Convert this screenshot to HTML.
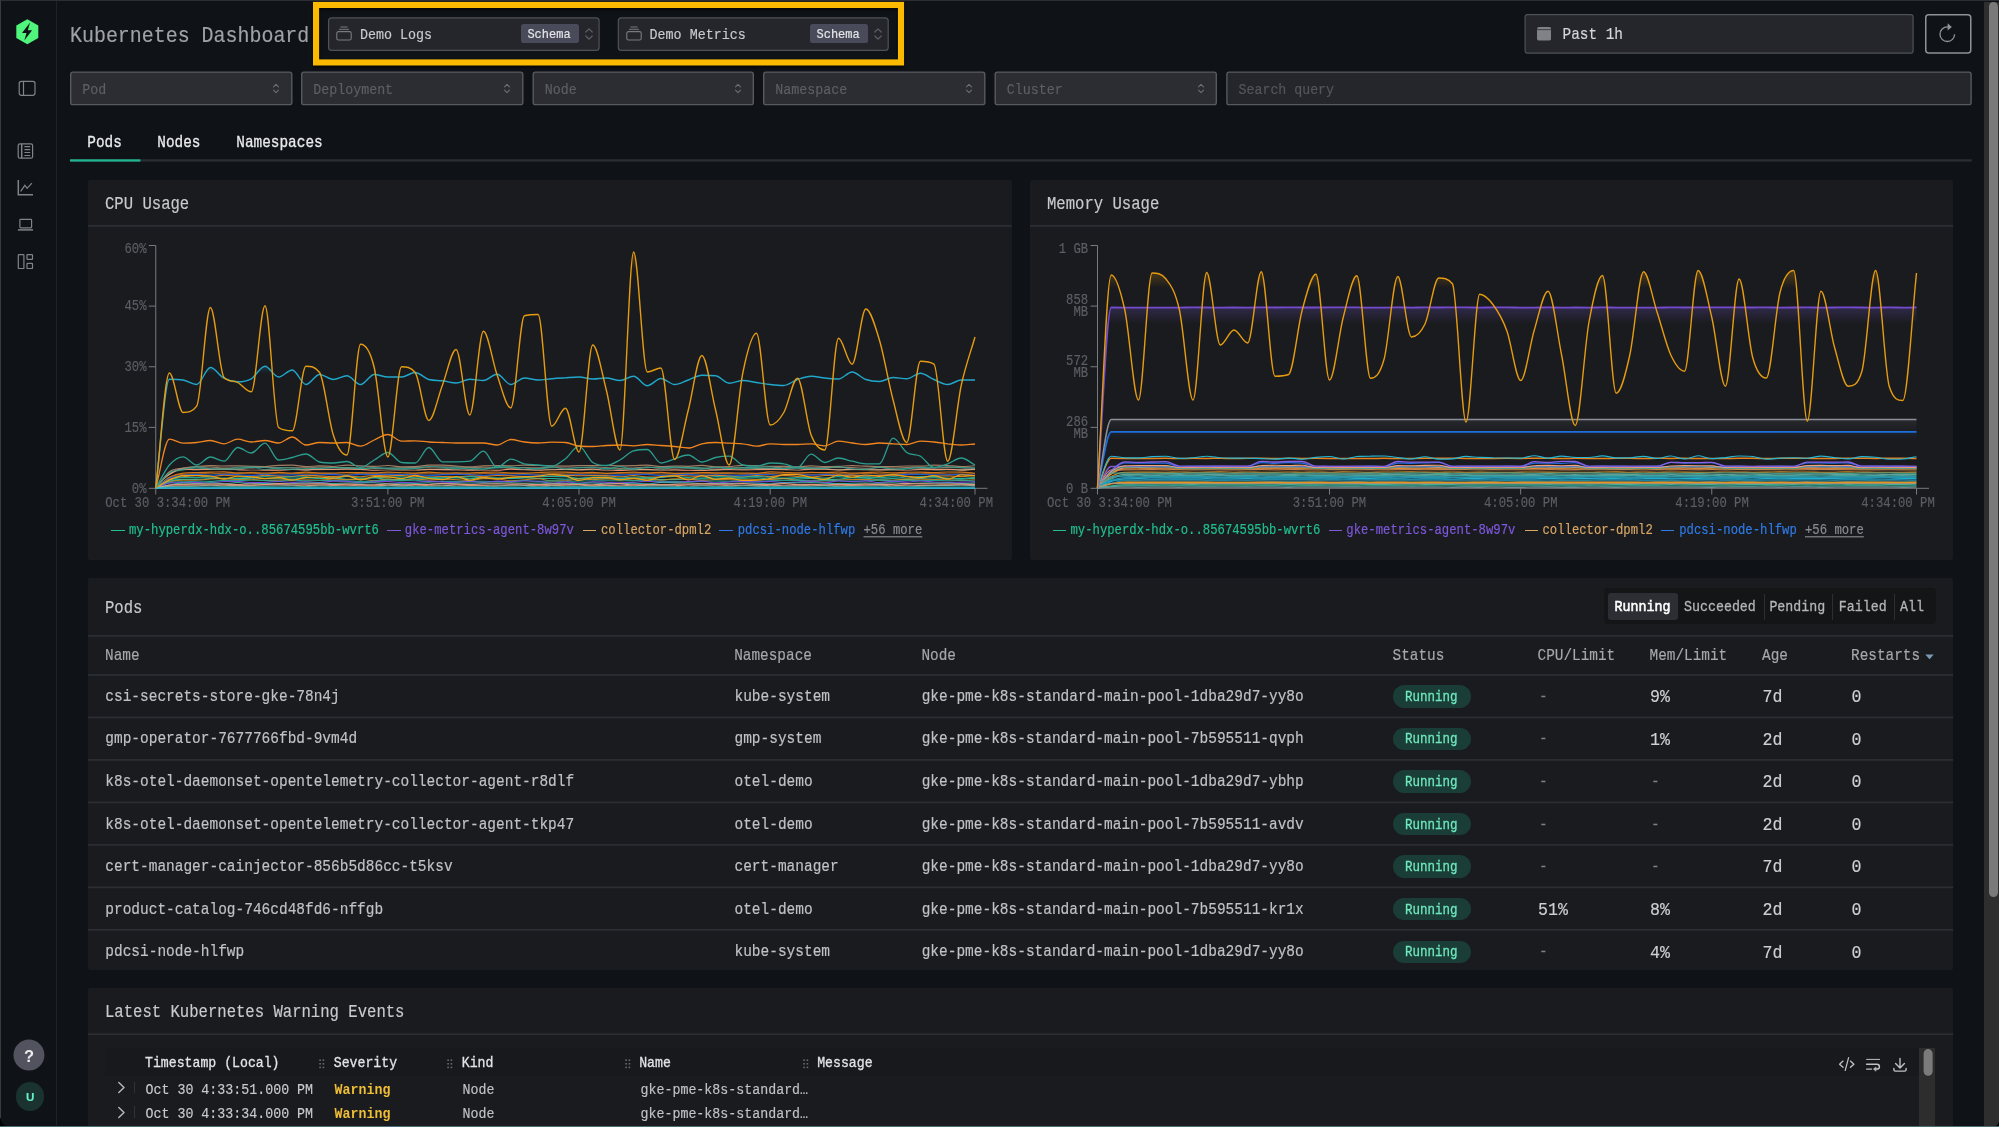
<!DOCTYPE html>
<html><head><meta charset="utf-8"><title>Kubernetes Dashboard</title>
<style>
html,body{margin:0;padding:0;background:#0f1216;}
body{width:1999px;height:1127px;position:relative;overflow:hidden;font-family:"Liberation Mono", monospace;}
.t{position:absolute;white-space:pre;font-family:"Liberation Mono", monospace;-webkit-text-stroke:0.15px currentColor;}
.md{-webkit-text-stroke:0.26px currentColor;}
.r{position:absolute;display:block;}
#wrap{position:absolute;left:0;top:0;width:1999px;height:1127px;will-change:transform;}
</style></head><body><div id="wrap">
<div class="r" style="left:0px;top:0px;width:1999.00px;height:1.00px;background:#2c2e33"></div>
<div class="r" style="left:0px;top:0px;width:1.00px;height:1127.00px;background:#3a3b40"></div>
<div class="r" style="left:55.6px;top:1px;width:1.20px;height:1126.00px;background:#1f2126"></div>
<div class="r" style="left:1984px;top:1.5px;width:15.00px;height:1125.50px;background:#2e2e2e"></div>
<div class="r" style="left:1989px;top:2px;width:8.50px;height:895.00px;background:#7a7a7a;border-radius:5px"></div>
<div class="r" style="left:88px;top:180px;width:923.50px;height:379.60px;background:#1a1b1f;border-radius:2px"></div>
<div class="r" style="left:1030px;top:180px;width:923.20px;height:379.60px;background:#1a1b1f;border-radius:2px"></div>
<div class="r" style="left:88px;top:578px;width:1865.20px;height:392.00px;background:#1a1b1f;border-radius:2px"></div>
<div class="r" style="left:88px;top:988px;width:1865.20px;height:139.00px;background:#1a1b1f;border-radius:2px 2px 0 0"></div>
<svg class="r" style="left:0;top:0" width="1999" height="1127" viewBox="0 0 1999 1127">
<defs>
<linearGradient id="gP" x1="0" y1="0" x2="0" y2="1" gradientUnits="objectBoundingBox"><stop offset="0" stop-color="#7c5cdc" stop-opacity="0.22"/><stop offset="0.09" stop-color="#7c5cdc" stop-opacity="0"/></linearGradient>
<linearGradient id="gO" x1="0" y1="0" x2="0" y2="1"><stop offset="0" stop-color="#f59f00" stop-opacity="0.25"/><stop offset="0.08" stop-color="#f59f00" stop-opacity="0"/></linearGradient>
<linearGradient id="gG" x1="0" y1="0" x2="0" y2="1"><stop offset="0" stop-color="#868e96" stop-opacity="0.12"/><stop offset="0.2" stop-color="#868e96" stop-opacity="0"/></linearGradient>
<linearGradient id="gB" x1="0" y1="0" x2="0" y2="1"><stop offset="0" stop-color="#1c6fd8" stop-opacity="0.1"/><stop offset="0.12" stop-color="#1c6fd8" stop-opacity="0"/></linearGradient>
<linearGradient id="gT" x1="0" y1="0" x2="0" y2="1"><stop offset="0" stop-color="#22a8c8" stop-opacity="0.2"/><stop offset="0.06" stop-color="#22a8c8" stop-opacity="0"/></linearGradient>
</defs>
<path d="M148.75,245.5H155.75V488.3" fill="none" stroke="#777a80" stroke-width="1"/><path d="M155.75,488.3H987.5" fill="none" stroke="#777a80" stroke-width="1"/><path d="M148.75,306.1H155.75" stroke="#777a80" stroke-width="1"/><path d="M148.75,366.75H155.75" stroke="#777a80" stroke-width="1"/><path d="M148.75,427.4H155.75" stroke="#777a80" stroke-width="1"/><path d="M148.75,488.3H155.75" stroke="#777a80" stroke-width="1"/><path d="M155.75,488.3V494.5" stroke="#777a80" stroke-width="1"/><path d="M387.9,488.3V494.5" stroke="#777a80" stroke-width="1"/><path d="M579.0,488.3V494.5" stroke="#777a80" stroke-width="1"/><path d="M770.2,488.3V494.5" stroke="#777a80" stroke-width="1"/><path d="M975,488.3V494.5" stroke="#777a80" stroke-width="1"/>
<path d="M155.8,488.0C160.3,482.6 164.9,475.0 169.4,471.7C174.0,468.4 178.5,469.0 183.1,468.1C187.6,467.3 192.2,466.9 196.7,466.5C201.3,466.1 205.8,465.6 210.4,465.6C214.9,465.6 219.5,466.0 224.0,466.0C228.6,466.0 233.1,465.9 237.7,465.9C242.2,465.9 246.8,466.2 251.3,466.3C255.9,466.4 260.4,466.5 265.0,466.5C269.5,466.5 274.1,465.4 278.6,465.3C283.2,465.1 287.7,465.1 292.3,465.1C296.8,465.1 301.4,466.6 305.9,466.6C310.5,466.6 315.0,465.9 319.6,465.9C324.1,465.9 328.7,466.5 333.3,466.5C337.8,466.5 342.4,465.1 346.9,465.1C351.5,465.1 356.0,465.7 360.6,465.9C365.1,466.1 369.7,466.4 374.2,466.4C378.8,466.4 383.3,465.5 387.9,465.5C392.4,465.5 397.0,466.8 401.5,466.8C406.1,466.8 410.6,466.8 415.2,466.7C419.7,466.7 424.3,465.2 428.8,465.1C433.4,465.1 437.9,465.1 442.5,465.1C447.0,465.1 451.6,465.8 456.1,466.1C460.7,466.4 465.2,466.8 469.8,466.8C474.3,466.8 478.9,466.0 483.4,465.8C488.0,465.6 492.5,465.5 497.1,465.5C501.7,465.5 506.2,465.9 510.8,465.9C515.3,465.9 519.9,465.1 524.4,465.1C529.0,465.1 533.5,465.4 538.1,465.5C542.6,465.6 547.2,465.8 551.7,465.9C556.3,466.0 560.8,466.0 565.4,466.0C569.9,466.0 574.5,465.5 579.0,465.5C583.6,465.5 588.1,465.5 592.7,465.5C597.2,465.5 601.8,465.5 606.3,465.5C610.9,465.5 615.4,465.9 620.0,465.9C624.5,465.9 629.1,465.8 633.6,465.6C638.2,465.5 642.7,465.1 647.3,465.1C651.8,465.1 656.4,466.6 660.9,466.6C665.5,466.6 670.1,466.1 674.6,466.1C679.2,466.1 683.7,466.3 688.3,466.3C692.8,466.3 697.4,465.4 701.9,465.4C706.5,465.4 711.0,466.9 715.6,466.9C720.1,466.9 724.7,466.9 729.2,466.7C733.8,466.4 738.3,465.3 742.9,465.3C747.4,465.3 752.0,465.5 756.5,465.7C761.1,465.9 765.6,466.4 770.2,466.4C774.7,466.4 779.3,466.4 783.8,466.4C788.4,466.4 792.9,466.8 797.5,466.8C802.0,466.8 806.6,465.9 811.1,465.9C815.7,465.9 820.2,466.6 824.8,466.6C829.3,466.6 833.9,466.5 838.5,466.3C843.0,466.2 847.6,465.6 852.1,465.6C856.7,465.6 861.2,466.0 865.8,466.2C870.3,466.3 874.9,466.7 879.4,466.7C884.0,466.7 888.5,466.7 893.1,466.6C897.6,466.6 902.2,466.0 906.7,466.0C911.3,466.0 915.8,466.2 920.4,466.2C924.9,466.2 929.5,465.2 934.0,465.2C938.6,465.2 943.1,465.3 947.7,465.5C952.2,465.8 956.8,466.5 961.3,466.5C965.9,466.5 970.4,466.1 975.0,465.8" fill="none" stroke="#b08a6a" stroke-width="1.152" stroke-opacity="0.9" stroke-linejoin="round"/><path d="M155.8,488.0C160.3,483.3 164.9,477.1 169.4,473.8C174.0,470.5 178.5,469.5 183.1,468.3C187.6,467.1 192.2,466.9 196.7,466.9C201.3,466.9 205.8,466.9 210.4,467.0C214.9,467.0 219.5,468.1 224.0,468.1C228.6,468.1 233.1,468.0 237.7,468.0C242.2,467.9 246.8,468.0 251.3,467.9C255.9,467.8 260.4,467.3 265.0,467.3C269.5,467.3 274.1,467.8 278.6,467.8C283.2,467.8 287.7,467.8 292.3,467.8C296.8,467.8 301.4,467.8 305.9,467.7C310.5,467.7 315.0,467.1 319.6,467.1C324.1,467.1 328.7,467.5 333.3,467.5C337.8,467.5 342.4,467.4 346.9,467.4C351.5,467.4 356.0,467.8 360.6,467.9C365.1,468.1 369.7,468.4 374.2,468.4C378.8,468.4 383.3,468.4 387.9,468.3C392.4,468.2 397.0,467.8 401.5,467.7C406.1,467.5 410.6,467.6 415.2,467.5C419.7,467.4 424.3,467.3 428.8,467.2C433.4,467.1 437.9,466.9 442.5,466.9C447.0,466.9 451.6,466.9 456.1,466.9C460.7,466.9 465.2,467.5 469.8,467.5C474.3,467.5 478.9,467.3 483.4,467.3C488.0,467.3 492.5,467.3 497.1,467.4C501.7,467.5 506.2,468.2 510.8,468.2C515.3,468.2 519.9,467.6 524.4,467.6C529.0,467.6 533.5,467.7 538.1,467.7C542.6,467.7 547.2,467.3 551.7,467.2C556.3,467.0 560.8,466.9 565.4,466.9C569.9,466.9 574.5,467.3 579.0,467.3C583.6,467.3 588.1,467.0 592.7,467.0C597.2,467.0 601.8,467.4 606.3,467.6C610.9,467.8 615.4,468.4 620.0,468.4C624.5,468.4 629.1,468.1 633.6,467.9C638.2,467.7 642.7,467.1 647.3,467.1C651.8,467.1 656.4,468.2 660.9,468.2C665.5,468.2 670.1,468.1 674.6,468.1C679.2,468.0 683.7,468.0 688.3,468.0C692.8,468.0 697.4,468.2 701.9,468.2C706.5,468.2 711.0,468.0 715.6,468.0C720.1,468.0 724.7,468.1 729.2,468.1C733.8,468.1 738.3,467.4 742.9,467.4C747.4,467.4 752.0,468.4 756.5,468.4C761.1,468.4 765.6,468.4 770.2,468.3C774.7,468.3 779.3,467.1 783.8,467.1C788.4,467.1 792.9,468.0 797.5,468.0C802.0,468.0 806.6,468.0 811.1,467.9C815.7,467.9 820.2,467.5 824.8,467.5C829.3,467.5 833.9,467.6 838.5,467.6C843.0,467.6 847.6,467.6 852.1,467.6C856.7,467.6 861.2,468.3 865.8,468.3C870.3,468.3 874.9,467.6 879.4,467.6C884.0,467.6 888.5,468.1 893.1,468.1C897.6,468.1 902.2,467.4 906.7,467.4C911.3,467.4 915.8,468.2 920.4,468.2C924.9,468.2 929.5,468.2 934.0,468.2C938.6,468.2 943.1,467.5 947.7,467.5C952.2,467.5 956.8,467.6 961.3,467.7C965.9,467.8 970.4,468.1 975.0,468.3" fill="none" stroke="#a5846a" stroke-width="1.008" stroke-opacity="0.9" stroke-linejoin="round"/><path d="M155.8,488.0C160.3,483.1 164.9,476.4 169.4,473.4C174.0,470.5 178.5,471.0 183.1,470.1C187.6,469.2 192.2,468.2 196.7,468.2C201.3,468.2 205.8,468.9 210.4,468.9C214.9,469.0 219.5,469.0 224.0,469.0C228.6,469.0 233.1,467.4 237.7,467.2C242.2,467.1 246.8,467.1 251.3,467.1C255.9,467.1 260.4,469.7 265.0,469.7C269.5,469.7 274.1,467.9 278.6,467.8C283.2,467.8 287.7,467.8 292.3,467.8C296.8,467.8 301.4,470.1 305.9,470.1C310.5,470.1 315.0,468.5 319.6,468.5C324.1,468.5 328.7,469.6 333.3,469.6C337.8,469.6 342.4,468.5 346.9,468.5C351.5,468.5 356.0,469.0 360.6,469.0C365.1,469.0 369.7,467.5 374.2,467.5C378.8,467.5 383.3,468.6 387.9,469.0C392.4,469.4 397.0,469.7 401.5,469.7C406.1,469.7 410.6,468.7 415.2,468.7C419.7,468.7 424.3,469.4 428.8,469.4C433.4,469.4 437.9,469.4 442.5,469.1C447.0,468.9 451.6,467.2 456.1,467.2C460.7,467.2 465.2,469.4 469.8,469.4C474.3,469.4 478.9,469.1 483.4,468.9C488.0,468.6 492.5,468.3 497.1,468.0C501.7,467.7 506.2,467.1 510.8,467.1C515.3,467.1 519.9,469.7 524.4,469.7C529.0,469.7 533.5,468.5 538.1,468.5C542.6,468.5 547.2,469.1 551.7,469.3C556.3,469.5 560.8,469.8 565.4,469.8C569.9,469.8 574.5,469.3 579.0,469.3C583.6,469.3 588.1,469.9 592.7,469.9C597.2,469.9 601.8,468.3 606.3,468.3C610.9,468.3 615.4,469.5 620.0,469.5C624.5,469.5 629.1,468.4 633.6,468.4C638.2,468.4 642.7,470.0 647.3,470.0C651.8,470.0 656.4,470.0 660.9,469.8C665.5,469.6 670.1,467.3 674.6,467.3C679.2,467.3 683.7,467.4 688.3,467.5C692.8,467.5 697.4,467.5 701.9,467.7C706.5,468.0 711.0,470.1 715.6,470.1C720.1,470.1 724.7,468.4 729.2,468.4C733.8,468.4 738.3,469.0 742.9,469.0C747.4,469.0 752.0,468.0 756.5,468.0C761.1,468.0 765.6,468.6 770.2,468.6C774.7,468.6 779.3,468.3 783.8,468.2C788.4,468.2 792.9,468.1 797.5,468.1C802.0,468.1 806.6,468.9 811.1,468.9C815.7,468.9 820.2,468.9 824.8,468.9C829.3,468.9 833.9,469.9 838.5,469.9C843.0,469.9 847.6,469.2 852.1,469.2C856.7,469.2 861.2,469.9 865.8,469.9C870.3,469.9 874.9,469.7 879.4,469.7C884.0,469.7 888.5,470.1 893.1,470.1C897.6,470.1 902.2,469.6 906.7,469.1C911.3,468.7 915.8,467.5 920.4,467.5C924.9,467.5 929.5,469.4 934.0,469.7C938.6,470.0 943.1,470.0 947.7,470.0C952.2,470.0 956.8,470.0 961.3,469.9C965.9,469.7 970.4,469.2 975.0,468.8" fill="none" stroke="#2fa592" stroke-width="0.864" stroke-opacity="0.9" stroke-linejoin="round"/><path d="M155.8,488.0C160.3,483.5 164.9,477.7 169.4,474.6C174.0,471.5 178.5,469.2 183.1,469.2C187.6,469.2 192.2,469.6 196.7,469.6C201.3,469.6 205.8,469.3 210.4,469.3C214.9,469.2 219.5,469.1 224.0,469.1C228.6,469.1 233.1,469.4 237.7,469.6C242.2,469.9 246.8,470.5 251.3,470.5C255.9,470.5 260.4,470.3 265.0,470.3C269.5,470.2 274.1,470.3 278.6,470.2C283.2,470.2 287.7,469.4 292.3,469.4C296.8,469.4 301.4,469.9 305.9,469.9C310.5,469.9 315.0,469.5 319.6,469.5C324.1,469.4 328.7,469.3 333.3,469.3C337.8,469.2 342.4,469.2 346.9,469.2C351.5,469.2 356.0,469.2 360.6,469.4C365.1,469.5 369.7,470.5 374.2,470.5C378.8,470.5 383.3,470.3 387.9,470.3C392.4,470.3 397.0,470.3 401.5,470.3C406.1,470.3 410.6,470.3 415.2,470.3C419.7,470.3 424.3,469.3 428.8,469.3C433.4,469.3 437.9,469.4 442.5,469.5C447.0,469.6 451.6,469.9 456.1,470.0C460.7,470.1 465.2,470.1 469.8,470.2C474.3,470.2 478.9,470.3 483.4,470.4C488.0,470.4 492.5,470.4 497.1,470.4C501.7,470.4 506.2,469.2 510.8,469.2C515.3,469.2 519.9,469.9 524.4,470.0C529.0,470.1 533.5,470.1 538.1,470.1C542.6,470.1 547.2,469.9 551.7,469.8C556.3,469.7 560.8,469.3 565.4,469.3C569.9,469.3 574.5,469.8 579.0,469.8C583.6,469.8 588.1,469.2 592.7,469.2C597.2,469.2 601.8,470.5 606.3,470.5C610.9,470.5 615.4,470.5 620.0,470.4C624.5,470.3 629.1,470.0 633.6,469.9C638.2,469.7 642.7,469.5 647.3,469.5C651.8,469.5 656.4,470.4 660.9,470.4C665.5,470.4 670.1,469.9 674.6,469.9C679.2,469.9 683.7,470.4 688.3,470.4C692.8,470.4 697.4,470.4 701.9,470.3C706.5,470.3 711.0,469.9 715.6,469.8C720.1,469.7 724.7,469.7 729.2,469.7C733.8,469.7 738.3,470.0 742.9,470.0C747.4,470.0 752.0,469.8 756.5,469.7C761.1,469.6 765.6,469.3 770.2,469.3C774.7,469.3 779.3,469.3 783.8,469.5C788.4,469.7 792.9,470.3 797.5,470.3C802.0,470.3 806.6,469.1 811.1,469.1C815.7,469.1 820.2,469.1 824.8,469.1C829.3,469.1 833.9,470.0 838.5,470.0C843.0,470.0 847.6,469.5 852.1,469.5C856.7,469.5 861.2,469.9 865.8,469.9C870.3,469.9 874.9,469.8 879.4,469.8C884.0,469.7 888.5,469.6 893.1,469.6C897.6,469.6 902.2,470.6 906.7,470.6C911.3,470.6 915.8,469.3 920.4,469.3C924.9,469.3 929.5,469.7 934.0,469.7C938.6,469.7 943.1,469.3 947.7,469.3C952.2,469.3 956.8,470.0 961.3,470.0C965.9,470.0 970.4,469.6 975.0,469.5" fill="none" stroke="#f2a07a" stroke-width="1.296" stroke-opacity="0.9" stroke-linejoin="round"/><path d="M155.8,488.0C160.3,484.0 164.9,478.6 169.4,476.0C174.0,473.5 178.5,473.4 183.1,472.6C187.6,471.9 192.2,471.5 196.7,471.5C201.3,471.5 205.8,471.6 210.4,471.6C214.9,471.6 219.5,471.5 224.0,471.5C228.6,471.5 233.1,471.6 237.7,471.6C242.2,471.6 246.8,470.9 251.3,470.9C255.9,470.9 260.4,471.2 265.0,471.3C269.5,471.4 274.1,471.6 278.6,471.6C283.2,471.6 287.7,471.4 292.3,471.4C296.8,471.4 301.4,471.6 305.9,471.6C310.5,471.6 315.0,471.0 319.6,471.0C324.1,471.0 328.7,471.3 333.3,471.3C337.8,471.3 342.4,471.1 346.9,471.1C351.5,471.1 356.0,471.3 360.6,471.3C365.1,471.4 369.7,471.4 374.2,471.4C378.8,471.4 383.3,470.9 387.9,470.9C392.4,470.9 397.0,471.0 401.5,471.1C406.1,471.1 410.6,471.1 415.2,471.1C419.7,471.2 424.3,471.6 428.8,471.6C433.4,471.6 437.9,471.6 442.5,471.5C447.0,471.4 451.6,471.0 456.1,471.0C460.7,471.0 465.2,471.5 469.8,471.5C474.3,471.5 478.9,471.0 483.4,471.0C488.0,471.0 492.5,471.4 497.1,471.4C501.7,471.4 506.2,471.1 510.8,471.0C515.3,470.9 519.9,470.9 524.4,470.9C529.0,470.9 533.5,471.6 538.1,471.6C542.6,471.6 547.2,471.1 551.7,471.1C556.3,471.1 560.8,471.1 565.4,471.1C569.9,471.1 574.5,471.7 579.0,471.7C583.6,471.7 588.1,471.7 592.7,471.6C597.2,471.5 601.8,471.1 606.3,471.1C610.9,471.1 615.4,471.7 620.0,471.7C624.5,471.7 629.1,471.3 633.6,471.3C638.2,471.3 642.7,471.4 647.3,471.4C651.8,471.4 656.4,471.1 660.9,471.1C665.5,471.1 670.1,471.6 674.6,471.6C679.2,471.6 683.7,471.4 688.3,471.4C692.8,471.4 697.4,471.7 701.9,471.7C706.5,471.7 711.0,471.7 715.6,471.6C720.1,471.6 724.7,471.1 729.2,471.1C733.8,471.1 738.3,471.2 742.9,471.2C747.4,471.2 752.0,471.1 756.5,471.0C761.1,471.0 765.6,471.0 770.2,471.0C774.7,471.0 779.3,471.0 783.8,471.0C788.4,471.0 792.9,471.1 797.5,471.1C802.0,471.2 806.6,471.4 811.1,471.4C815.7,471.4 820.2,470.9 824.8,470.9C829.3,470.9 833.9,471.4 838.5,471.4C843.0,471.4 847.6,471.2 852.1,471.2C856.7,471.2 861.2,471.2 865.8,471.2C870.3,471.2 874.9,471.5 879.4,471.5C884.0,471.5 888.5,471.4 893.1,471.3C897.6,471.2 902.2,471.2 906.7,471.2C911.3,471.2 915.8,471.2 920.4,471.3C924.9,471.3 929.5,471.5 934.0,471.5C938.6,471.5 943.1,471.0 947.7,471.0C952.2,471.0 956.8,471.7 961.3,471.7C965.9,471.7 970.4,471.2 975.0,470.9" fill="none" stroke="#101114" stroke-width="1.152" stroke-opacity="0.9" stroke-linejoin="round"/><path d="M155.8,488.0C160.3,484.4 164.9,479.7 169.4,477.2C174.0,474.8 178.5,473.6 183.1,473.1C187.6,472.6 192.2,472.7 196.7,472.6C201.3,472.4 205.8,472.4 210.4,472.2C214.9,472.1 219.5,471.8 224.0,471.8C228.6,471.8 233.1,472.9 237.7,472.9C242.2,472.9 246.8,472.6 251.3,472.6C255.9,472.6 260.4,473.0 265.0,473.0C269.5,473.0 274.1,472.4 278.6,472.4C283.2,472.4 287.7,473.0 292.3,473.0C296.8,473.0 301.4,472.2 305.9,472.2C310.5,472.2 315.0,473.1 319.6,473.1C324.1,473.1 328.7,473.1 333.3,473.0C337.8,472.9 342.4,472.5 346.9,472.5C351.5,472.5 356.0,472.6 360.6,472.7C365.1,472.7 369.7,472.9 374.2,472.9C378.8,472.9 383.3,472.1 387.9,472.1C392.4,472.1 397.0,472.5 401.5,472.7C406.1,472.8 410.6,473.1 415.2,473.1C419.7,473.1 424.3,472.2 428.8,472.2C433.4,472.2 437.9,473.1 442.5,473.1C447.0,473.1 451.6,472.9 456.1,472.9C460.7,472.9 465.2,473.1 469.8,473.1C474.3,473.1 478.9,472.5 483.4,472.3C488.0,472.1 492.5,472.0 497.1,472.0C501.7,472.0 506.2,473.1 510.8,473.1C515.3,473.1 519.9,473.1 524.4,473.1C529.0,473.1 533.5,472.7 538.1,472.5C542.6,472.3 547.2,472.0 551.7,472.0C556.3,472.0 560.8,472.0 565.4,472.1C569.9,472.3 574.5,472.8 579.0,472.8C583.6,472.8 588.1,472.3 592.7,472.3C597.2,472.3 601.8,473.3 606.3,473.3C610.9,473.3 615.4,472.9 620.0,472.7C624.5,472.5 629.1,472.1 633.6,472.1C638.2,472.1 642.7,472.8 647.3,472.8C651.8,472.8 656.4,472.4 660.9,472.4C665.5,472.4 670.1,473.3 674.6,473.3C679.2,473.3 683.7,473.3 688.3,473.2C692.8,473.2 697.4,472.6 701.9,472.6C706.5,472.6 711.0,472.8 715.6,472.8C720.1,472.9 724.7,472.9 729.2,472.9C733.8,473.0 738.3,473.0 742.9,473.1C747.4,473.1 752.0,473.3 756.5,473.3C761.1,473.3 765.6,471.9 770.2,471.9C774.7,471.9 779.3,472.2 783.8,472.4C788.4,472.5 792.9,472.8 797.5,472.8C802.0,472.8 806.6,472.3 811.1,472.3C815.7,472.3 820.2,472.7 824.8,472.7C829.3,472.7 833.9,472.0 838.5,472.0C843.0,472.0 847.6,473.2 852.1,473.2C856.7,473.2 861.2,472.8 865.8,472.6C870.3,472.4 874.9,472.0 879.4,472.0C884.0,472.0 888.5,472.9 893.1,472.9C897.6,472.9 902.2,472.4 906.7,472.3C911.3,472.2 915.8,472.1 920.4,472.1C924.9,472.1 929.5,472.6 934.0,472.6C938.6,472.6 943.1,472.0 947.7,472.0C952.2,472.0 956.8,472.0 961.3,472.1C965.9,472.3 970.4,472.8 975.0,473.2" fill="none" stroke="#e8801c" stroke-width="1.152" stroke-opacity="0.9" stroke-linejoin="round"/><path d="M155.8,488.0C160.3,484.5 164.9,479.9 169.4,477.6C174.0,475.3 178.5,474.7 183.1,474.4C187.6,474.0 192.2,474.2 196.7,474.0C201.3,473.8 205.8,473.2 210.4,473.2C214.9,473.2 219.5,473.8 224.0,473.8C228.6,473.8 233.1,473.7 237.7,473.6C242.2,473.5 246.8,473.2 251.3,473.2C255.9,473.2 260.4,473.8 265.0,473.8C269.5,473.8 274.1,473.2 278.6,473.2C283.2,473.2 287.7,473.7 292.3,473.7C296.8,473.7 301.4,473.2 305.9,473.2C310.5,473.2 315.0,473.2 319.6,473.3C324.1,473.3 328.7,473.5 333.3,473.7C337.8,473.9 342.4,474.2 346.9,474.2C351.5,474.2 356.0,473.3 360.6,473.3C365.1,473.3 369.7,473.3 374.2,473.4C378.8,473.5 383.3,473.8 387.9,474.0C392.4,474.1 397.0,474.4 401.5,474.4C406.1,474.4 410.6,474.0 415.2,473.9C419.7,473.8 424.3,473.7 428.8,473.7C433.4,473.7 437.9,474.4 442.5,474.4C447.0,474.4 451.6,473.2 456.1,473.2C460.7,473.2 465.2,474.3 469.8,474.3C474.3,474.3 478.9,473.7 483.4,473.5C488.0,473.4 492.5,473.4 497.1,473.3C501.7,473.3 506.2,473.3 510.8,473.3C515.3,473.3 519.9,473.4 524.4,473.6C529.0,473.7 533.5,474.2 538.1,474.2C542.6,474.2 547.2,473.4 551.7,473.4C556.3,473.4 560.8,473.8 565.4,473.9C569.9,474.0 574.5,474.0 579.0,474.0C583.6,474.0 588.1,473.6 592.7,473.6C597.2,473.6 601.8,473.9 606.3,473.9C610.9,473.9 615.4,473.2 620.0,473.2C624.5,473.2 629.1,473.2 633.6,473.2C638.2,473.2 642.7,473.3 647.3,473.4C651.8,473.6 656.4,474.0 660.9,474.0C665.5,474.0 670.1,473.8 674.6,473.7C679.2,473.6 683.7,473.6 688.3,473.6C692.8,473.6 697.4,473.9 701.9,473.9C706.5,473.9 711.0,473.8 715.6,473.7C720.1,473.7 724.7,473.5 729.2,473.5C733.8,473.5 738.3,474.2 742.9,474.2C747.4,474.2 752.0,474.2 756.5,474.1C761.1,473.9 765.6,473.5 770.2,473.5C774.7,473.5 779.3,473.9 783.8,473.9C788.4,473.9 792.9,473.8 797.5,473.8C802.0,473.8 806.6,474.3 811.1,474.3C815.7,474.3 820.2,474.2 824.8,474.1C829.3,474.0 833.9,473.5 838.5,473.5C843.0,473.5 847.6,474.4 852.1,474.4C856.7,474.4 861.2,473.3 865.8,473.3C870.3,473.3 874.9,473.6 879.4,473.7C884.0,473.8 888.5,474.1 893.1,474.1C897.6,474.1 902.2,473.3 906.7,473.3C911.3,473.3 915.8,473.8 920.4,473.8C924.9,473.8 929.5,473.2 934.0,473.2C938.6,473.2 943.1,473.9 947.7,474.0C952.2,474.1 956.8,474.1 961.3,474.1C965.9,474.1 970.4,474.0 975.0,473.9" fill="none" stroke="#c9781c" stroke-width="0.864" stroke-opacity="0.9" stroke-linejoin="round"/><path d="M155.8,488.0C160.3,484.8 164.9,480.4 169.4,478.3C174.0,476.2 178.5,476.2 183.1,475.5C187.6,474.9 192.2,474.4 196.7,474.4C201.3,474.4 205.8,475.2 210.4,475.2C214.9,475.2 219.5,474.4 224.0,474.4C228.6,474.4 233.1,474.4 237.7,474.6C242.2,474.8 246.8,475.5 251.3,475.5C255.9,475.5 260.4,474.5 265.0,474.5C269.5,474.5 274.1,475.1 278.6,475.1C283.2,475.1 287.7,474.9 292.3,474.8C296.8,474.8 301.4,474.8 305.9,474.8C310.5,474.8 315.0,474.9 319.6,474.9C324.1,474.9 328.7,474.5 333.3,474.5C337.8,474.5 342.4,475.3 346.9,475.3C351.5,475.3 356.0,474.4 360.6,474.4C365.1,474.4 369.7,474.6 374.2,474.6C378.8,474.6 383.3,474.3 387.9,474.3C392.4,474.3 397.0,474.5 401.5,474.6C406.1,474.7 410.6,474.6 415.2,474.8C419.7,474.9 424.3,475.4 428.8,475.4C433.4,475.4 437.9,474.9 442.5,474.7C447.0,474.6 451.6,474.4 456.1,474.4C460.7,474.4 465.2,474.4 469.8,474.6C474.3,474.8 478.9,475.5 483.4,475.5C488.0,475.5 492.5,474.3 497.1,474.3C501.7,474.3 506.2,475.1 510.8,475.1C515.3,475.1 519.9,474.7 524.4,474.7C529.0,474.7 533.5,475.1 538.1,475.1C542.6,475.1 547.2,474.7 551.7,474.7C556.3,474.7 560.8,475.1 565.4,475.1C569.9,475.1 574.5,474.9 579.0,474.9C583.6,474.9 588.1,475.0 592.7,475.1C597.2,475.2 601.8,475.4 606.3,475.4C610.9,475.4 615.4,475.2 620.0,475.0C624.5,474.8 629.1,474.5 633.6,474.4C638.2,474.3 642.7,474.3 647.3,474.3C651.8,474.3 656.4,475.5 660.9,475.5C665.5,475.5 670.1,475.0 674.6,474.9C679.2,474.7 683.7,474.5 688.3,474.5C692.8,474.5 697.4,475.5 701.9,475.5C706.5,475.5 711.0,475.0 715.6,475.0C720.1,475.0 724.7,475.1 729.2,475.2C733.8,475.3 738.3,475.4 742.9,475.4C747.4,475.4 752.0,474.6 756.5,474.6C761.1,474.6 765.6,474.6 770.2,474.7C774.7,474.8 779.3,475.4 783.8,475.4C788.4,475.4 792.9,474.4 797.5,474.4C802.0,474.4 806.6,475.2 811.1,475.2C815.7,475.2 820.2,474.4 824.8,474.4C829.3,474.4 833.9,475.1 838.5,475.1C843.0,475.2 847.6,475.1 852.1,475.2C856.7,475.2 861.2,475.5 865.8,475.5C870.3,475.5 874.9,475.4 879.4,475.3C884.0,475.2 888.5,475.0 893.1,474.9C897.6,474.8 902.2,474.6 906.7,474.5C911.3,474.4 915.8,474.4 920.4,474.4C924.9,474.4 929.5,474.9 934.0,474.9C938.6,474.9 943.1,474.9 947.7,474.9C952.2,474.9 956.8,474.3 961.3,474.3C965.9,474.3 970.4,475.1 975.0,475.4" fill="none" stroke="#1f5fe0" stroke-width="1.296" stroke-opacity="0.9" stroke-linejoin="round"/><path d="M155.8,488.0C160.3,485.1 164.9,481.3 169.4,479.4C174.0,477.6 178.5,477.4 183.1,476.8C187.6,476.1 192.2,475.4 196.7,475.4C201.3,475.4 205.8,477.0 210.4,477.0C214.9,477.0 219.5,475.2 224.0,475.2C228.6,475.2 233.1,475.9 237.7,476.2C242.2,476.5 246.8,477.0 251.3,477.0C255.9,477.0 260.4,475.3 265.0,475.3C269.5,475.3 274.1,476.2 278.6,476.3C283.2,476.4 287.7,476.4 292.3,476.4C296.8,476.4 301.4,475.2 305.9,475.2C310.5,475.2 315.0,475.7 319.6,475.9C324.1,476.2 328.7,476.6 333.3,476.6C337.8,476.6 342.4,476.1 346.9,476.1C351.5,476.1 356.0,476.7 360.6,476.7C365.1,476.7 369.7,475.5 374.2,475.5C378.8,475.5 383.3,475.7 387.9,475.7C392.4,475.7 397.0,475.4 401.5,475.4C406.1,475.4 410.6,475.9 415.2,476.2C419.7,476.5 424.3,477.1 428.8,477.1C433.4,477.1 437.9,476.4 442.5,476.4C447.0,476.4 451.6,476.8 456.1,476.8C460.7,476.8 465.2,476.0 469.8,476.0C474.3,476.0 478.9,476.7 483.4,476.7C488.0,476.7 492.5,475.4 497.1,475.4C501.7,475.4 506.2,475.6 510.8,475.8C515.3,476.0 519.9,476.5 524.4,476.6C529.0,476.7 533.5,476.7 538.1,476.7C542.6,476.7 547.2,476.3 551.7,476.0C556.3,475.8 560.8,475.3 565.4,475.3C569.9,475.3 574.5,475.7 579.0,475.7C583.6,475.7 588.1,475.6 592.7,475.6C597.2,475.6 601.8,475.6 606.3,475.7C610.9,475.9 615.4,476.8 620.0,476.8C624.5,476.8 629.1,475.6 633.6,475.6C638.2,475.6 642.7,477.0 647.3,477.0C651.8,477.0 656.4,477.0 660.9,477.0C665.5,477.0 670.1,475.3 674.6,475.3C679.2,475.3 683.7,475.8 688.3,475.9C692.8,476.1 697.4,476.2 701.9,476.2C706.5,476.2 711.0,475.2 715.6,475.2C720.1,475.2 724.7,475.7 729.2,476.0C733.8,476.3 738.3,477.0 742.9,477.0C747.4,477.0 752.0,475.4 756.5,475.4C761.1,475.4 765.6,476.4 770.2,476.4C774.7,476.4 779.3,475.4 783.8,475.4C788.4,475.4 792.9,476.1 797.5,476.4C802.0,476.6 806.6,477.0 811.1,477.0C815.7,477.0 820.2,475.9 824.8,475.6C829.3,475.3 833.9,475.2 838.5,475.2C843.0,475.2 847.6,475.2 852.1,475.3C856.7,475.5 861.2,476.3 865.8,476.3C870.3,476.3 874.9,475.2 879.4,475.2C884.0,475.2 888.5,475.2 893.1,475.3C897.6,475.5 902.2,475.9 906.7,476.2C911.3,476.5 915.8,477.1 920.4,477.1C924.9,477.1 929.5,476.1 934.0,476.0C938.6,476.0 943.1,476.0 947.7,476.0C952.2,476.0 956.8,476.5 961.3,476.5C965.9,476.5 970.4,475.7 975.0,475.4" fill="none" stroke="#f08c1c" stroke-width="1.008" stroke-opacity="0.9" stroke-linejoin="round"/><path d="M155.8,488.0C160.3,485.5 164.9,482.3 169.4,480.5C174.0,478.7 178.5,477.3 183.1,477.3C187.6,477.3 192.2,477.6 196.7,477.6C201.3,477.6 205.8,476.8 210.4,476.8C214.9,476.8 219.5,478.0 224.0,478.1C228.6,478.1 233.1,478.1 237.7,478.1C242.2,478.1 246.8,477.9 251.3,477.7C255.9,477.5 260.4,476.7 265.0,476.7C269.5,476.7 274.1,477.4 278.6,477.4C283.2,477.4 287.7,477.1 292.3,477.0C296.8,476.9 301.4,476.9 305.9,476.9C310.5,476.9 315.0,478.3 319.6,478.3C324.1,478.4 328.7,478.4 333.3,478.4C337.8,478.4 342.4,476.5 346.9,476.5C351.5,476.5 356.0,478.1 360.6,478.1C365.1,478.1 369.7,477.8 374.2,477.6C378.8,477.4 383.3,477.3 387.9,477.2C392.4,477.0 397.0,476.9 401.5,476.9C406.1,476.9 410.6,477.8 415.2,477.8C419.7,477.8 424.3,477.3 428.8,477.3C433.4,477.3 437.9,477.8 442.5,477.8C447.0,477.8 451.6,477.8 456.1,477.7C460.7,477.7 465.2,476.6 469.8,476.6C474.3,476.6 478.9,477.7 483.4,478.0C488.0,478.3 492.5,478.4 497.1,478.4C501.7,478.4 506.2,478.4 510.8,478.4C515.3,478.3 519.9,478.0 524.4,477.6C529.0,477.3 533.5,476.5 538.1,476.5C542.6,476.4 547.2,476.4 551.7,476.4C556.3,476.4 560.8,476.4 565.4,476.6C569.9,476.9 574.5,478.3 579.0,478.3C583.6,478.3 588.1,477.0 592.7,477.0C597.2,477.0 601.8,477.0 606.3,477.1C610.9,477.3 615.4,478.2 620.0,478.2C624.5,478.2 629.1,477.0 633.6,477.0C638.2,477.0 642.7,477.5 647.3,477.5C651.8,477.5 656.4,477.4 660.9,477.3C665.5,477.1 670.1,476.5 674.6,476.5C679.2,476.5 683.7,477.3 688.3,477.6C692.8,477.8 697.4,478.1 701.9,478.1C706.5,478.1 711.0,476.7 715.6,476.7C720.1,476.7 724.7,476.7 729.2,476.8C733.8,476.9 738.3,477.2 742.9,477.2C747.4,477.2 752.0,476.4 756.5,476.4C761.1,476.4 765.6,477.1 770.2,477.4C774.7,477.7 779.3,478.1 783.8,478.1C788.4,478.1 792.9,477.8 797.5,477.7C802.0,477.6 806.6,477.5 811.1,477.5C815.7,477.5 820.2,478.1 824.8,478.1C829.3,478.1 833.9,476.7 838.5,476.7C843.0,476.7 847.6,477.5 852.1,477.5C856.7,477.5 861.2,477.1 865.8,477.1C870.3,477.1 874.9,477.6 879.4,477.6C884.0,477.6 888.5,476.6 893.1,476.6C897.6,476.6 902.2,478.0 906.7,478.0C911.3,478.0 915.8,476.6 920.4,476.6C924.9,476.6 929.5,476.6 934.0,476.7C938.6,476.9 943.1,477.8 947.7,478.0C952.2,478.3 956.8,478.3 961.3,478.3C965.9,478.3 970.4,477.6 975.0,477.3" fill="none" stroke="#23b5a0" stroke-width="1.152" stroke-opacity="0.9" stroke-linejoin="round"/><path d="M155.8,488.0C160.3,485.7 164.9,482.6 169.4,481.2C174.0,479.7 178.5,479.4 183.1,479.4C187.6,479.4 192.2,479.4 196.7,479.4C201.3,479.4 205.8,478.5 210.4,478.5C214.9,478.5 219.5,478.6 224.0,478.6C228.6,478.7 233.1,478.8 237.7,478.8C242.2,478.8 246.8,478.0 251.3,478.0C255.9,478.0 260.4,478.5 265.0,478.6C269.5,478.8 274.1,478.8 278.6,478.8C283.2,478.9 287.7,479.1 292.3,479.1C296.8,479.1 301.4,477.9 305.9,477.9C310.5,477.9 315.0,478.2 319.6,478.2C324.1,478.2 328.7,477.9 333.3,477.9C337.8,477.9 342.4,479.2 346.9,479.2C351.5,479.2 356.0,479.2 360.6,479.0C365.1,478.7 369.7,477.8 374.2,477.8C378.8,477.8 383.3,479.5 387.9,479.5C392.4,479.5 397.0,479.5 401.5,479.4C406.1,479.4 410.6,478.9 415.2,478.9C419.7,478.8 424.3,478.9 428.8,478.8C433.4,478.7 437.9,478.2 442.5,478.0C447.0,477.8 451.6,477.7 456.1,477.7C460.7,477.7 465.2,478.7 469.8,478.7C474.3,478.7 478.9,477.8 483.4,477.8C488.0,477.8 492.5,478.0 497.1,478.0C501.7,478.1 506.2,478.1 510.8,478.1C515.3,478.1 519.9,477.7 524.4,477.7C529.0,477.7 533.5,478.5 538.1,478.5C542.6,478.5 547.2,478.5 551.7,478.5C556.3,478.5 560.8,479.2 565.4,479.2C569.9,479.2 574.5,478.6 579.0,478.6C583.6,478.6 588.1,478.9 592.7,478.9C597.2,478.9 601.8,478.6 606.3,478.6C610.9,478.6 615.4,478.9 620.0,478.9C624.5,478.9 629.1,478.6 633.6,478.5C638.2,478.4 642.7,478.2 647.3,478.2C651.8,478.2 656.4,479.5 660.9,479.5C665.5,479.5 670.1,479.5 674.6,479.5C679.2,479.5 683.7,479.3 688.3,479.2C692.8,479.1 697.4,479.1 701.9,479.0C706.5,478.8 711.0,478.4 715.6,478.3C720.1,478.1 724.7,478.1 729.2,478.1C733.8,478.1 738.3,478.2 742.9,478.2C747.4,478.2 752.0,477.8 756.5,477.8C761.1,477.8 765.6,479.1 770.2,479.1C774.7,479.1 779.3,478.4 783.8,478.4C788.4,478.4 792.9,479.2 797.5,479.2C802.0,479.2 806.6,478.4 811.1,478.4C815.7,478.4 820.2,479.4 824.8,479.4C829.3,479.4 833.9,479.4 838.5,479.2C843.0,479.0 847.6,477.7 852.1,477.7C856.7,477.7 861.2,477.8 865.8,478.1C870.3,478.3 874.9,479.3 879.4,479.3C884.0,479.3 888.5,478.5 893.1,478.5C897.6,478.5 902.2,479.5 906.7,479.5C911.3,479.5 915.8,478.7 920.4,478.4C924.9,478.1 929.5,477.8 934.0,477.8C938.6,477.8 943.1,478.6 947.7,478.8C952.2,479.0 956.8,479.1 961.3,479.1C965.9,479.1 970.4,478.5 975.0,478.2" fill="none" stroke="#2ec4a6" stroke-width="1.08" stroke-opacity="0.9" stroke-linejoin="round"/><path d="M155.8,488.0C160.3,486.0 164.9,483.4 169.4,482.1C174.0,480.7 178.5,480.2 183.1,480.2C187.6,480.2 192.2,480.2 196.7,480.2C201.3,480.2 205.8,479.2 210.4,479.0C214.9,478.7 219.5,478.7 224.0,478.7C228.6,478.7 233.1,479.5 237.7,479.5C242.2,479.5 246.8,479.3 251.3,479.3C255.9,479.3 260.4,480.5 265.0,480.5C269.5,480.5 274.1,480.3 278.6,480.2C283.2,480.2 287.7,480.1 292.3,480.0C296.8,480.0 301.4,479.9 305.9,479.9C310.5,479.9 315.0,480.2 319.6,480.2C324.1,480.2 328.7,479.0 333.3,479.0C337.8,479.0 342.4,479.7 346.9,479.7C351.5,479.7 356.0,479.0 360.6,479.0C365.1,479.0 369.7,480.7 374.2,480.7C378.8,480.7 383.3,478.8 387.9,478.8C392.4,478.8 397.0,480.5 401.5,480.5C406.1,480.5 410.6,478.8 415.2,478.8C419.7,478.8 424.3,480.2 428.8,480.2C433.4,480.2 437.9,479.4 442.5,479.4C447.0,479.4 451.6,479.4 456.1,479.6C460.7,479.7 465.2,480.6 469.8,480.6C474.3,480.6 478.9,478.7 483.4,478.7C488.0,478.7 492.5,478.7 497.1,478.8C501.7,478.9 506.2,480.8 510.8,480.8C515.3,480.8 519.9,480.1 524.4,479.8C529.0,479.5 533.5,478.8 538.1,478.8C542.6,478.8 547.2,480.9 551.7,480.9C556.3,480.9 560.8,480.9 565.4,480.8C569.9,480.8 574.5,478.9 579.0,478.9C583.6,478.9 588.1,479.6 592.7,479.6C597.2,479.6 601.8,478.9 606.3,478.9C610.9,478.9 615.4,479.2 620.0,479.4C624.5,479.6 629.1,480.1 633.6,480.1C638.2,480.1 642.7,479.0 647.3,479.0C651.8,479.0 656.4,480.3 660.9,480.3C665.5,480.3 670.1,478.8 674.6,478.8C679.2,478.8 683.7,478.8 688.3,479.0C692.8,479.3 697.4,480.5 701.9,480.5C706.5,480.5 711.0,479.6 715.6,479.6C720.1,479.6 724.7,479.6 729.2,479.6C733.8,479.7 738.3,480.0 742.9,480.0C747.4,480.0 752.0,479.8 756.5,479.7C761.1,479.7 765.6,479.7 770.2,479.5C774.7,479.4 779.3,478.7 783.8,478.7C788.4,478.7 792.9,480.0 797.5,480.3C802.0,480.7 806.6,480.9 811.1,480.9C815.7,480.9 820.2,480.9 824.8,480.9C829.3,480.9 833.9,480.4 838.5,480.2C843.0,479.9 847.6,479.5 852.1,479.5C856.7,479.5 861.2,479.5 865.8,479.5C870.3,479.5 874.9,480.2 879.4,480.2C884.0,480.2 888.5,480.2 893.1,480.2C897.6,480.2 902.2,478.9 906.7,478.9C911.3,478.9 915.8,479.1 920.4,479.2C924.9,479.3 929.5,479.4 934.0,479.5C938.6,479.6 943.1,479.7 947.7,479.8C952.2,480.0 956.8,480.5 961.3,480.5C965.9,480.5 970.4,480.0 975.0,479.8" fill="none" stroke="#e8901c" stroke-width="0.9359999999999999" stroke-opacity="0.9" stroke-linejoin="round"/><path d="M155.8,488.0C160.3,486.2 164.9,483.6 169.4,482.6C174.0,481.7 178.5,481.9 183.1,481.7C187.6,481.4 192.2,481.2 196.7,481.2C201.3,481.2 205.8,481.4 210.4,481.4C214.9,481.4 219.5,480.4 224.0,480.4C228.6,480.4 233.1,480.5 237.7,480.5C242.2,480.5 246.8,480.3 251.3,480.3C255.9,480.3 260.4,480.3 265.0,480.5C269.5,480.6 274.1,481.3 278.6,481.3C283.2,481.3 287.7,480.3 292.3,480.3C296.8,480.3 301.4,480.9 305.9,480.9C310.5,480.9 315.0,480.5 319.6,480.5C324.1,480.5 328.7,480.5 333.3,480.6C337.8,480.6 342.4,480.7 346.9,480.8C351.5,480.9 356.0,481.4 360.6,481.4C365.1,481.4 369.7,481.3 374.2,481.1C378.8,480.9 383.3,480.1 387.9,480.1C392.4,480.1 397.0,480.6 401.5,480.6C406.1,480.6 410.6,480.3 415.2,480.3C419.7,480.3 424.3,481.5 428.8,481.5C433.4,481.5 437.9,481.4 442.5,481.4C447.0,481.4 451.6,481.4 456.1,481.4C460.7,481.4 465.2,481.4 469.8,481.4C474.3,481.4 478.9,481.3 483.4,481.3C488.0,481.3 492.5,481.6 497.1,481.6C501.7,481.6 506.2,481.5 510.8,481.4C515.3,481.2 519.9,480.5 524.4,480.5C529.0,480.5 533.5,481.4 538.1,481.4C542.6,481.4 547.2,480.9 551.7,480.9C556.3,480.9 560.8,481.3 565.4,481.3C569.9,481.3 574.5,481.1 579.0,481.0C583.6,480.9 588.1,480.8 592.7,480.8C597.2,480.7 601.8,480.7 606.3,480.7C610.9,480.7 615.4,480.8 620.0,480.8C624.5,480.8 629.1,480.7 633.6,480.6C638.2,480.5 642.7,480.3 647.3,480.3C651.8,480.3 656.4,481.4 660.9,481.4C665.5,481.4 670.1,481.4 674.6,481.4C679.2,481.4 683.7,481.7 688.3,481.7C692.8,481.7 697.4,481.3 701.9,481.2C706.5,481.1 711.0,481.0 715.6,481.0C720.1,481.0 724.7,481.3 729.2,481.3C733.8,481.3 738.3,480.3 742.9,480.3C747.4,480.3 752.0,481.2 756.5,481.2C761.1,481.2 765.6,480.9 770.2,480.8C774.7,480.7 779.3,480.4 783.8,480.4C788.4,480.4 792.9,480.4 797.5,480.4C802.0,480.5 806.6,480.9 811.1,480.9C815.7,480.9 820.2,480.5 824.8,480.5C829.3,480.5 833.9,480.7 838.5,480.8C843.0,480.9 847.6,481.1 852.1,481.1C856.7,481.1 861.2,480.9 865.8,480.7C870.3,480.6 874.9,480.3 879.4,480.3C884.0,480.3 888.5,480.9 893.1,480.9C897.6,480.9 902.2,480.5 906.7,480.5C911.3,480.5 915.8,480.5 920.4,480.5C924.9,480.5 929.5,480.4 934.0,480.4C938.6,480.4 943.1,480.7 947.7,480.7C952.2,480.7 956.8,480.2 961.3,480.2C965.9,480.2 970.4,480.8 975.0,481.1" fill="none" stroke="#25a898" stroke-width="1.08" stroke-opacity="0.9" stroke-linejoin="round"/><path d="M155.8,488.0C160.3,486.3 164.9,483.6 169.4,483.0C174.0,482.5 178.5,482.6 183.1,482.5C187.6,482.4 192.2,482.4 196.7,482.4C201.3,482.4 205.8,483.0 210.4,483.0C214.9,483.0 219.5,481.5 224.0,481.5C228.6,481.4 233.1,481.4 237.7,481.4C242.2,481.4 246.8,482.5 251.3,482.5C255.9,482.5 260.4,482.5 265.0,482.4C269.5,482.2 274.1,481.5 278.6,481.5C283.2,481.5 287.7,482.4 292.3,482.4C296.8,482.4 301.4,481.8 305.9,481.8C310.5,481.8 315.0,482.6 319.6,482.6C324.1,482.6 328.7,481.1 333.3,481.1C337.8,481.1 342.4,481.1 346.9,481.4C351.5,481.6 356.0,482.9 360.6,482.9C365.1,482.9 369.7,481.9 374.2,481.7C378.8,481.4 383.3,481.4 387.9,481.4C392.4,481.4 397.0,482.7 401.5,482.7C406.1,482.7 410.6,482.6 415.2,482.3C419.7,482.1 424.3,481.2 428.8,481.2C433.4,481.2 437.9,481.9 442.5,482.1C447.0,482.3 451.6,482.4 456.1,482.4C460.7,482.4 465.2,481.2 469.8,481.2C474.3,481.2 478.9,482.4 483.4,482.4C488.0,482.4 492.5,481.1 497.1,481.1C501.7,481.1 506.2,481.6 510.8,481.6C515.3,481.6 519.9,481.0 524.4,481.0C529.0,481.0 533.5,481.0 538.1,481.3C542.6,481.6 547.2,483.1 551.7,483.1C556.3,483.1 560.8,481.8 565.4,481.8C569.9,481.8 574.5,483.1 579.0,483.1C583.6,483.1 588.1,481.9 592.7,481.9C597.2,481.9 601.8,482.1 606.3,482.3C610.9,482.4 615.4,482.9 620.0,482.9C624.5,482.9 629.1,482.7 633.6,482.4C638.2,482.1 642.7,481.1 647.3,481.1C651.8,481.1 656.4,482.1 660.9,482.2C665.5,482.3 670.1,482.3 674.6,482.3C679.2,482.3 683.7,481.5 688.3,481.3C692.8,481.1 697.4,481.1 701.9,481.1C706.5,481.1 711.0,482.9 715.6,482.9C720.1,482.9 724.7,482.3 729.2,482.0C733.8,481.8 738.3,481.3 742.9,481.3C747.4,481.3 752.0,481.9 756.5,481.9C761.1,481.9 765.6,481.3 770.2,481.3C774.7,481.3 779.3,482.7 783.8,482.7C788.4,482.7 792.9,482.3 797.5,482.0C802.0,481.7 806.6,481.1 811.1,481.1C815.7,481.1 820.2,482.7 824.8,482.7C829.3,482.7 833.9,481.0 838.5,481.0C843.0,481.0 847.6,481.5 852.1,481.5C856.7,481.5 861.2,480.9 865.8,480.9C870.3,480.9 874.9,482.6 879.4,482.6C884.0,482.6 888.5,481.1 893.1,481.1C897.6,481.1 902.2,482.1 906.7,482.1C911.3,482.1 915.8,481.0 920.4,481.0C924.9,481.0 929.5,481.7 934.0,482.0C938.6,482.2 943.1,482.4 947.7,482.4C952.2,482.4 956.8,482.2 961.3,482.1C965.9,482.0 970.4,482.0 975.0,481.9" fill="none" stroke="#7a4fe8" stroke-width="1.152" stroke-opacity="0.9" stroke-linejoin="round"/><path d="M155.8,488.0C160.3,487.0 164.9,485.8 169.4,485.0C174.0,484.1 178.5,482.9 183.1,482.9C187.6,482.9 192.2,483.5 196.7,483.5C201.3,483.5 205.8,482.8 210.4,482.8C214.9,482.8 219.5,483.8 224.0,483.8C228.6,483.8 233.1,482.6 237.7,482.6C242.2,482.6 246.8,483.7 251.3,483.7C255.9,483.7 260.4,483.4 265.0,483.4C269.5,483.4 274.1,483.6 278.6,483.7C283.2,483.7 287.7,483.8 292.3,483.8C296.8,483.8 301.4,482.9 305.9,482.9C310.5,482.9 315.0,482.9 319.6,483.0C324.1,483.1 328.7,483.5 333.3,483.5C337.8,483.5 342.4,482.9 346.9,482.9C351.5,482.9 356.0,482.9 360.6,482.9C365.1,482.9 369.7,482.8 374.2,482.8C378.8,482.8 383.3,483.6 387.9,483.7C392.4,483.7 397.0,483.7 401.5,483.7C406.1,483.7 410.6,483.7 415.2,483.6C419.7,483.5 424.3,482.8 428.8,482.8C433.4,482.8 437.9,483.8 442.5,483.8C447.0,483.8 451.6,483.4 456.1,483.2C460.7,483.1 465.2,482.9 469.8,482.9C474.3,482.9 478.9,483.1 483.4,483.1C488.0,483.1 492.5,483.1 497.1,483.1C501.7,483.0 506.2,482.7 510.8,482.7C515.3,482.7 519.9,483.3 524.4,483.3C529.0,483.3 533.5,483.0 538.1,483.0C542.6,483.0 547.2,483.2 551.7,483.3C556.3,483.4 560.8,483.8 565.4,483.8C569.9,483.8 574.5,483.5 579.0,483.4C583.6,483.3 588.1,483.1 592.7,483.1C597.2,483.1 601.8,483.5 606.3,483.7C610.9,483.8 615.4,483.8 620.0,483.8C624.5,483.8 629.1,483.2 633.6,483.2C638.2,483.2 642.7,483.8 647.3,483.8C651.8,483.8 656.4,482.6 660.9,482.6C665.5,482.6 670.1,482.7 674.6,482.7C679.2,482.8 683.7,482.7 688.3,482.8C692.8,482.8 697.4,483.8 701.9,483.8C706.5,483.8 711.0,483.4 715.6,483.4C720.1,483.4 724.7,483.5 729.2,483.5C733.8,483.5 738.3,482.9 742.9,482.9C747.4,482.9 752.0,483.1 756.5,483.2C761.1,483.3 765.6,483.7 770.2,483.7C774.7,483.7 779.3,482.7 783.8,482.7C788.4,482.7 792.9,482.7 797.5,482.7C802.0,482.7 806.6,482.6 811.1,482.6C815.7,482.6 820.2,483.0 824.8,483.2C829.3,483.3 833.9,483.6 838.5,483.6C843.0,483.6 847.6,483.4 852.1,483.3C856.7,483.2 861.2,483.1 865.8,483.1C870.3,483.1 874.9,483.2 879.4,483.2C884.0,483.2 888.5,482.8 893.1,482.8C897.6,482.8 902.2,483.8 906.7,483.8C911.3,483.8 915.8,483.2 920.4,483.0C924.9,482.9 929.5,482.9 934.0,482.9C938.6,482.9 943.1,482.9 947.7,483.0C952.2,483.1 956.8,483.6 961.3,483.6C965.9,483.6 970.4,483.2 975.0,483.0" fill="none" stroke="#3fb8a8" stroke-width="1.008" stroke-opacity="0.9" stroke-linejoin="round"/><path d="M155.8,488.0C160.3,487.1 164.9,485.8 169.4,485.2C174.0,484.6 178.5,484.4 183.1,484.3C187.6,484.2 192.2,484.2 196.7,484.2C201.3,484.2 205.8,484.2 210.4,484.2C214.9,484.2 219.5,484.2 224.0,484.2C228.6,484.2 233.1,484.5 237.7,484.5C242.2,484.5 246.8,484.0 251.3,484.0C255.9,484.0 260.4,484.5 265.0,484.5C269.5,484.5 274.1,483.7 278.6,483.7C283.2,483.7 287.7,484.0 292.3,484.0C296.8,484.1 301.4,484.1 305.9,484.1C310.5,484.1 315.0,483.8 319.6,483.8C324.1,483.8 328.7,484.6 333.3,484.6C337.8,484.6 342.4,484.1 346.9,484.1C351.5,484.1 356.0,484.5 360.6,484.7C365.1,484.8 369.7,484.9 374.2,484.9C378.8,484.9 383.3,484.0 387.9,484.0C392.4,484.0 397.0,484.8 401.5,484.8C406.1,484.8 410.6,484.7 415.2,484.7C419.7,484.7 424.3,484.7 428.8,484.5C433.4,484.3 437.9,483.7 442.5,483.7C447.0,483.7 451.6,484.1 456.1,484.2C460.7,484.4 465.2,484.5 469.8,484.5C474.3,484.5 478.9,484.1 483.4,484.0C488.0,483.9 492.5,483.9 497.1,483.9C501.7,483.9 506.2,484.1 510.8,484.1C515.3,484.1 519.9,484.0 524.4,484.0C529.0,484.0 533.5,484.7 538.1,484.7C542.6,484.7 547.2,484.1 551.7,484.1C556.3,484.1 560.8,484.1 565.4,484.2C569.9,484.3 574.5,484.4 579.0,484.5C583.6,484.6 588.1,484.9 592.7,484.9C597.2,484.9 601.8,484.2 606.3,484.0C610.9,483.8 615.4,483.7 620.0,483.7C624.5,483.7 629.1,484.9 633.6,484.9C638.2,484.9 642.7,484.8 647.3,484.7C651.8,484.7 656.4,484.7 660.9,484.7C665.5,484.6 670.1,484.5 674.6,484.3C679.2,484.2 683.7,484.0 688.3,484.0C692.8,483.9 697.4,483.9 701.9,483.9C706.5,483.9 711.0,484.0 715.6,484.0C720.1,484.1 724.7,484.2 729.2,484.2C733.8,484.2 738.3,483.7 742.9,483.7C747.4,483.7 752.0,484.5 756.5,484.6C761.1,484.6 765.6,484.6 770.2,484.6C774.7,484.6 779.3,483.7 783.8,483.7C788.4,483.7 792.9,484.7 797.5,484.7C802.0,484.7 806.6,484.3 811.1,484.3C815.7,484.3 820.2,484.8 824.8,484.8C829.3,484.8 833.9,484.3 838.5,484.3C843.0,484.3 847.6,484.7 852.1,484.7C856.7,484.7 861.2,484.2 865.8,484.2C870.3,484.2 874.9,484.4 879.4,484.4C884.0,484.4 888.5,484.4 893.1,484.3C897.6,484.2 902.2,483.7 906.7,483.7C911.3,483.7 915.8,483.8 920.4,483.8C924.9,483.9 929.5,483.9 934.0,484.0C938.6,484.0 943.1,484.2 947.7,484.2C952.2,484.2 956.8,484.1 961.3,484.1C965.9,484.1 970.4,484.3 975.0,484.4" fill="none" stroke="#f0a585" stroke-width="1.224" stroke-opacity="0.9" stroke-linejoin="round"/><path d="M155.8,488.0C160.3,487.4 164.9,486.4 169.4,486.1C174.0,485.9 178.5,485.9 183.1,485.9C187.6,485.9 192.2,485.9 196.7,485.9C201.3,485.9 205.8,485.2 210.4,485.2C214.9,485.2 219.5,485.7 224.0,485.7C228.6,485.7 233.1,485.6 237.7,485.6C242.2,485.6 246.8,485.6 251.3,485.6C255.9,485.5 260.4,485.1 265.0,485.0C269.5,484.9 274.1,484.9 278.6,484.9C283.2,484.9 287.7,485.2 292.3,485.3C296.8,485.4 301.4,485.7 305.9,485.7C310.5,485.7 315.0,485.1 319.6,485.1C324.1,485.1 328.7,485.4 333.3,485.4C337.8,485.4 342.4,485.2 346.9,485.2C351.5,485.2 356.0,485.7 360.6,485.8C365.1,485.9 369.7,485.9 374.2,485.9C378.8,485.9 383.3,485.3 387.9,485.3C392.4,485.3 397.0,485.9 401.5,485.9C406.1,485.9 410.6,484.9 415.2,484.9C419.7,484.9 424.3,485.7 428.8,485.7C433.4,485.8 437.9,485.8 442.5,485.8C447.0,485.8 451.6,485.0 456.1,485.0C460.7,485.0 465.2,485.6 469.8,485.6C474.3,485.6 478.9,485.5 483.4,485.5C488.0,485.5 492.5,485.9 497.1,485.9C501.7,485.9 506.2,485.1 510.8,485.1C515.3,485.1 519.9,485.3 524.4,485.4C529.0,485.6 533.5,485.8 538.1,485.8C542.6,485.8 547.2,485.6 551.7,485.5C556.3,485.4 560.8,485.3 565.4,485.2C569.9,485.1 574.5,485.0 579.0,485.0C583.6,485.0 588.1,485.9 592.7,485.9C597.2,485.9 601.8,485.4 606.3,485.4C610.9,485.4 615.4,485.9 620.0,485.9C624.5,485.9 629.1,485.0 633.6,485.0C638.2,485.0 642.7,485.7 647.3,485.7C651.8,485.7 656.4,485.7 660.9,485.7C665.5,485.7 670.1,485.8 674.6,485.8C679.2,485.8 683.7,484.9 688.3,484.9C692.8,484.9 697.4,485.3 701.9,485.3C706.5,485.3 711.0,484.9 715.6,484.9C720.1,484.9 724.7,485.7 729.2,485.7C733.8,485.7 738.3,485.2 742.9,485.2C747.4,485.2 752.0,485.9 756.5,485.9C761.1,485.9 765.6,485.3 770.2,485.3C774.7,485.3 779.3,485.6 783.8,485.7C788.4,485.8 792.9,485.8 797.5,485.8C802.0,485.8 806.6,485.1 811.1,485.1C815.7,485.1 820.2,485.3 824.8,485.5C829.3,485.6 833.9,485.9 838.5,485.9C843.0,485.9 847.6,485.5 852.1,485.4C856.7,485.3 861.2,485.3 865.8,485.3C870.3,485.2 874.9,485.2 879.4,485.2C884.0,485.2 888.5,485.7 893.1,485.7C897.6,485.7 902.2,485.1 906.7,485.1C911.3,485.1 915.8,485.5 920.4,485.5C924.9,485.5 929.5,485.5 934.0,485.5C938.6,485.5 943.1,485.5 947.7,485.5C952.2,485.5 956.8,485.0 961.3,485.0C965.9,485.0 970.4,485.4 975.0,485.6" fill="none" stroke="#e59a80" stroke-width="1.08" stroke-opacity="0.9" stroke-linejoin="round"/><path d="M155.8,488.0C160.3,487.5 164.9,486.7 169.4,486.6C174.0,486.6 178.5,486.6 183.1,486.6C187.6,486.5 192.2,486.3 196.7,486.2C201.3,486.1 205.8,486.1 210.4,486.1C214.9,486.1 219.5,486.4 224.0,486.4C228.6,486.4 233.1,486.4 237.7,486.4C242.2,486.4 246.8,486.4 251.3,486.4C255.9,486.4 260.4,486.4 265.0,486.4C269.5,486.3 274.1,486.2 278.6,486.2C283.2,486.1 287.7,486.1 292.3,486.1C296.8,486.1 301.4,486.6 305.9,486.6C310.5,486.6 315.0,486.2 319.6,486.2C324.1,486.2 328.7,486.5 333.3,486.6C337.8,486.7 342.4,486.7 346.9,486.7C351.5,486.7 356.0,486.8 360.6,486.8C365.1,486.8 369.7,486.9 374.2,486.9C378.8,486.9 383.3,486.1 387.9,486.1C392.4,486.1 397.0,486.1 401.5,486.1C406.1,486.1 410.6,486.6 415.2,486.6C419.7,486.6 424.3,486.6 428.8,486.5C433.4,486.4 437.9,486.1 442.5,486.1C447.0,486.1 451.6,486.5 456.1,486.6C460.7,486.7 465.2,486.8 469.8,486.8C474.3,486.8 478.9,486.8 483.4,486.7C488.0,486.7 492.5,486.1 497.1,486.1C501.7,486.1 506.2,486.2 510.8,486.2C515.3,486.2 519.9,485.9 524.4,485.9C529.0,485.9 533.5,486.9 538.1,486.9C542.6,486.9 547.2,486.1 551.7,486.1C556.3,486.1 560.8,486.6 565.4,486.6C569.9,486.6 574.5,486.4 579.0,486.4C583.6,486.4 588.1,486.5 592.7,486.5C597.2,486.5 601.8,486.4 606.3,486.4C610.9,486.4 615.4,486.7 620.0,486.7C624.5,486.7 629.1,486.6 633.6,486.5C638.2,486.4 642.7,486.3 647.3,486.2C651.8,486.1 656.4,486.0 660.9,486.0C665.5,486.0 670.1,486.2 674.6,486.4C679.2,486.5 683.7,486.8 688.3,486.8C692.8,486.8 697.4,486.0 701.9,486.0C706.5,486.0 711.0,486.6 715.6,486.6C720.1,486.6 724.7,486.6 729.2,486.5C733.8,486.5 738.3,486.0 742.9,486.0C747.4,486.0 752.0,486.0 756.5,486.1C761.1,486.1 765.6,486.6 770.2,486.6C774.7,486.6 779.3,486.4 783.8,486.3C788.4,486.3 792.9,486.3 797.5,486.3C802.0,486.3 806.6,486.4 811.1,486.4C815.7,486.4 820.2,486.0 824.8,486.0C829.3,486.0 833.9,486.6 838.5,486.6C843.0,486.6 847.6,486.5 852.1,486.5C856.7,486.5 861.2,486.5 865.8,486.4C870.3,486.4 874.9,486.2 879.4,486.2C884.0,486.2 888.5,486.7 893.1,486.7C897.6,486.7 902.2,486.7 906.7,486.7C911.3,486.7 915.8,486.6 920.4,486.4C924.9,486.3 929.5,486.0 934.0,486.0C938.6,486.0 943.1,486.0 947.7,486.0C952.2,486.0 956.8,486.0 961.3,486.0C965.9,486.0 970.4,486.0 975.0,486.0" fill="none" stroke="#48c0b0" stroke-width="0.864" stroke-opacity="0.9" stroke-linejoin="round"/><path d="M155.8,488.0C160.3,485.3 164.9,482.1 169.4,480.0C174.0,478.0 178.5,475.8 183.1,475.7C187.6,475.6 192.2,475.6 196.7,475.6C201.3,475.6 205.8,475.6 210.4,476.0C214.9,476.4 219.5,479.1 224.0,479.1C228.6,479.1 233.1,476.0 237.7,476.0C242.2,476.0 246.8,476.4 251.3,476.8C255.9,477.2 260.4,478.6 265.0,478.6C269.5,478.6 274.1,477.7 278.6,477.7C283.2,477.7 287.7,480.1 292.3,480.1C296.8,480.1 301.4,477.8 305.9,477.4C310.5,477.0 315.0,477.0 319.6,477.0C324.1,477.0 328.7,478.2 333.3,478.2C337.8,478.2 342.4,475.8 346.9,475.8C351.5,475.8 356.0,479.9 360.6,479.9C365.1,479.9 369.7,476.7 374.2,476.7C378.8,476.7 383.3,476.7 387.9,476.8C392.4,476.9 397.0,478.6 401.5,478.6C406.1,478.6 410.6,475.4 415.2,475.4C419.7,475.4 424.3,477.8 428.8,478.5C433.4,479.2 437.9,479.6 442.5,479.6C447.0,479.6 451.6,476.5 456.1,476.5C460.7,476.5 465.2,480.2 469.8,480.2C474.3,480.2 478.9,477.7 483.4,477.7C488.0,477.7 492.5,479.1 497.1,479.1C501.7,479.1 506.2,477.7 510.8,477.3C515.3,476.9 519.9,477.1 524.4,476.9C529.0,476.7 533.5,476.5 538.1,476.1C542.6,475.7 547.2,474.5 551.7,474.5C556.3,474.5 560.8,474.7 565.4,475.7C569.9,476.7 574.5,480.4 579.0,480.4C583.6,480.4 588.1,478.1 592.7,477.7C597.2,477.3 601.8,477.3 606.3,477.3C610.9,477.3 615.4,479.9 620.0,479.9C624.5,479.9 629.1,478.1 633.6,478.1C638.2,478.1 642.7,480.4 647.3,480.4C651.8,480.4 656.4,477.4 660.9,476.6C665.5,475.9 670.1,475.8 674.6,475.8C679.2,475.8 683.7,480.0 688.3,480.0C692.8,480.0 697.4,475.5 701.9,475.5C706.5,475.5 711.0,479.3 715.6,479.3C720.1,479.3 724.7,478.1 729.2,478.1C733.8,478.1 738.3,480.4 742.9,480.4C747.4,480.4 752.0,480.4 756.5,480.2C761.1,479.9 765.6,479.4 770.2,478.5C774.7,477.6 779.3,474.8 783.8,474.7C788.4,474.6 792.9,474.6 797.5,474.6C802.0,474.6 806.6,476.5 811.1,477.3C815.7,478.1 820.2,479.4 824.8,479.4C829.3,479.4 833.9,475.0 838.5,475.0C843.0,475.0 847.6,477.1 852.1,477.1C856.7,477.1 861.2,475.0 865.8,475.0C870.3,475.0 874.9,476.4 879.4,476.4C884.0,476.4 888.5,474.5 893.1,474.5C897.6,474.5 902.2,476.0 906.7,476.5C911.3,477.0 915.8,477.6 920.4,477.6C924.9,477.6 929.5,475.7 934.0,475.7C938.6,475.7 943.1,479.2 947.7,479.2C952.2,479.2 956.8,474.8 961.3,474.8C965.9,474.8 970.4,475.5 975.0,475.8" fill="none" stroke="#f0a010" stroke-width="1.2" stroke-opacity="1" stroke-linejoin="round"/><path d="M155.8,488.0C160.3,482.9 164.9,475.7 169.4,472.7C174.0,469.6 178.5,470.4 183.1,469.4C187.6,468.5 192.2,466.9 196.7,466.9C201.3,466.9 205.8,468.4 210.4,468.8C214.9,469.1 219.5,469.1 224.0,469.1C228.6,469.1 233.1,469.1 237.7,468.8C242.2,468.5 246.8,467.4 251.3,467.4C255.9,467.4 260.4,467.4 265.0,467.5C269.5,467.7 274.1,468.4 278.6,468.7C283.2,469.0 287.7,469.5 292.3,469.5C296.8,469.5 301.4,468.7 305.9,468.5C310.5,468.3 315.0,468.3 319.6,468.1C324.1,468.0 328.7,467.6 333.3,467.6C337.8,467.6 342.4,467.6 346.9,467.7C351.5,467.8 356.0,468.7 360.6,468.7C365.1,468.7 369.7,467.8 374.2,467.8C378.8,467.8 383.3,468.0 387.9,468.1C392.4,468.2 397.0,468.4 401.5,468.4C406.1,468.4 410.6,468.4 415.2,468.4C419.7,468.4 424.3,466.5 428.8,466.5C433.4,466.5 437.9,466.8 442.5,467.1C447.0,467.5 451.6,468.7 456.1,468.7C460.7,468.7 465.2,468.2 469.8,468.2C474.3,468.2 478.9,469.1 483.4,469.1C488.0,469.1 492.5,466.6 497.1,466.6C501.7,466.6 506.2,466.9 510.8,467.1C515.3,467.4 519.9,467.7 524.4,468.0C529.0,468.3 533.5,468.8 538.1,468.8C542.6,468.8 547.2,467.0 551.7,467.0C556.3,467.0 560.8,468.8 565.4,468.8C569.9,468.8 574.5,468.0 579.0,467.7C583.6,467.5 588.1,467.4 592.7,467.4C597.2,467.4 601.8,469.1 606.3,469.1C610.9,469.1 615.4,466.7 620.0,466.7C624.5,466.7 629.1,469.4 633.6,469.4C638.2,469.4 642.7,467.4 647.3,467.4C651.8,467.4 656.4,467.6 660.9,467.6C665.5,467.6 670.1,467.0 674.6,467.0C679.2,467.0 683.7,467.6 688.3,467.9C692.8,468.2 697.4,469.1 701.9,469.1C706.5,469.1 711.0,467.1 715.6,467.1C720.1,467.1 724.7,468.2 729.2,468.2C733.8,468.2 738.3,467.9 742.9,467.8C747.4,467.7 752.0,467.5 756.5,467.4C761.1,467.2 765.6,466.8 770.2,466.8C774.7,466.8 779.3,468.6 783.8,468.6C788.4,468.6 792.9,467.7 797.5,467.7C802.0,467.7 806.6,467.8 811.1,467.9C815.7,468.0 820.2,468.3 824.8,468.3C829.3,468.3 833.9,466.7 838.5,466.7C843.0,466.7 847.6,468.8 852.1,469.0C856.7,469.3 861.2,469.3 865.8,469.3C870.3,469.3 874.9,467.2 879.4,467.2C884.0,467.2 888.5,469.0 893.1,469.0C897.6,469.0 902.2,468.9 906.7,468.6C911.3,468.4 915.8,467.4 920.4,467.4C924.9,467.3 929.5,467.4 934.0,467.3C938.6,467.2 943.1,466.7 947.7,466.7C952.2,466.7 956.8,467.6 961.3,467.7C965.9,467.8 970.4,467.8 975.0,467.8" fill="none" stroke="#2fa592" stroke-width="1.2" stroke-opacity="0.8" stroke-linejoin="round"/>
<path d="M155.8,488.0C160.3,488.0 164.9,488.0 169.4,488.0C174.0,488.0 178.5,488.0 183.1,488.0C187.6,488.0 192.2,488.0 196.7,488.0C201.3,488.0 205.8,488.0 210.4,488.0C214.9,488.0 219.5,488.0 224.0,488.0C228.6,488.0 233.1,488.0 237.7,488.0C242.2,488.0 246.8,488.0 251.3,488.0C255.9,488.0 260.4,488.0 265.0,488.0C269.5,488.0 274.1,488.0 278.6,488.0C283.2,488.0 287.7,488.0 292.3,488.0C296.8,488.0 301.4,488.0 305.9,488.0C310.5,488.0 315.0,488.0 319.6,488.0C324.1,488.0 328.7,488.0 333.3,488.0C337.8,488.0 342.4,488.0 346.9,488.0C351.5,488.0 356.0,488.0 360.6,488.0C365.1,488.0 369.7,488.0 374.2,488.0C378.8,488.0 383.3,488.0 387.9,488.0C392.4,488.0 397.0,488.0 401.5,488.0C406.1,488.0 410.6,488.0 415.2,488.0C419.7,488.0 424.3,488.0 428.8,488.0C433.4,488.0 437.9,488.0 442.5,488.0C447.0,488.0 451.6,488.0 456.1,488.0C460.7,488.0 465.2,488.0 469.8,488.0C474.3,488.0 478.9,488.0 483.4,488.0C488.0,488.0 492.5,488.0 497.1,488.0C501.7,488.0 506.2,488.0 510.8,488.0C515.3,488.0 519.9,488.0 524.4,488.0C529.0,488.0 533.5,488.0 538.1,488.0C542.6,488.0 547.2,488.0 551.7,488.0C556.3,488.0 560.8,488.0 565.4,488.0C569.9,488.0 574.5,488.0 579.0,488.0C583.6,488.0 588.1,488.0 592.7,488.0C597.2,488.0 601.8,488.0 606.3,488.0C610.9,488.0 615.4,488.0 620.0,488.0C624.5,488.0 629.1,488.0 633.6,488.0C638.2,488.0 642.7,488.0 647.3,488.0C651.8,488.0 656.4,488.0 660.9,488.0C665.5,488.0 670.1,488.0 674.6,488.0C679.2,488.0 683.7,488.0 688.3,488.0C692.8,488.0 697.4,488.0 701.9,488.0C706.5,488.0 711.0,488.0 715.6,488.0C720.1,488.0 724.7,488.0 729.2,488.0C733.8,488.0 738.3,488.0 742.9,488.0C747.4,488.0 752.0,488.0 756.5,488.0C761.1,488.0 765.6,488.0 770.2,488.0C774.7,488.0 779.3,488.0 783.8,488.0C788.4,488.0 792.9,488.0 797.5,488.0C802.0,488.0 806.6,488.0 811.1,488.0C815.7,488.0 820.2,488.0 824.8,488.0C829.3,488.0 833.9,488.0 838.5,488.0C843.0,488.0 847.6,488.0 852.1,488.0C856.7,488.0 861.2,488.0 865.8,488.0C870.3,488.0 874.9,488.0 879.4,488.0C884.0,488.0 888.5,488.0 893.1,488.0C897.6,488.0 902.2,488.0 906.7,488.0C911.3,488.0 915.8,488.0 920.4,488.0C924.9,488.0 929.5,488.0 934.0,488.0C938.6,488.0 943.1,488.0 947.7,488.0C952.2,488.0 956.8,488.0 961.3,488.0C965.9,488.0 970.4,488.0 975.0,488.0" fill="none" stroke="#22c4e4" stroke-width="1.5" stroke-opacity="1" stroke-linejoin="round"/>
<path d="M155.8,488.0C160.3,480.3 164.9,470.2 169.4,465.0C174.0,459.8 178.5,456.8 183.1,456.8C187.6,456.8 192.2,465.0 196.7,465.0C201.3,465.0 205.8,457.0 210.4,457.0C214.9,457.0 219.5,461.2 224.0,461.2C228.6,461.2 233.1,447.5 237.7,447.5C242.2,447.5 246.8,453.0 251.3,453.0C255.9,453.0 260.4,443.2 265.0,443.2C269.5,443.2 274.1,460.0 278.6,460.0C283.2,460.0 287.7,458.5 292.3,457.5C296.8,456.5 301.4,454.0 305.9,454.0C310.5,454.0 315.0,461.0 319.6,462.0C324.1,463.0 328.7,463.0 333.3,463.0C337.8,463.0 342.4,461.5 346.9,461.5C351.5,461.5 356.0,467.5 360.6,467.5C365.1,467.5 369.7,462.5 374.2,460.0C378.8,457.5 383.3,452.5 387.9,452.5C392.4,452.5 397.0,462.0 401.5,462.5C406.1,463.0 410.6,463.0 415.2,463.0C419.7,463.0 424.3,447.5 428.8,447.5C433.4,447.5 437.9,461.8 442.5,461.8C447.0,461.8 451.6,461.8 456.1,461.8C460.7,461.8 465.2,461.8 469.8,461.2C474.3,460.8 478.9,451.2 483.4,451.2C488.0,451.2 492.5,467.5 497.1,467.5C501.7,467.5 506.2,459.2 510.8,459.2C515.3,459.2 519.9,462.8 524.4,463.8C529.0,464.7 533.5,464.6 538.1,465.0C542.6,465.4 547.2,466.2 551.7,466.2C556.3,466.2 560.8,462.1 565.4,458.8C569.9,455.4 574.5,446.2 579.0,446.2C583.6,446.2 588.1,459.5 592.7,462.5C597.2,465.5 601.8,465.5 606.3,465.5C610.9,465.5 615.4,462.5 620.0,460.0C624.5,457.5 629.1,452.0 633.6,450.8C638.2,449.5 642.7,449.5 647.3,449.5C651.8,449.5 656.4,463.0 660.9,463.0C665.5,463.0 670.1,460.1 674.6,458.8C679.2,457.4 683.7,455.0 688.3,455.0C692.8,455.0 697.4,462.0 701.9,462.0C706.5,462.0 711.0,458.5 715.6,457.5C720.1,456.5 724.7,456.2 729.2,456.2C733.8,456.2 738.3,463.8 742.9,465.0C747.4,466.2 752.0,466.2 756.5,466.2C761.1,466.2 765.6,463.0 770.2,463.0C774.7,463.0 779.3,463.0 783.8,463.8C788.4,464.5 792.9,467.5 797.5,467.5C802.0,467.5 806.6,454.2 811.1,454.2C815.7,454.2 820.2,462.5 824.8,462.5C829.3,462.5 833.9,458.0 838.5,458.0C843.0,458.0 847.6,460.3 852.1,461.2C856.7,462.2 861.2,463.8 865.8,463.8C870.3,463.8 874.9,463.8 879.4,463.8C884.0,463.8 888.5,438.2 893.1,438.2C897.6,438.2 902.2,449.5 906.7,452.5C911.3,455.5 915.8,453.8 920.4,456.2C924.9,458.8 929.5,467.5 934.0,467.5C938.6,467.5 943.1,465.3 947.7,463.8C952.2,462.2 956.8,458.0 961.3,458.0C965.9,458.0 970.4,462.7 975.0,465.0" fill="none" stroke="#2a9d8f" stroke-width="1.3" stroke-opacity="1" stroke-linejoin="round"/>
<path d="M155.8,488.0C160.3,471.8 164.9,439.2 169.4,439.2C174.0,439.2 178.5,443.2 183.1,443.2C187.6,443.2 192.2,443.0 196.7,442.5C201.3,442.0 205.8,440.5 210.4,440.5C214.9,440.5 219.5,443.8 224.0,443.8C228.6,443.8 233.1,439.2 237.7,439.2C242.2,439.2 246.8,442.0 251.3,442.0C255.9,442.0 260.4,440.5 265.0,440.5C269.5,440.5 274.1,443.0 278.6,443.0C283.2,443.0 287.7,437.0 292.3,437.0C296.8,437.0 301.4,445.0 305.9,445.0C310.5,445.0 315.0,442.5 319.6,442.5C324.1,442.5 328.7,443.0 333.3,443.0C337.8,443.0 342.4,442.5 346.9,442.5C351.5,442.5 356.0,446.2 360.6,446.2C365.1,446.2 369.7,442.0 374.2,440.0C378.8,438.0 383.3,434.5 387.9,434.5C392.4,434.5 397.0,441.2 401.5,441.2C406.1,441.2 410.6,440.8 415.2,440.8C419.7,440.8 424.3,441.7 428.8,442.0C433.4,442.3 437.9,442.3 442.5,442.5C447.0,442.7 451.6,443.0 456.1,443.0C460.7,443.0 465.2,443.0 469.8,443.0C474.3,443.0 478.9,443.0 483.4,443.0C488.0,443.0 492.5,445.0 497.1,445.0C501.7,445.0 506.2,439.5 510.8,439.5C515.3,439.5 519.9,441.4 524.4,442.0C529.0,442.6 533.5,443.0 538.1,443.0C542.6,443.0 547.2,442.2 551.7,442.2C556.3,442.2 560.8,442.2 565.4,442.5C569.9,442.8 574.5,445.5 579.0,446.0C583.6,446.5 588.1,446.5 592.7,446.5C597.2,446.5 601.8,445.8 606.3,445.5C610.9,445.2 615.4,445.0 620.0,445.0C624.5,445.0 629.1,445.8 633.6,445.8C638.2,445.8 642.7,444.5 647.3,444.5C651.8,444.5 656.4,445.2 660.9,445.5C665.5,445.8 670.1,446.1 674.6,446.5C679.2,446.9 683.7,448.0 688.3,448.0C692.8,448.0 697.4,444.7 701.9,443.8C706.5,442.8 711.0,442.5 715.6,442.5C720.1,442.5 724.7,443.0 729.2,443.2C733.8,443.5 738.3,443.2 742.9,443.8C747.4,444.2 752.0,446.2 756.5,446.2C761.1,446.2 765.6,443.8 770.2,443.8C774.7,443.8 779.3,444.5 783.8,444.5C788.4,444.5 792.9,444.5 797.5,444.5C802.0,444.5 806.6,443.8 811.1,443.8C815.7,443.8 820.2,445.8 824.8,445.8C829.3,445.8 833.9,441.2 838.5,441.2C843.0,441.2 847.6,442.5 852.1,443.0C856.7,443.5 861.2,444.5 865.8,444.5C870.3,444.5 874.9,443.0 879.4,443.0C884.0,443.0 888.5,443.5 893.1,443.8C897.6,444.0 902.2,444.5 906.7,444.5C911.3,444.5 915.8,441.2 920.4,441.2C924.9,441.2 929.5,441.6 934.0,442.0C938.6,442.4 943.1,443.2 947.7,443.8C952.2,444.2 956.8,445.0 961.3,445.0C965.9,445.0 970.4,444.3 975.0,444.0" fill="none" stroke="#f08520" stroke-width="1.3" stroke-opacity="1" stroke-linejoin="round"/>
<path d="M155.8,488.0C160.3,451.8 164.9,379.2 169.4,379.2C174.0,379.2 178.5,379.2 183.1,380.0C187.6,380.8 192.2,384.5 196.7,384.5C201.3,384.5 205.8,367.5 210.4,367.5C214.9,367.5 219.5,375.9 224.0,378.2C228.6,380.6 233.1,381.8 237.7,381.8C242.2,381.8 246.8,381.3 251.3,378.8C255.9,376.2 260.4,366.2 265.0,366.2C269.5,366.2 274.1,377.0 278.6,377.0C283.2,377.0 287.7,370.0 292.3,370.0C296.8,370.0 301.4,384.5 305.9,384.5C310.5,384.5 315.0,374.5 319.6,374.5C324.1,374.5 328.7,379.5 333.3,379.5C337.8,379.5 342.4,375.8 346.9,375.8C351.5,375.8 356.0,384.5 360.6,384.5C365.1,384.5 369.7,374.5 374.2,374.5C378.8,374.5 383.3,377.0 387.9,377.0C392.4,377.0 397.0,377.0 401.5,377.0C406.1,377.0 410.6,372.5 415.2,372.5C419.7,372.5 424.3,378.2 428.8,379.5C433.4,380.8 437.9,380.2 442.5,380.8C447.0,381.3 451.6,383.0 456.1,383.0C460.7,383.0 465.2,379.2 469.8,379.2C474.3,379.2 478.9,380.5 483.4,380.5C488.0,380.5 492.5,374.2 497.1,374.2C501.7,374.2 506.2,384.5 510.8,384.5C515.3,384.5 519.9,378.0 524.4,378.0C529.0,378.0 533.5,380.0 538.1,380.0C542.6,380.0 547.2,379.1 551.7,378.8C556.3,378.4 560.8,378.0 565.4,377.8C569.9,377.5 574.5,377.0 579.0,377.0C583.6,377.0 588.1,379.0 592.7,379.0C597.2,379.0 601.8,378.0 606.3,378.0C610.9,378.0 615.4,380.5 620.0,380.5C624.5,380.5 629.1,376.2 633.6,376.2C638.2,376.2 642.7,385.8 647.3,385.8C651.8,385.8 656.4,378.5 660.9,378.5C665.5,378.5 670.1,384.5 674.6,384.5C679.2,384.5 683.7,381.5 688.3,380.0C692.8,378.5 697.4,375.2 701.9,375.2C706.5,375.2 711.0,375.2 715.6,375.8C720.1,376.2 724.7,383.2 729.2,383.2C733.8,383.2 738.3,380.5 742.9,380.5C747.4,380.5 752.0,381.8 756.5,382.5C761.1,383.2 765.6,384.0 770.2,384.5C774.7,385.0 779.3,385.5 783.8,385.5C788.4,385.5 792.9,381.0 797.5,379.5C802.0,378.0 806.6,376.2 811.1,376.2C815.7,376.2 820.2,377.5 824.8,378.0C829.3,378.5 833.9,379.0 838.5,379.0C843.0,379.0 847.6,372.0 852.1,372.0C856.7,372.0 861.2,377.9 865.8,379.5C870.3,381.1 874.9,381.5 879.4,381.5C884.0,381.5 888.5,377.5 893.1,377.5C897.6,377.5 902.2,378.8 906.7,378.8C911.3,378.8 915.8,373.2 920.4,373.2C924.9,373.2 929.5,377.6 934.0,379.5C938.6,381.4 943.1,384.5 947.7,384.5C952.2,384.5 956.8,380.0 961.3,380.0C965.9,380.0 970.4,380.0 975.0,380.0L975.0,488L155.8,488Z" fill="url(#gT)" stroke="none"/><path d="M155.8,488.0C160.3,451.8 164.9,379.2 169.4,379.2C174.0,379.2 178.5,379.2 183.1,380.0C187.6,380.8 192.2,384.5 196.7,384.5C201.3,384.5 205.8,367.5 210.4,367.5C214.9,367.5 219.5,375.9 224.0,378.2C228.6,380.6 233.1,381.8 237.7,381.8C242.2,381.8 246.8,381.3 251.3,378.8C255.9,376.2 260.4,366.2 265.0,366.2C269.5,366.2 274.1,377.0 278.6,377.0C283.2,377.0 287.7,370.0 292.3,370.0C296.8,370.0 301.4,384.5 305.9,384.5C310.5,384.5 315.0,374.5 319.6,374.5C324.1,374.5 328.7,379.5 333.3,379.5C337.8,379.5 342.4,375.8 346.9,375.8C351.5,375.8 356.0,384.5 360.6,384.5C365.1,384.5 369.7,374.5 374.2,374.5C378.8,374.5 383.3,377.0 387.9,377.0C392.4,377.0 397.0,377.0 401.5,377.0C406.1,377.0 410.6,372.5 415.2,372.5C419.7,372.5 424.3,378.2 428.8,379.5C433.4,380.8 437.9,380.2 442.5,380.8C447.0,381.3 451.6,383.0 456.1,383.0C460.7,383.0 465.2,379.2 469.8,379.2C474.3,379.2 478.9,380.5 483.4,380.5C488.0,380.5 492.5,374.2 497.1,374.2C501.7,374.2 506.2,384.5 510.8,384.5C515.3,384.5 519.9,378.0 524.4,378.0C529.0,378.0 533.5,380.0 538.1,380.0C542.6,380.0 547.2,379.1 551.7,378.8C556.3,378.4 560.8,378.0 565.4,377.8C569.9,377.5 574.5,377.0 579.0,377.0C583.6,377.0 588.1,379.0 592.7,379.0C597.2,379.0 601.8,378.0 606.3,378.0C610.9,378.0 615.4,380.5 620.0,380.5C624.5,380.5 629.1,376.2 633.6,376.2C638.2,376.2 642.7,385.8 647.3,385.8C651.8,385.8 656.4,378.5 660.9,378.5C665.5,378.5 670.1,384.5 674.6,384.5C679.2,384.5 683.7,381.5 688.3,380.0C692.8,378.5 697.4,375.2 701.9,375.2C706.5,375.2 711.0,375.2 715.6,375.8C720.1,376.2 724.7,383.2 729.2,383.2C733.8,383.2 738.3,380.5 742.9,380.5C747.4,380.5 752.0,381.8 756.5,382.5C761.1,383.2 765.6,384.0 770.2,384.5C774.7,385.0 779.3,385.5 783.8,385.5C788.4,385.5 792.9,381.0 797.5,379.5C802.0,378.0 806.6,376.2 811.1,376.2C815.7,376.2 820.2,377.5 824.8,378.0C829.3,378.5 833.9,379.0 838.5,379.0C843.0,379.0 847.6,372.0 852.1,372.0C856.7,372.0 861.2,377.9 865.8,379.5C870.3,381.1 874.9,381.5 879.4,381.5C884.0,381.5 888.5,377.5 893.1,377.5C897.6,377.5 902.2,378.8 906.7,378.8C911.3,378.8 915.8,373.2 920.4,373.2C924.9,373.2 929.5,377.6 934.0,379.5C938.6,381.4 943.1,384.5 947.7,384.5C952.2,384.5 956.8,380.0 961.3,380.0C965.9,380.0 970.4,380.0 975.0,380.0" fill="none" stroke="#20a8cc" stroke-width="1.4" stroke-opacity="1" stroke-linejoin="round"/>
<path d="M155.8,488.0C160.3,449.7 164.9,373.0 169.4,373.0C174.0,373.0 178.5,412.5 183.1,412.5C187.6,412.5 192.2,412.5 196.7,406.2C201.3,400.0 205.8,307.5 210.4,307.5C214.9,307.5 219.5,372.5 224.0,377.5C228.6,382.5 233.1,380.1 237.7,382.5C242.2,384.9 246.8,391.8 251.3,391.8C255.9,391.8 260.4,305.8 265.0,305.8C269.5,305.8 274.1,424.2 278.6,427.5C283.2,430.8 287.7,430.8 292.3,430.8C296.8,430.8 301.4,366.2 305.9,366.2C310.5,366.2 315.0,366.2 319.6,372.5C324.1,378.8 328.7,421.2 333.3,435.0C337.8,448.8 342.4,455.0 346.9,455.0C351.5,455.0 356.0,344.2 360.6,344.2C365.1,344.2 369.7,348.7 374.2,367.5C378.8,386.3 383.3,457.0 387.9,457.0C392.4,457.0 397.0,366.8 401.5,366.8C406.1,366.8 410.6,366.8 415.2,372.5C419.7,378.2 424.3,420.5 428.8,420.5C433.4,420.5 437.9,396.8 442.5,385.0C447.0,373.2 451.6,349.5 456.1,349.5C460.7,349.5 465.2,415.0 469.8,415.0C474.3,415.0 478.9,331.2 483.4,331.2C488.0,331.2 492.5,362.2 497.1,375.0C501.7,387.8 506.2,408.0 510.8,408.0C515.3,408.0 519.9,317.0 524.4,315.8C529.0,314.5 533.5,314.5 538.1,314.5C542.6,314.5 547.2,426.2 551.7,426.2C556.3,426.2 560.8,408.2 565.4,408.2C569.9,408.2 574.5,452.0 579.0,452.0C583.6,452.0 588.1,345.0 592.7,345.0C597.2,345.0 601.8,372.5 606.3,390.0C610.9,407.5 615.4,450.0 620.0,450.0C624.5,450.0 629.1,252.0 633.6,252.0C638.2,252.0 642.7,372.0 647.3,372.0C651.8,372.0 656.4,368.0 660.9,368.0C665.5,368.0 670.1,459.5 674.6,459.5C679.2,459.5 683.7,427.3 688.3,410.0C692.8,392.7 697.4,355.5 701.9,355.5C706.5,355.5 711.0,391.8 715.6,410.0C720.1,428.2 724.7,465.0 729.2,465.0C733.8,465.0 738.3,394.5 742.9,372.5C747.4,350.5 752.0,333.2 756.5,333.2C761.1,333.2 765.6,425.0 770.2,425.0C774.7,425.0 779.3,420.3 783.8,412.5C788.4,404.7 792.9,378.2 797.5,378.2C802.0,378.2 806.6,423.0 811.1,435.0C815.7,447.0 820.2,450.0 824.8,450.0C829.3,450.0 833.9,338.2 838.5,338.2C843.0,338.2 847.6,364.2 852.1,364.2C856.7,364.2 861.2,309.0 865.8,309.0C870.3,309.0 874.9,324.8 879.4,340.0C884.0,355.2 888.5,382.9 893.1,400.0C897.6,417.1 902.2,442.5 906.7,442.5C911.3,442.5 915.8,361.2 920.4,361.2C924.9,361.2 929.5,361.2 934.0,364.2C938.6,367.2 943.1,461.2 947.7,461.2C952.2,461.2 956.8,405.7 961.3,385.0C965.9,364.3 970.4,353.0 975.0,337.0L975.0,488L155.8,488Z" fill="url(#gO)" stroke="none"/><path d="M155.8,488.0C160.3,449.7 164.9,373.0 169.4,373.0C174.0,373.0 178.5,412.5 183.1,412.5C187.6,412.5 192.2,412.5 196.7,406.2C201.3,400.0 205.8,307.5 210.4,307.5C214.9,307.5 219.5,372.5 224.0,377.5C228.6,382.5 233.1,380.1 237.7,382.5C242.2,384.9 246.8,391.8 251.3,391.8C255.9,391.8 260.4,305.8 265.0,305.8C269.5,305.8 274.1,424.2 278.6,427.5C283.2,430.8 287.7,430.8 292.3,430.8C296.8,430.8 301.4,366.2 305.9,366.2C310.5,366.2 315.0,366.2 319.6,372.5C324.1,378.8 328.7,421.2 333.3,435.0C337.8,448.8 342.4,455.0 346.9,455.0C351.5,455.0 356.0,344.2 360.6,344.2C365.1,344.2 369.7,348.7 374.2,367.5C378.8,386.3 383.3,457.0 387.9,457.0C392.4,457.0 397.0,366.8 401.5,366.8C406.1,366.8 410.6,366.8 415.2,372.5C419.7,378.2 424.3,420.5 428.8,420.5C433.4,420.5 437.9,396.8 442.5,385.0C447.0,373.2 451.6,349.5 456.1,349.5C460.7,349.5 465.2,415.0 469.8,415.0C474.3,415.0 478.9,331.2 483.4,331.2C488.0,331.2 492.5,362.2 497.1,375.0C501.7,387.8 506.2,408.0 510.8,408.0C515.3,408.0 519.9,317.0 524.4,315.8C529.0,314.5 533.5,314.5 538.1,314.5C542.6,314.5 547.2,426.2 551.7,426.2C556.3,426.2 560.8,408.2 565.4,408.2C569.9,408.2 574.5,452.0 579.0,452.0C583.6,452.0 588.1,345.0 592.7,345.0C597.2,345.0 601.8,372.5 606.3,390.0C610.9,407.5 615.4,450.0 620.0,450.0C624.5,450.0 629.1,252.0 633.6,252.0C638.2,252.0 642.7,372.0 647.3,372.0C651.8,372.0 656.4,368.0 660.9,368.0C665.5,368.0 670.1,459.5 674.6,459.5C679.2,459.5 683.7,427.3 688.3,410.0C692.8,392.7 697.4,355.5 701.9,355.5C706.5,355.5 711.0,391.8 715.6,410.0C720.1,428.2 724.7,465.0 729.2,465.0C733.8,465.0 738.3,394.5 742.9,372.5C747.4,350.5 752.0,333.2 756.5,333.2C761.1,333.2 765.6,425.0 770.2,425.0C774.7,425.0 779.3,420.3 783.8,412.5C788.4,404.7 792.9,378.2 797.5,378.2C802.0,378.2 806.6,423.0 811.1,435.0C815.7,447.0 820.2,450.0 824.8,450.0C829.3,450.0 833.9,338.2 838.5,338.2C843.0,338.2 847.6,364.2 852.1,364.2C856.7,364.2 861.2,309.0 865.8,309.0C870.3,309.0 874.9,324.8 879.4,340.0C884.0,355.2 888.5,382.9 893.1,400.0C897.6,417.1 902.2,442.5 906.7,442.5C911.3,442.5 915.8,361.2 920.4,361.2C924.9,361.2 929.5,361.2 934.0,364.2C938.6,367.2 943.1,461.2 947.7,461.2C952.2,461.2 956.8,405.7 961.3,385.0C965.9,364.3 970.4,353.0 975.0,337.0" fill="none" stroke="#e69c10" stroke-width="1.4" stroke-opacity="1" stroke-linejoin="round"/>
<path d="M1090.5,245.5H1097.5V488.3" fill="none" stroke="#777a80" stroke-width="1"/><path d="M1097.5,488.3H1929.0" fill="none" stroke="#777a80" stroke-width="1"/><path d="M1090.5,306.1H1097.5" stroke="#777a80" stroke-width="1"/><path d="M1090.5,366.75H1097.5" stroke="#777a80" stroke-width="1"/><path d="M1090.5,427.4H1097.5" stroke="#777a80" stroke-width="1"/><path d="M1090.5,488.3H1097.5" stroke="#777a80" stroke-width="1"/><path d="M1097.5,488.3V494.5" stroke="#777a80" stroke-width="1"/><path d="M1329.5,488.3V494.5" stroke="#777a80" stroke-width="1"/><path d="M1520.65,488.3V494.5" stroke="#777a80" stroke-width="1"/><path d="M1711.75,488.3V494.5" stroke="#777a80" stroke-width="1"/><path d="M1916.5,488.3V494.5" stroke="#777a80" stroke-width="1"/>
<path d="M1097.5,488.0C1102.0,480.8 1106.6,466.5 1111.2,466.5C1115.7,466.5 1120.2,466.5 1124.8,466.5C1129.3,466.5 1133.9,466.7 1138.5,466.7C1143.0,466.7 1147.5,466.5 1152.1,466.5C1156.6,466.5 1161.2,466.7 1165.8,466.7C1170.3,466.7 1174.9,466.6 1179.4,466.5C1184.0,466.5 1188.5,466.5 1193.0,466.5C1197.6,466.5 1202.2,466.6 1206.7,466.6C1211.2,466.6 1215.8,466.5 1220.3,466.5C1224.9,466.5 1229.5,466.5 1234.0,466.5C1238.5,466.5 1243.1,466.5 1247.7,466.5C1252.2,466.6 1256.8,466.6 1261.3,466.6C1265.8,466.6 1270.4,466.5 1275.0,466.5C1279.5,466.5 1284.0,466.7 1288.6,466.7C1293.1,466.7 1297.7,466.5 1302.2,466.5C1306.8,466.5 1311.4,466.7 1315.9,466.7C1320.5,466.7 1325.0,466.6 1329.5,466.6C1334.1,466.5 1338.7,466.5 1343.2,466.5C1347.8,466.5 1352.3,466.6 1356.8,466.6C1361.4,466.6 1366.0,466.7 1370.5,466.7C1375.0,466.7 1379.6,466.6 1384.2,466.6C1388.7,466.6 1393.2,466.6 1397.8,466.6C1402.3,466.6 1406.9,466.5 1411.5,466.5C1416.0,466.5 1420.5,466.5 1425.1,466.5C1429.6,466.5 1434.2,466.5 1438.8,466.5C1443.3,466.5 1447.9,466.6 1452.4,466.6C1457.0,466.6 1461.5,466.7 1466.0,466.7C1470.6,466.7 1475.2,466.6 1479.7,466.6C1484.2,466.6 1488.8,466.7 1493.3,466.7C1497.9,466.7 1502.5,466.5 1507.0,466.5C1511.5,466.5 1516.1,466.5 1520.7,466.5C1525.2,466.5 1529.8,466.6 1534.3,466.7C1538.8,466.7 1543.4,466.7 1548.0,466.7C1552.5,466.7 1557.0,466.7 1561.6,466.7C1566.1,466.7 1570.7,466.5 1575.2,466.5C1579.8,466.5 1584.4,466.6 1588.9,466.6C1593.5,466.6 1598.0,466.5 1602.5,466.5C1607.1,466.5 1611.7,466.7 1616.2,466.7C1620.8,466.7 1625.3,466.6 1629.8,466.6C1634.4,466.6 1639.0,466.6 1643.5,466.7C1648.0,466.7 1652.6,466.7 1657.2,466.7C1661.7,466.7 1666.3,466.7 1670.8,466.7C1675.4,466.7 1679.9,466.6 1684.5,466.6C1689.0,466.6 1693.5,466.7 1698.1,466.7C1702.6,466.7 1707.2,466.5 1711.8,466.5C1716.3,466.5 1720.9,466.7 1725.4,466.7C1730.0,466.7 1734.5,466.5 1739.1,466.5C1743.6,466.5 1748.2,466.6 1752.7,466.7C1757.2,466.7 1761.8,466.7 1766.3,466.7C1770.9,466.7 1775.5,466.6 1780.0,466.6C1784.5,466.6 1789.1,466.6 1793.7,466.6C1798.2,466.6 1802.8,466.7 1807.3,466.7C1811.9,466.7 1816.4,466.7 1821.0,466.7C1825.5,466.7 1830.0,466.7 1834.6,466.7C1839.1,466.6 1843.7,466.6 1848.2,466.6C1852.8,466.6 1857.4,466.6 1861.9,466.6C1866.5,466.6 1871.0,466.5 1875.6,466.5C1880.1,466.5 1884.7,466.6 1889.2,466.6C1893.8,466.6 1898.3,466.5 1902.8,466.5C1907.4,466.5 1912.0,466.6 1916.5,466.7" fill="none" stroke="#8a5fe0" stroke-width="1.4040000000000001" stroke-opacity="0.92" stroke-linejoin="round"/><path d="M1097.5,488.0C1102.0,483.1 1106.6,476.8 1111.2,473.4C1115.7,470.0 1120.2,468.0 1124.8,467.8C1129.3,467.7 1133.9,467.7 1138.5,467.7C1143.0,467.7 1147.5,467.8 1152.1,467.8C1156.6,467.9 1161.2,468.0 1165.8,468.0C1170.3,468.0 1174.9,468.0 1179.4,468.0C1184.0,468.0 1188.5,467.9 1193.0,467.9C1197.6,467.9 1202.2,468.0 1206.7,468.0C1211.2,468.0 1215.8,467.9 1220.3,467.9C1224.9,467.9 1229.5,468.0 1234.0,468.0C1238.5,468.0 1243.1,468.0 1247.7,467.9C1252.2,467.9 1256.8,467.8 1261.3,467.8C1265.8,467.8 1270.4,467.9 1275.0,467.9C1279.5,467.9 1284.0,467.9 1288.6,467.9C1293.1,467.9 1297.7,467.9 1302.2,467.9C1306.8,467.9 1311.4,467.8 1315.9,467.8C1320.5,467.8 1325.0,468.0 1329.5,468.0C1334.1,468.0 1338.7,467.8 1343.2,467.8C1347.8,467.8 1352.3,467.8 1356.8,467.8C1361.4,467.8 1366.0,467.8 1370.5,467.8C1375.0,467.8 1379.6,467.8 1384.2,467.8C1388.7,467.8 1393.2,467.8 1397.8,467.8C1402.3,467.8 1406.9,468.0 1411.5,468.0C1416.0,468.0 1420.5,468.0 1425.1,468.0C1429.6,467.9 1434.2,467.7 1438.8,467.7C1443.3,467.7 1447.9,467.9 1452.4,467.9C1457.0,467.9 1461.5,467.7 1466.0,467.7C1470.6,467.7 1475.2,468.0 1479.7,468.0C1484.2,468.0 1488.8,467.9 1493.3,467.9C1497.9,467.9 1502.5,467.9 1507.0,467.9C1511.5,467.9 1516.1,468.0 1520.7,468.0C1525.2,468.0 1529.8,468.0 1534.3,468.0C1538.8,468.0 1543.4,468.0 1548.0,468.0C1552.5,467.9 1557.0,467.9 1561.6,467.8C1566.1,467.8 1570.7,467.7 1575.2,467.7C1579.8,467.7 1584.4,467.9 1588.9,467.9C1593.5,467.9 1598.0,467.9 1602.5,467.9C1607.1,467.9 1611.7,468.1 1616.2,468.1C1620.8,468.1 1625.3,468.1 1629.8,468.1C1634.4,468.0 1639.0,467.8 1643.5,467.8C1648.0,467.8 1652.6,467.8 1657.2,467.9C1661.7,467.9 1666.3,468.0 1670.8,468.0C1675.4,468.0 1679.9,467.9 1684.5,467.9C1689.0,467.9 1693.5,468.1 1698.1,468.1C1702.6,468.1 1707.2,467.7 1711.8,467.7C1716.3,467.7 1720.9,467.8 1725.4,467.9C1730.0,467.9 1734.5,468.0 1739.1,468.0C1743.6,468.1 1748.2,468.1 1752.7,468.1C1757.2,468.1 1761.8,467.9 1766.3,467.9C1770.9,467.9 1775.5,467.8 1780.0,467.8C1784.5,467.8 1789.1,467.9 1793.7,467.9C1798.2,467.9 1802.8,467.8 1807.3,467.8C1811.9,467.8 1816.4,468.0 1821.0,468.0C1825.5,468.0 1830.0,467.9 1834.6,467.8C1839.1,467.8 1843.7,467.8 1848.2,467.8C1852.8,467.8 1857.4,467.9 1861.9,467.9C1866.5,468.0 1871.0,468.0 1875.6,468.0C1880.1,468.0 1884.7,467.9 1889.2,467.9C1893.8,467.9 1898.3,467.9 1902.8,467.9C1907.4,467.9 1912.0,467.9 1916.5,467.9" fill="none" stroke="#f2a07a" stroke-width="1.2480000000000002" stroke-opacity="0.92" stroke-linejoin="round"/><path d="M1097.5,488.0C1102.0,483.4 1106.6,477.5 1111.2,474.3C1115.7,471.2 1120.2,469.1 1124.8,469.0C1129.3,468.9 1133.9,468.9 1138.5,468.9C1143.0,468.8 1147.5,468.8 1152.1,468.8C1156.6,468.8 1161.2,468.9 1165.8,469.0C1170.3,469.0 1174.9,469.1 1179.4,469.1C1184.0,469.1 1188.5,468.9 1193.0,468.9C1197.6,468.9 1202.2,469.0 1206.7,469.0C1211.2,469.0 1215.8,468.7 1220.3,468.7C1224.9,468.7 1229.5,468.9 1234.0,468.9C1238.5,468.9 1243.1,468.8 1247.7,468.8C1252.2,468.8 1256.8,468.9 1261.3,468.9C1265.8,468.9 1270.4,468.9 1275.0,468.9C1279.5,469.0 1284.0,469.0 1288.6,469.0C1293.1,469.0 1297.7,468.9 1302.2,468.9C1306.8,468.9 1311.4,469.0 1315.9,469.0C1320.5,469.0 1325.0,468.9 1329.5,468.8C1334.1,468.8 1338.7,468.8 1343.2,468.8C1347.8,468.8 1352.3,468.8 1356.8,468.9C1361.4,468.9 1366.0,469.0 1370.5,469.0C1375.0,469.0 1379.6,469.0 1384.2,469.0C1388.7,469.0 1393.2,468.7 1397.8,468.7C1402.3,468.7 1406.9,468.8 1411.5,468.8C1416.0,468.8 1420.5,468.8 1425.1,468.8C1429.6,468.8 1434.2,468.8 1438.8,468.9C1443.3,468.9 1447.9,469.0 1452.4,469.0C1457.0,469.0 1461.5,468.9 1466.0,468.8C1470.6,468.8 1475.2,468.7 1479.7,468.7C1484.2,468.7 1488.8,469.1 1493.3,469.1C1497.9,469.1 1502.5,469.1 1507.0,469.0C1511.5,469.0 1516.1,469.0 1520.7,469.0C1525.2,469.0 1529.8,468.7 1534.3,468.7C1538.8,468.7 1543.4,468.8 1548.0,468.8C1552.5,468.8 1557.0,468.8 1561.6,468.8C1566.1,468.8 1570.7,469.1 1575.2,469.1C1579.8,469.1 1584.4,468.7 1588.9,468.7C1593.5,468.7 1598.0,468.7 1602.5,468.8C1607.1,468.8 1611.7,468.8 1616.2,468.8C1620.8,468.8 1625.3,469.0 1629.8,469.0C1634.4,469.0 1639.0,468.8 1643.5,468.8C1648.0,468.8 1652.6,469.1 1657.2,469.1C1661.7,469.1 1666.3,468.8 1670.8,468.8C1675.4,468.8 1679.9,469.0 1684.5,469.0C1689.0,469.0 1693.5,468.8 1698.1,468.8C1702.6,468.8 1707.2,468.8 1711.8,468.8C1716.3,468.9 1720.9,469.0 1725.4,469.0C1730.0,469.1 1734.5,469.1 1739.1,469.1C1743.6,469.1 1748.2,468.8 1752.7,468.8C1757.2,468.8 1761.8,468.8 1766.3,468.8C1770.9,468.8 1775.5,468.7 1780.0,468.7C1784.5,468.7 1789.1,468.8 1793.7,468.8C1798.2,468.8 1802.8,468.8 1807.3,468.9C1811.9,468.9 1816.4,468.9 1821.0,468.9C1825.5,468.9 1830.0,468.9 1834.6,468.9C1839.1,468.9 1843.7,468.9 1848.2,468.8C1852.8,468.8 1857.4,468.8 1861.9,468.8C1866.5,468.8 1871.0,468.9 1875.6,468.9C1880.1,468.9 1884.7,468.8 1889.2,468.8C1893.8,468.8 1898.3,468.8 1902.8,468.8C1907.4,468.8 1912.0,469.0 1916.5,469.1" fill="none" stroke="#f0902c" stroke-width="1.2480000000000002" stroke-opacity="0.92" stroke-linejoin="round"/><path d="M1097.5,488.0C1102.0,481.9 1106.6,469.8 1111.2,469.8C1115.7,469.8 1120.2,470.1 1124.8,470.1C1129.3,470.1 1133.9,470.1 1138.5,470.0C1143.0,470.0 1147.5,469.9 1152.1,469.9C1156.6,469.9 1161.2,470.1 1165.8,470.1C1170.3,470.1 1174.9,470.0 1179.4,470.0C1184.0,470.0 1188.5,470.1 1193.0,470.1C1197.6,470.1 1202.2,470.0 1206.7,470.0C1211.2,470.0 1215.8,470.1 1220.3,470.1C1224.9,470.1 1229.5,470.1 1234.0,470.1C1238.5,470.1 1243.1,470.0 1247.7,469.9C1252.2,469.9 1256.8,469.8 1261.3,469.8C1265.8,469.8 1270.4,470.2 1275.0,470.2C1279.5,470.2 1284.0,469.8 1288.6,469.8C1293.1,469.8 1297.7,470.0 1302.2,470.0C1306.8,470.1 1311.4,470.2 1315.9,470.2C1320.5,470.2 1325.0,470.0 1329.5,469.9C1334.1,469.9 1338.7,469.9 1343.2,469.9C1347.8,469.9 1352.3,470.0 1356.8,470.0C1361.4,470.0 1366.0,469.9 1370.5,469.9C1375.0,469.9 1379.6,470.1 1384.2,470.1C1388.7,470.1 1393.2,470.0 1397.8,469.9C1402.3,469.9 1406.9,469.8 1411.5,469.8C1416.0,469.8 1420.5,470.0 1425.1,470.0C1429.6,470.0 1434.2,469.9 1438.8,469.9C1443.3,469.9 1447.9,469.9 1452.4,469.9C1457.0,469.9 1461.5,469.8 1466.0,469.8C1470.6,469.8 1475.2,470.1 1479.7,470.1C1484.2,470.1 1488.8,470.0 1493.3,470.0C1497.9,470.0 1502.5,470.0 1507.0,470.0C1511.5,470.0 1516.1,470.0 1520.7,470.0C1525.2,470.0 1529.8,470.1 1534.3,470.1C1538.8,470.1 1543.4,469.8 1548.0,469.8C1552.5,469.8 1557.0,470.0 1561.6,470.1C1566.1,470.1 1570.7,470.1 1575.2,470.1C1579.8,470.1 1584.4,469.9 1588.9,469.9C1593.5,469.9 1598.0,470.0 1602.5,470.0C1607.1,470.0 1611.7,469.9 1616.2,469.9C1620.8,469.9 1625.3,469.9 1629.8,469.9C1634.4,469.9 1639.0,470.2 1643.5,470.2C1648.0,470.2 1652.6,469.9 1657.2,469.9C1661.7,469.9 1666.3,470.1 1670.8,470.1C1675.4,470.1 1679.9,469.8 1684.5,469.8C1689.0,469.8 1693.5,470.1 1698.1,470.1C1702.6,470.1 1707.2,469.8 1711.8,469.8C1716.3,469.8 1720.9,470.1 1725.4,470.1C1730.0,470.1 1734.5,469.8 1739.1,469.8C1743.6,469.8 1748.2,469.9 1752.7,469.9C1757.2,469.9 1761.8,469.9 1766.3,469.9C1770.9,469.9 1775.5,469.9 1780.0,469.9C1784.5,469.9 1789.1,470.1 1793.7,470.1C1798.2,470.1 1802.8,470.1 1807.3,470.0C1811.9,470.0 1816.4,469.8 1821.0,469.8C1825.5,469.8 1830.0,469.8 1834.6,469.9C1839.1,469.9 1843.7,469.9 1848.2,470.0C1852.8,470.0 1857.4,470.1 1861.9,470.1C1866.5,470.1 1871.0,470.1 1875.6,470.1C1880.1,470.0 1884.7,470.0 1889.2,470.0C1893.8,470.0 1898.3,470.1 1902.8,470.1C1907.4,470.2 1912.0,470.2 1916.5,470.2" fill="none" stroke="#e8985c" stroke-width="1.0919999999999999" stroke-opacity="0.92" stroke-linejoin="round"/><path d="M1097.5,488.0C1102.0,483.9 1106.6,478.6 1111.2,475.7C1115.7,472.9 1120.2,470.9 1124.8,470.9C1129.3,470.9 1133.9,471.0 1138.5,471.0C1143.0,471.0 1147.5,470.9 1152.1,470.9C1156.6,470.9 1161.2,471.0 1165.8,471.0C1170.3,471.0 1174.9,471.0 1179.4,471.0C1184.0,471.0 1188.5,471.0 1193.0,471.0C1197.6,471.0 1202.2,470.9 1206.7,470.9C1211.2,470.9 1215.8,471.1 1220.3,471.1C1224.9,471.1 1229.5,470.9 1234.0,470.9C1238.5,470.9 1243.1,470.9 1247.7,470.9C1252.2,470.9 1256.8,471.0 1261.3,471.0C1265.8,471.1 1270.4,471.1 1275.0,471.1C1279.5,471.1 1284.0,471.1 1288.6,471.1C1293.1,471.1 1297.7,471.1 1302.2,471.1C1306.8,471.1 1311.4,470.9 1315.9,470.9C1320.5,470.9 1325.0,470.9 1329.5,470.9C1334.1,470.9 1338.7,471.0 1343.2,471.0C1347.8,471.0 1352.3,471.0 1356.8,470.9C1361.4,470.9 1366.0,470.9 1370.5,470.9C1375.0,470.9 1379.6,471.0 1384.2,471.0C1388.7,471.0 1393.2,471.0 1397.8,471.0C1402.3,471.0 1406.9,471.0 1411.5,471.0C1416.0,471.0 1420.5,471.1 1425.1,471.1C1429.6,471.1 1434.2,471.1 1438.8,471.1C1443.3,471.1 1447.9,470.9 1452.4,470.9C1457.0,470.9 1461.5,471.0 1466.0,471.0C1470.6,471.0 1475.2,471.0 1479.7,471.0C1484.2,471.0 1488.8,470.9 1493.3,470.9C1497.9,470.9 1502.5,471.1 1507.0,471.1C1511.5,471.1 1516.1,471.0 1520.7,471.0C1525.2,471.0 1529.8,471.0 1534.3,471.0C1538.8,471.0 1543.4,471.0 1548.0,471.0C1552.5,471.0 1557.0,471.1 1561.6,471.1C1566.1,471.1 1570.7,471.0 1575.2,471.0C1579.8,471.0 1584.4,471.0 1588.9,471.0C1593.5,471.0 1598.0,471.1 1602.5,471.1C1607.1,471.1 1611.7,470.9 1616.2,470.9C1620.8,470.9 1625.3,471.0 1629.8,471.0C1634.4,471.0 1639.0,471.1 1643.5,471.1C1648.0,471.1 1652.6,471.1 1657.2,471.1C1661.7,471.1 1666.3,471.1 1670.8,471.1C1675.4,471.1 1679.9,471.1 1684.5,471.1C1689.0,471.1 1693.5,470.9 1698.1,470.9C1702.6,470.9 1707.2,471.0 1711.8,471.0C1716.3,471.0 1720.9,471.0 1725.4,471.0C1730.0,471.0 1734.5,471.1 1739.1,471.1C1743.6,471.1 1748.2,471.1 1752.7,471.1C1757.2,471.1 1761.8,471.0 1766.3,471.0C1770.9,471.0 1775.5,471.1 1780.0,471.1C1784.5,471.1 1789.1,471.0 1793.7,471.0C1798.2,471.0 1802.8,471.0 1807.3,471.0C1811.9,471.0 1816.4,471.0 1821.0,471.0C1825.5,471.1 1830.0,471.1 1834.6,471.1C1839.1,471.1 1843.7,471.1 1848.2,471.1C1852.8,471.0 1857.4,471.0 1861.9,470.9C1866.5,470.9 1871.0,470.9 1875.6,470.9C1880.1,470.9 1884.7,471.1 1889.2,471.1C1893.8,471.1 1898.3,471.0 1902.8,471.0C1907.4,471.0 1912.0,471.0 1916.5,471.0" fill="none" stroke="#15161a" stroke-width="1.014" stroke-opacity="0.92" stroke-linejoin="round"/><path d="M1097.5,488.0C1102.0,484.2 1106.6,479.2 1111.2,476.5C1115.7,473.9 1120.2,472.3 1124.8,472.2C1129.3,472.1 1133.9,472.1 1138.5,472.1C1143.0,472.1 1147.5,472.1 1152.1,472.1C1156.6,472.1 1161.2,472.2 1165.8,472.2C1170.3,472.2 1174.9,472.0 1179.4,472.0C1184.0,472.0 1188.5,472.3 1193.0,472.3C1197.6,472.3 1202.2,472.2 1206.7,472.1C1211.2,472.0 1215.8,471.9 1220.3,471.9C1224.9,471.9 1229.5,472.2 1234.0,472.2C1238.5,472.2 1243.1,472.0 1247.7,472.0C1252.2,472.0 1256.8,472.3 1261.3,472.3C1265.8,472.3 1270.4,472.2 1275.0,472.2C1279.5,472.1 1284.0,472.0 1288.6,472.0C1293.1,472.0 1297.7,472.3 1302.2,472.3C1306.8,472.3 1311.4,472.0 1315.9,472.0C1320.5,472.0 1325.0,472.3 1329.5,472.3C1334.1,472.3 1338.7,471.9 1343.2,471.9C1347.8,471.9 1352.3,472.0 1356.8,472.0C1361.4,472.1 1366.0,472.2 1370.5,472.2C1375.0,472.2 1379.6,472.0 1384.2,472.0C1388.7,472.0 1393.2,472.0 1397.8,472.0C1402.3,472.0 1406.9,471.9 1411.5,471.9C1416.0,471.9 1420.5,472.1 1425.1,472.1C1429.6,472.2 1434.2,472.2 1438.8,472.2C1443.3,472.2 1447.9,472.0 1452.4,472.0C1457.0,472.0 1461.5,472.2 1466.0,472.2C1470.6,472.2 1475.2,472.1 1479.7,472.1C1484.2,472.1 1488.8,472.1 1493.3,472.2C1497.9,472.2 1502.5,472.3 1507.0,472.3C1511.5,472.3 1516.1,472.2 1520.7,472.1C1525.2,472.1 1529.8,472.0 1534.3,472.0C1538.8,472.0 1543.4,472.1 1548.0,472.1C1552.5,472.1 1557.0,472.2 1561.6,472.2C1566.1,472.2 1570.7,472.3 1575.2,472.3C1579.8,472.3 1584.4,472.3 1588.9,472.3C1593.5,472.3 1598.0,472.1 1602.5,472.0C1607.1,472.0 1611.7,471.9 1616.2,471.9C1620.8,471.9 1625.3,472.3 1629.8,472.3C1634.4,472.3 1639.0,472.0 1643.5,472.0C1648.0,472.0 1652.6,472.2 1657.2,472.2C1661.7,472.2 1666.3,472.0 1670.8,472.0C1675.4,472.0 1679.9,472.1 1684.5,472.1C1689.0,472.1 1693.5,472.2 1698.1,472.2C1702.6,472.2 1707.2,472.3 1711.8,472.3C1716.3,472.3 1720.9,472.0 1725.4,472.0C1730.0,472.0 1734.5,472.0 1739.1,472.1C1743.6,472.1 1748.2,472.2 1752.7,472.2C1757.2,472.2 1761.8,472.2 1766.3,472.1C1770.9,472.1 1775.5,471.9 1780.0,471.9C1784.5,471.9 1789.1,472.0 1793.7,472.0C1798.2,472.0 1802.8,472.0 1807.3,472.0C1811.9,472.0 1816.4,472.2 1821.0,472.2C1825.5,472.2 1830.0,472.2 1834.6,472.2C1839.1,472.1 1843.7,471.9 1848.2,471.9C1852.8,471.9 1857.4,472.1 1861.9,472.1C1866.5,472.1 1871.0,472.2 1875.6,472.2C1880.1,472.2 1884.7,472.2 1889.2,472.2C1893.8,472.2 1898.3,472.2 1902.8,472.2C1907.4,472.2 1912.0,472.2 1916.5,472.1" fill="none" stroke="#e89a2c" stroke-width="1.0919999999999999" stroke-opacity="0.92" stroke-linejoin="round"/><path d="M1097.5,488.0C1102.0,483.0 1106.6,473.0 1111.2,473.0C1115.7,473.0 1120.2,473.1 1124.8,473.1C1129.3,473.2 1133.9,473.3 1138.5,473.3C1143.0,473.3 1147.5,473.3 1152.1,473.3C1156.6,473.3 1161.2,473.3 1165.8,473.4C1170.3,473.4 1174.9,473.4 1179.4,473.4C1184.0,473.4 1188.5,473.1 1193.0,473.1C1197.6,473.1 1202.2,473.1 1206.7,473.1C1211.2,473.1 1215.8,473.2 1220.3,473.2C1224.9,473.2 1229.5,473.3 1234.0,473.3C1238.5,473.3 1243.1,473.1 1247.7,473.1C1252.2,473.1 1256.8,473.3 1261.3,473.3C1265.8,473.3 1270.4,473.1 1275.0,473.1C1279.5,473.1 1284.0,473.3 1288.6,473.3C1293.1,473.3 1297.7,473.3 1302.2,473.3C1306.8,473.2 1311.4,473.1 1315.9,473.1C1320.5,473.1 1325.0,473.1 1329.5,473.2C1334.1,473.2 1338.7,473.3 1343.2,473.3C1347.8,473.3 1352.3,473.2 1356.8,473.2C1361.4,473.2 1366.0,473.1 1370.5,473.1C1375.0,473.1 1379.6,473.4 1384.2,473.4C1388.7,473.4 1393.2,473.1 1397.8,473.1C1402.3,473.1 1406.9,473.1 1411.5,473.1C1416.0,473.1 1420.5,473.0 1425.1,473.0C1429.6,473.0 1434.2,473.4 1438.8,473.4C1443.3,473.4 1447.9,473.3 1452.4,473.3C1457.0,473.3 1461.5,473.3 1466.0,473.3C1470.6,473.3 1475.2,473.2 1479.7,473.2C1484.2,473.2 1488.8,473.1 1493.3,473.1C1497.9,473.0 1502.5,473.0 1507.0,473.0C1511.5,473.0 1516.1,473.2 1520.7,473.2C1525.2,473.3 1529.8,473.3 1534.3,473.3C1538.8,473.4 1543.4,473.4 1548.0,473.4C1552.5,473.4 1557.0,473.0 1561.6,473.0C1566.1,473.0 1570.7,473.0 1575.2,473.0C1579.8,473.0 1584.4,473.0 1588.9,473.0C1593.5,473.0 1598.0,473.0 1602.5,473.1C1607.1,473.1 1611.7,473.3 1616.2,473.3C1620.8,473.3 1625.3,473.3 1629.8,473.3C1634.4,473.3 1639.0,473.3 1643.5,473.3C1648.0,473.3 1652.6,473.2 1657.2,473.2C1661.7,473.1 1666.3,473.1 1670.8,473.1C1675.4,473.1 1679.9,473.3 1684.5,473.3C1689.0,473.4 1693.5,473.4 1698.1,473.4C1702.6,473.4 1707.2,473.1 1711.8,473.0C1716.3,473.0 1720.9,473.0 1725.4,473.0C1730.0,473.0 1734.5,473.0 1739.1,473.0C1743.6,473.1 1748.2,473.1 1752.7,473.1C1757.2,473.2 1761.8,473.2 1766.3,473.3C1770.9,473.3 1775.5,473.3 1780.0,473.3C1784.5,473.3 1789.1,473.1 1793.7,473.1C1798.2,473.1 1802.8,473.1 1807.3,473.1C1811.9,473.1 1816.4,473.2 1821.0,473.2C1825.5,473.3 1830.0,473.4 1834.6,473.4C1839.1,473.4 1843.7,473.4 1848.2,473.4C1852.8,473.4 1857.4,473.0 1861.9,473.0C1866.5,473.0 1871.0,473.0 1875.6,473.0C1880.1,473.0 1884.7,473.0 1889.2,473.0C1893.8,473.0 1898.3,473.2 1902.8,473.2C1907.4,473.2 1912.0,473.2 1916.5,473.2" fill="none" stroke="#3fae9c" stroke-width="1.0919999999999999" stroke-opacity="0.92" stroke-linejoin="round"/><path d="M1097.5,488.0C1102.0,484.7 1106.6,480.4 1111.2,478.1C1115.7,475.9 1120.2,474.4 1124.8,474.4C1129.3,474.4 1133.9,474.4 1138.5,474.4C1143.0,474.4 1147.5,474.2 1152.1,474.2C1156.6,474.2 1161.2,474.2 1165.8,474.2C1170.3,474.2 1174.9,474.4 1179.4,474.4C1184.0,474.4 1188.5,474.2 1193.0,474.2C1197.6,474.2 1202.2,474.3 1206.7,474.4C1211.2,474.4 1215.8,474.4 1220.3,474.4C1224.9,474.4 1229.5,474.1 1234.0,474.1C1238.5,474.1 1243.1,474.2 1247.7,474.2C1252.2,474.2 1256.8,474.2 1261.3,474.2C1265.8,474.2 1270.4,474.2 1275.0,474.2C1279.5,474.3 1284.0,474.5 1288.6,474.5C1293.1,474.5 1297.7,474.2 1302.2,474.2C1306.8,474.2 1311.4,474.3 1315.9,474.3C1320.5,474.3 1325.0,474.2 1329.5,474.2C1334.1,474.2 1338.7,474.2 1343.2,474.2C1347.8,474.2 1352.3,474.1 1356.8,474.1C1361.4,474.1 1366.0,474.1 1370.5,474.1C1375.0,474.1 1379.6,474.4 1384.2,474.4C1388.7,474.4 1393.2,474.4 1397.8,474.4C1402.3,474.3 1406.9,474.2 1411.5,474.2C1416.0,474.2 1420.5,474.4 1425.1,474.4C1429.6,474.4 1434.2,474.5 1438.8,474.5C1443.3,474.5 1447.9,474.2 1452.4,474.2C1457.0,474.2 1461.5,474.4 1466.0,474.4C1470.6,474.4 1475.2,474.2 1479.7,474.2C1484.2,474.2 1488.8,474.2 1493.3,474.2C1497.9,474.2 1502.5,474.2 1507.0,474.2C1511.5,474.3 1516.1,474.3 1520.7,474.3C1525.2,474.3 1529.8,474.4 1534.3,474.4C1538.8,474.4 1543.4,474.2 1548.0,474.2C1552.5,474.2 1557.0,474.2 1561.6,474.2C1566.1,474.2 1570.7,474.4 1575.2,474.4C1579.8,474.4 1584.4,474.2 1588.9,474.2C1593.5,474.2 1598.0,474.4 1602.5,474.4C1607.1,474.4 1611.7,474.4 1616.2,474.4C1620.8,474.4 1625.3,474.5 1629.8,474.5C1634.4,474.5 1639.0,474.2 1643.5,474.2C1648.0,474.2 1652.6,474.2 1657.2,474.2C1661.7,474.2 1666.3,474.4 1670.8,474.4C1675.4,474.4 1679.9,474.2 1684.5,474.2C1689.0,474.2 1693.5,474.3 1698.1,474.3C1702.6,474.3 1707.2,474.2 1711.8,474.2C1716.3,474.2 1720.9,474.5 1725.4,474.5C1730.0,474.5 1734.5,474.3 1739.1,474.3C1743.6,474.3 1748.2,474.2 1752.7,474.2C1757.2,474.2 1761.8,474.5 1766.3,474.5C1770.9,474.5 1775.5,474.1 1780.0,474.1C1784.5,474.1 1789.1,474.2 1793.7,474.2C1798.2,474.3 1802.8,474.4 1807.3,474.4C1811.9,474.4 1816.4,474.2 1821.0,474.2C1825.5,474.2 1830.0,474.4 1834.6,474.4C1839.1,474.5 1843.7,474.5 1848.2,474.5C1852.8,474.5 1857.4,474.3 1861.9,474.3C1866.5,474.3 1871.0,474.3 1875.6,474.3C1880.1,474.3 1884.7,474.5 1889.2,474.5C1893.8,474.5 1898.3,474.4 1902.8,474.4C1907.4,474.4 1912.0,474.4 1916.5,474.4" fill="none" stroke="#6aa8a0" stroke-width="1.0919999999999999" stroke-opacity="0.92" stroke-linejoin="round"/><path d="M1097.5,488.0C1102.0,485.0 1106.6,480.9 1111.2,478.9C1115.7,476.8 1120.2,475.8 1124.8,475.5C1129.3,475.2 1133.9,475.2 1138.5,475.2C1143.0,475.2 1147.5,475.5 1152.1,475.5C1156.6,475.5 1161.2,475.3 1165.8,475.3C1170.3,475.3 1174.9,475.4 1179.4,475.4C1184.0,475.5 1188.5,475.5 1193.0,475.5C1197.6,475.5 1202.2,475.3 1206.7,475.3C1211.2,475.3 1215.8,475.4 1220.3,475.5C1224.9,475.5 1229.5,475.6 1234.0,475.6C1238.5,475.6 1243.1,475.5 1247.7,475.5C1252.2,475.4 1256.8,475.4 1261.3,475.3C1265.8,475.3 1270.4,475.3 1275.0,475.3C1279.5,475.3 1284.0,475.6 1288.6,475.6C1293.1,475.6 1297.7,475.3 1302.2,475.3C1306.8,475.3 1311.4,475.5 1315.9,475.5C1320.5,475.5 1325.0,475.5 1329.5,475.4C1334.1,475.4 1338.7,475.3 1343.2,475.3C1347.8,475.3 1352.3,475.4 1356.8,475.4C1361.4,475.4 1366.0,475.4 1370.5,475.4C1375.0,475.4 1379.6,475.4 1384.2,475.4C1388.7,475.4 1393.2,475.3 1397.8,475.3C1402.3,475.3 1406.9,475.4 1411.5,475.4C1416.0,475.4 1420.5,475.4 1425.1,475.4C1429.6,475.4 1434.2,475.3 1438.8,475.3C1443.3,475.3 1447.9,475.5 1452.4,475.5C1457.0,475.5 1461.5,475.4 1466.0,475.4C1470.6,475.4 1475.2,475.5 1479.7,475.5C1484.2,475.6 1488.8,475.6 1493.3,475.6C1497.9,475.6 1502.5,475.5 1507.0,475.5C1511.5,475.5 1516.1,475.5 1520.7,475.5C1525.2,475.5 1529.8,475.5 1534.3,475.5C1538.8,475.5 1543.4,475.3 1548.0,475.3C1552.5,475.3 1557.0,475.4 1561.6,475.5C1566.1,475.5 1570.7,475.6 1575.2,475.6C1579.8,475.6 1584.4,475.5 1588.9,475.5C1593.5,475.5 1598.0,475.5 1602.5,475.5C1607.1,475.5 1611.7,475.5 1616.2,475.5C1620.8,475.5 1625.3,475.4 1629.8,475.4C1634.4,475.4 1639.0,475.6 1643.5,475.6C1648.0,475.6 1652.6,475.6 1657.2,475.5C1661.7,475.5 1666.3,475.2 1670.8,475.2C1675.4,475.2 1679.9,475.5 1684.5,475.5C1689.0,475.5 1693.5,475.4 1698.1,475.4C1702.6,475.4 1707.2,475.5 1711.8,475.5C1716.3,475.5 1720.9,475.3 1725.4,475.3C1730.0,475.3 1734.5,475.6 1739.1,475.6C1743.6,475.6 1748.2,475.3 1752.7,475.3C1757.2,475.3 1761.8,475.4 1766.3,475.4C1770.9,475.4 1775.5,475.5 1780.0,475.5C1784.5,475.5 1789.1,475.4 1793.7,475.4C1798.2,475.3 1802.8,475.2 1807.3,475.2C1811.9,475.2 1816.4,475.2 1821.0,475.2C1825.5,475.2 1830.0,475.4 1834.6,475.4C1839.1,475.5 1843.7,475.5 1848.2,475.5C1852.8,475.5 1857.4,475.3 1861.9,475.3C1866.5,475.3 1871.0,475.5 1875.6,475.5C1880.1,475.5 1884.7,475.3 1889.2,475.3C1893.8,475.3 1898.3,475.4 1902.8,475.4C1907.4,475.4 1912.0,475.4 1916.5,475.3" fill="none" stroke="#4ab0a8" stroke-width="1.0919999999999999" stroke-opacity="0.92" stroke-linejoin="round"/><path d="M1097.5,488.0C1102.0,484.2 1106.6,476.7 1111.2,476.5C1115.7,476.3 1120.2,476.3 1124.8,476.3C1129.3,476.3 1133.9,476.7 1138.5,476.7C1143.0,476.7 1147.5,476.4 1152.1,476.4C1156.6,476.4 1161.2,476.6 1165.8,476.6C1170.3,476.6 1174.9,476.4 1179.4,476.4C1184.0,476.4 1188.5,476.4 1193.0,476.4C1197.6,476.5 1202.2,476.5 1206.7,476.6C1211.2,476.6 1215.8,476.7 1220.3,476.7C1224.9,476.7 1229.5,476.5 1234.0,476.4C1238.5,476.4 1243.1,476.4 1247.7,476.4C1252.2,476.4 1256.8,476.3 1261.3,476.3C1265.8,476.3 1270.4,476.5 1275.0,476.5C1279.5,476.5 1284.0,476.5 1288.6,476.4C1293.1,476.4 1297.7,476.3 1302.2,476.3C1306.8,476.3 1311.4,476.3 1315.9,476.4C1320.5,476.4 1325.0,476.5 1329.5,476.5C1334.1,476.6 1338.7,476.6 1343.2,476.6C1347.8,476.6 1352.3,476.6 1356.8,476.6C1361.4,476.6 1366.0,476.6 1370.5,476.6C1375.0,476.6 1379.6,476.5 1384.2,476.4C1388.7,476.4 1393.2,476.4 1397.8,476.4C1402.3,476.4 1406.9,476.6 1411.5,476.6C1416.0,476.6 1420.5,476.5 1425.1,476.5C1429.6,476.5 1434.2,476.5 1438.8,476.5C1443.3,476.5 1447.9,476.3 1452.4,476.3C1457.0,476.3 1461.5,476.3 1466.0,476.3C1470.6,476.4 1475.2,476.6 1479.7,476.6C1484.2,476.6 1488.8,476.4 1493.3,476.4C1497.9,476.4 1502.5,476.4 1507.0,476.5C1511.5,476.5 1516.1,476.6 1520.7,476.6C1525.2,476.6 1529.8,476.5 1534.3,476.5C1538.8,476.5 1543.4,476.6 1548.0,476.6C1552.5,476.6 1557.0,476.3 1561.6,476.3C1566.1,476.3 1570.7,476.5 1575.2,476.5C1579.8,476.5 1584.4,476.4 1588.9,476.4C1593.5,476.4 1598.0,476.6 1602.5,476.6C1607.1,476.6 1611.7,476.4 1616.2,476.4C1620.8,476.4 1625.3,476.7 1629.8,476.7C1634.4,476.7 1639.0,476.5 1643.5,476.4C1648.0,476.4 1652.6,476.4 1657.2,476.4C1661.7,476.4 1666.3,476.5 1670.8,476.5C1675.4,476.5 1679.9,476.4 1684.5,476.4C1689.0,476.4 1693.5,476.6 1698.1,476.6C1702.6,476.6 1707.2,476.3 1711.8,476.3C1716.3,476.3 1720.9,476.5 1725.4,476.5C1730.0,476.6 1734.5,476.6 1739.1,476.6C1743.6,476.6 1748.2,476.4 1752.7,476.4C1757.2,476.4 1761.8,476.4 1766.3,476.4C1770.9,476.4 1775.5,476.6 1780.0,476.6C1784.5,476.6 1789.1,476.6 1793.7,476.5C1798.2,476.5 1802.8,476.4 1807.3,476.4C1811.9,476.4 1816.4,476.7 1821.0,476.7C1825.5,476.7 1830.0,476.5 1834.6,476.5C1839.1,476.5 1843.7,476.5 1848.2,476.5C1852.8,476.5 1857.4,476.4 1861.9,476.4C1866.5,476.4 1871.0,476.6 1875.6,476.6C1880.1,476.6 1884.7,476.5 1889.2,476.5C1893.8,476.5 1898.3,476.6 1902.8,476.6C1907.4,476.6 1912.0,476.5 1916.5,476.4" fill="none" stroke="#2fa0a8" stroke-width="1.0919999999999999" stroke-opacity="0.92" stroke-linejoin="round"/><path d="M1097.5,488.0C1102.0,485.5 1106.6,482.2 1111.2,480.5C1115.7,478.8 1120.2,477.7 1124.8,477.7C1129.3,477.7 1133.9,477.7 1138.5,477.7C1143.0,477.7 1147.5,477.6 1152.1,477.6C1156.6,477.5 1161.2,477.5 1165.8,477.5C1170.3,477.4 1174.9,477.4 1179.4,477.4C1184.0,477.4 1188.5,477.5 1193.0,477.5C1197.6,477.5 1202.2,477.4 1206.7,477.4C1211.2,477.4 1215.8,477.4 1220.3,477.5C1224.9,477.5 1229.5,477.6 1234.0,477.6C1238.5,477.6 1243.1,477.6 1247.7,477.6C1252.2,477.6 1256.8,477.7 1261.3,477.7C1265.8,477.7 1270.4,477.5 1275.0,477.4C1279.5,477.4 1284.0,477.4 1288.6,477.4C1293.1,477.4 1297.7,477.4 1302.2,477.5C1306.8,477.5 1311.4,477.6 1315.9,477.6C1320.5,477.6 1325.0,477.5 1329.5,477.5C1334.1,477.5 1338.7,477.7 1343.2,477.7C1347.8,477.7 1352.3,477.6 1356.8,477.6C1361.4,477.6 1366.0,477.8 1370.5,477.8C1375.0,477.8 1379.6,477.5 1384.2,477.5C1388.7,477.5 1393.2,477.8 1397.8,477.8C1402.3,477.8 1406.9,477.5 1411.5,477.5C1416.0,477.5 1420.5,477.7 1425.1,477.7C1429.6,477.7 1434.2,477.7 1438.8,477.7C1443.3,477.7 1447.9,477.5 1452.4,477.5C1457.0,477.5 1461.5,477.5 1466.0,477.5C1470.6,477.5 1475.2,477.4 1479.7,477.4C1484.2,477.4 1488.8,477.7 1493.3,477.7C1497.9,477.7 1502.5,477.6 1507.0,477.6C1511.5,477.6 1516.1,477.7 1520.7,477.7C1525.2,477.7 1529.8,477.4 1534.3,477.4C1538.8,477.4 1543.4,477.4 1548.0,477.4C1552.5,477.4 1557.0,477.7 1561.6,477.7C1566.1,477.7 1570.7,477.5 1575.2,477.5C1579.8,477.5 1584.4,477.8 1588.9,477.8C1593.5,477.8 1598.0,477.7 1602.5,477.7C1607.1,477.6 1611.7,477.5 1616.2,477.5C1620.8,477.5 1625.3,477.7 1629.8,477.7C1634.4,477.7 1639.0,477.7 1643.5,477.7C1648.0,477.7 1652.6,477.6 1657.2,477.6C1661.7,477.6 1666.3,477.8 1670.8,477.8C1675.4,477.8 1679.9,477.8 1684.5,477.8C1689.0,477.7 1693.5,477.7 1698.1,477.7C1702.6,477.7 1707.2,477.7 1711.8,477.7C1716.3,477.7 1720.9,477.7 1725.4,477.7C1730.0,477.7 1734.5,477.6 1739.1,477.6C1743.6,477.6 1748.2,477.5 1752.7,477.5C1757.2,477.5 1761.8,477.6 1766.3,477.6C1770.9,477.6 1775.5,477.6 1780.0,477.6C1784.5,477.5 1789.1,477.5 1793.7,477.5C1798.2,477.5 1802.8,477.6 1807.3,477.7C1811.9,477.7 1816.4,477.7 1821.0,477.7C1825.5,477.7 1830.0,477.5 1834.6,477.5C1839.1,477.4 1843.7,477.4 1848.2,477.4C1852.8,477.4 1857.4,477.6 1861.9,477.6C1866.5,477.6 1871.0,477.6 1875.6,477.6C1880.1,477.6 1884.7,477.4 1889.2,477.4C1893.8,477.4 1898.3,477.7 1902.8,477.7C1907.4,477.7 1912.0,477.5 1916.5,477.5" fill="none" stroke="#2898b8" stroke-width="1.17" stroke-opacity="0.92" stroke-linejoin="round"/><path d="M1097.5,488.0C1102.0,485.8 1106.6,482.9 1111.2,481.4C1115.7,479.9 1120.2,479.2 1124.8,478.9C1129.3,478.6 1133.9,478.6 1138.5,478.6C1143.0,478.6 1147.5,479.0 1152.1,479.0C1156.6,479.0 1161.2,478.9 1165.8,478.9C1170.3,478.9 1174.9,478.9 1179.4,478.9C1184.0,478.9 1188.5,478.9 1193.0,478.9C1197.6,478.9 1202.2,478.7 1206.7,478.7C1211.2,478.7 1215.8,478.9 1220.3,478.9C1224.9,478.9 1229.5,478.9 1234.0,478.9C1238.5,478.8 1243.1,478.7 1247.7,478.7C1252.2,478.7 1256.8,478.9 1261.3,478.9C1265.8,478.9 1270.4,478.8 1275.0,478.8C1279.5,478.8 1284.0,478.9 1288.6,478.9C1293.1,478.9 1297.7,478.9 1302.2,478.9C1306.8,478.9 1311.4,478.9 1315.9,478.9C1320.5,478.8 1325.0,478.8 1329.5,478.8C1334.1,478.8 1338.7,479.0 1343.2,479.0C1347.8,479.0 1352.3,478.7 1356.8,478.7C1361.4,478.7 1366.0,478.7 1370.5,478.7C1375.0,478.7 1379.6,478.9 1384.2,478.9C1388.7,478.9 1393.2,478.9 1397.8,478.9C1402.3,478.9 1406.9,479.0 1411.5,479.0C1416.0,479.0 1420.5,478.9 1425.1,478.9C1429.6,478.9 1434.2,478.8 1438.8,478.8C1443.3,478.8 1447.9,479.0 1452.4,479.0C1457.0,479.0 1461.5,478.7 1466.0,478.7C1470.6,478.7 1475.2,478.7 1479.7,478.7C1484.2,478.7 1488.8,479.0 1493.3,479.0C1497.9,479.0 1502.5,478.9 1507.0,478.9C1511.5,478.9 1516.1,478.9 1520.7,478.9C1525.2,478.8 1529.8,478.8 1534.3,478.8C1538.8,478.8 1543.4,478.6 1548.0,478.6C1552.5,478.6 1557.0,478.8 1561.6,478.8C1566.1,478.8 1570.7,478.7 1575.2,478.7C1579.8,478.7 1584.4,478.7 1588.9,478.7C1593.5,478.7 1598.0,478.8 1602.5,478.8C1607.1,478.8 1611.7,478.6 1616.2,478.6C1620.8,478.6 1625.3,478.9 1629.8,478.9C1634.4,478.9 1639.0,478.7 1643.5,478.7C1648.0,478.6 1652.6,478.6 1657.2,478.6C1661.7,478.6 1666.3,478.8 1670.8,478.8C1675.4,478.8 1679.9,478.7 1684.5,478.7C1689.0,478.7 1693.5,478.7 1698.1,478.7C1702.6,478.7 1707.2,478.9 1711.8,478.9C1716.3,478.9 1720.9,478.9 1725.4,478.9C1730.0,478.9 1734.5,478.9 1739.1,478.9C1743.6,479.0 1748.2,479.0 1752.7,479.0C1757.2,479.0 1761.8,478.7 1766.3,478.7C1770.9,478.7 1775.5,478.8 1780.0,478.8C1784.5,478.8 1789.1,478.8 1793.7,478.7C1798.2,478.7 1802.8,478.7 1807.3,478.7C1811.9,478.7 1816.4,478.7 1821.0,478.7C1825.5,478.7 1830.0,478.7 1834.6,478.7C1839.1,478.8 1843.7,478.8 1848.2,478.8C1852.8,478.8 1857.4,478.8 1861.9,478.9C1866.5,478.9 1871.0,479.0 1875.6,479.0C1880.1,479.0 1884.7,479.0 1889.2,479.0C1893.8,478.9 1898.3,478.6 1902.8,478.6C1907.4,478.6 1912.0,478.7 1916.5,478.7" fill="none" stroke="#22b8d8" stroke-width="1.2480000000000002" stroke-opacity="0.92" stroke-linejoin="round"/><path d="M1097.5,488.0C1102.0,485.3 1106.6,480.0 1111.2,480.0C1115.7,480.0 1120.2,480.2 1124.8,480.2C1129.3,480.2 1133.9,480.1 1138.5,480.1C1143.0,480.0 1147.5,479.8 1152.1,479.8C1156.6,479.8 1161.2,480.0 1165.8,480.0C1170.3,480.0 1174.9,479.9 1179.4,479.9C1184.0,479.8 1188.5,479.8 1193.0,479.8C1197.6,479.8 1202.2,480.1 1206.7,480.1C1211.2,480.2 1215.8,480.2 1220.3,480.2C1224.9,480.2 1229.5,480.0 1234.0,480.0C1238.5,480.0 1243.1,480.1 1247.7,480.1C1252.2,480.1 1256.8,479.9 1261.3,479.9C1265.8,479.8 1270.4,479.8 1275.0,479.8C1279.5,479.8 1284.0,479.9 1288.6,479.9C1293.1,479.9 1297.7,479.8 1302.2,479.8C1306.8,479.8 1311.4,480.1 1315.9,480.1C1320.5,480.1 1325.0,479.9 1329.5,479.9C1334.1,479.9 1338.7,480.0 1343.2,480.0C1347.8,480.0 1352.3,479.8 1356.8,479.8C1361.4,479.8 1366.0,479.9 1370.5,479.9C1375.0,479.9 1379.6,479.9 1384.2,479.9C1388.7,480.0 1393.2,480.0 1397.8,480.0C1402.3,480.0 1406.9,479.9 1411.5,479.9C1416.0,479.9 1420.5,480.0 1425.1,480.0C1429.6,480.0 1434.2,480.0 1438.8,480.0C1443.3,480.0 1447.9,479.9 1452.4,479.9C1457.0,479.9 1461.5,480.0 1466.0,480.0C1470.6,480.0 1475.2,479.8 1479.7,479.8C1484.2,479.8 1488.8,480.0 1493.3,480.1C1497.9,480.1 1502.5,480.1 1507.0,480.1C1511.5,480.1 1516.1,480.2 1520.7,480.2C1525.2,480.2 1529.8,480.2 1534.3,480.2C1538.8,480.1 1543.4,480.0 1548.0,480.0C1552.5,480.0 1557.0,480.2 1561.6,480.2C1566.1,480.2 1570.7,480.1 1575.2,480.1C1579.8,480.1 1584.4,480.1 1588.9,480.1C1593.5,480.0 1598.0,479.8 1602.5,479.8C1607.1,479.8 1611.7,479.8 1616.2,479.8C1620.8,479.8 1625.3,479.8 1629.8,479.9C1634.4,480.0 1639.0,480.2 1643.5,480.2C1648.0,480.2 1652.6,480.2 1657.2,480.2C1661.7,480.2 1666.3,480.2 1670.8,480.1C1675.4,480.1 1679.9,480.0 1684.5,480.0C1689.0,480.0 1693.5,479.9 1698.1,479.9C1702.6,479.9 1707.2,479.9 1711.8,479.9C1716.3,480.0 1720.9,480.2 1725.4,480.2C1730.0,480.2 1734.5,479.9 1739.1,479.9C1743.6,479.9 1748.2,480.2 1752.7,480.2C1757.2,480.2 1761.8,480.1 1766.3,480.0C1770.9,480.0 1775.5,480.0 1780.0,480.0C1784.5,480.0 1789.1,479.9 1793.7,479.9C1798.2,479.9 1802.8,479.9 1807.3,479.9C1811.9,479.9 1816.4,479.9 1821.0,479.9C1825.5,479.9 1830.0,480.1 1834.6,480.1C1839.1,480.1 1843.7,479.8 1848.2,479.8C1852.8,479.8 1857.4,479.9 1861.9,479.9C1866.5,480.0 1871.0,480.1 1875.6,480.1C1880.1,480.1 1884.7,479.9 1889.2,479.9C1893.8,479.9 1898.3,479.9 1902.8,479.9C1907.4,479.9 1912.0,480.1 1916.5,480.2" fill="none" stroke="#1f9ec0" stroke-width="1.17" stroke-opacity="0.92" stroke-linejoin="round"/><path d="M1097.5,488.0C1102.0,486.3 1106.6,484.1 1111.2,482.9C1115.7,481.8 1120.2,481.1 1124.8,481.0C1129.3,480.9 1133.9,480.9 1138.5,480.9C1143.0,480.9 1147.5,481.0 1152.1,481.1C1156.6,481.1 1161.2,481.1 1165.8,481.1C1170.3,481.1 1174.9,481.0 1179.4,481.0C1184.0,481.0 1188.5,481.0 1193.0,481.0C1197.6,481.1 1202.2,481.1 1206.7,481.1C1211.2,481.1 1215.8,481.0 1220.3,481.0C1224.9,481.0 1229.5,481.0 1234.0,481.0C1238.5,481.1 1243.1,481.1 1247.7,481.1C1252.2,481.1 1256.8,481.1 1261.3,481.1C1265.8,481.1 1270.4,481.2 1275.0,481.2C1279.5,481.2 1284.0,481.2 1288.6,481.2C1293.1,481.2 1297.7,481.2 1302.2,481.2C1306.8,481.2 1311.4,481.2 1315.9,481.1C1320.5,481.1 1325.0,481.0 1329.5,481.0C1334.1,481.0 1338.7,481.2 1343.2,481.2C1347.8,481.2 1352.3,481.2 1356.8,481.2C1361.4,481.2 1366.0,481.1 1370.5,481.0C1375.0,481.0 1379.6,481.0 1384.2,481.0C1388.7,481.0 1393.2,481.1 1397.8,481.1C1402.3,481.1 1406.9,481.0 1411.5,481.0C1416.0,481.0 1420.5,481.0 1425.1,481.0C1429.6,481.0 1434.2,481.0 1438.8,481.0C1443.3,481.0 1447.9,481.1 1452.4,481.1C1457.0,481.1 1461.5,480.9 1466.0,480.9C1470.6,480.9 1475.2,481.0 1479.7,481.1C1484.2,481.2 1488.8,481.3 1493.3,481.3C1497.9,481.3 1502.5,480.9 1507.0,480.9C1511.5,480.9 1516.1,481.2 1520.7,481.2C1525.2,481.2 1529.8,481.2 1534.3,481.2C1538.8,481.2 1543.4,481.3 1548.0,481.3C1552.5,481.3 1557.0,481.0 1561.6,481.0C1566.1,481.0 1570.7,481.1 1575.2,481.1C1579.8,481.1 1584.4,480.9 1588.9,480.9C1593.5,480.9 1598.0,480.9 1602.5,481.0C1607.1,481.0 1611.7,481.1 1616.2,481.1C1620.8,481.1 1625.3,481.0 1629.8,481.0C1634.4,480.9 1639.0,480.9 1643.5,480.9C1648.0,480.9 1652.6,481.2 1657.2,481.2C1661.7,481.2 1666.3,481.1 1670.8,481.1C1675.4,481.1 1679.9,481.2 1684.5,481.2C1689.0,481.2 1693.5,481.1 1698.1,481.1C1702.6,481.1 1707.2,481.3 1711.8,481.3C1716.3,481.3 1720.9,481.2 1725.4,481.1C1730.0,481.1 1734.5,481.1 1739.1,481.1C1743.6,481.1 1748.2,481.3 1752.7,481.3C1757.2,481.3 1761.8,481.2 1766.3,481.1C1770.9,481.1 1775.5,481.0 1780.0,481.0C1784.5,481.0 1789.1,481.0 1793.7,481.0C1798.2,481.1 1802.8,481.2 1807.3,481.2C1811.9,481.2 1816.4,481.2 1821.0,481.2C1825.5,481.2 1830.0,481.1 1834.6,481.1C1839.1,481.1 1843.7,481.2 1848.2,481.2C1852.8,481.2 1857.4,481.1 1861.9,481.0C1866.5,481.0 1871.0,481.0 1875.6,481.0C1880.1,481.0 1884.7,480.9 1889.2,480.9C1893.8,480.9 1898.3,481.2 1902.8,481.2C1907.4,481.2 1912.0,481.1 1916.5,481.1" fill="none" stroke="#2a8fb0" stroke-width="1.014" stroke-opacity="0.92" stroke-linejoin="round"/><path d="M1097.5,488.0C1102.0,486.6 1106.6,484.9 1111.2,483.9C1115.7,482.9 1120.2,482.3 1124.8,482.3C1129.3,482.2 1133.9,482.2 1138.5,482.2C1143.0,482.2 1147.5,482.3 1152.1,482.3C1156.6,482.3 1161.2,482.3 1165.8,482.3C1170.3,482.3 1174.9,482.2 1179.4,482.2C1184.0,482.2 1188.5,482.2 1193.0,482.2C1197.6,482.2 1202.2,482.2 1206.7,482.2C1211.2,482.3 1215.8,482.4 1220.3,482.4C1224.9,482.4 1229.5,482.4 1234.0,482.4C1238.5,482.4 1243.1,482.4 1247.7,482.4C1252.2,482.3 1256.8,482.2 1261.3,482.2C1265.8,482.2 1270.4,482.3 1275.0,482.3C1279.5,482.3 1284.0,482.4 1288.6,482.4C1293.1,482.4 1297.7,482.4 1302.2,482.4C1306.8,482.4 1311.4,482.2 1315.9,482.2C1320.5,482.2 1325.0,482.4 1329.5,482.4C1334.1,482.4 1338.7,482.4 1343.2,482.4C1347.8,482.4 1352.3,482.3 1356.8,482.3C1361.4,482.3 1366.0,482.4 1370.5,482.4C1375.0,482.4 1379.6,482.2 1384.2,482.2C1388.7,482.2 1393.2,482.2 1397.8,482.2C1402.3,482.2 1406.9,482.4 1411.5,482.4C1416.0,482.4 1420.5,482.3 1425.1,482.3C1429.6,482.3 1434.2,482.3 1438.8,482.3C1443.3,482.4 1447.9,482.3 1452.4,482.4C1457.0,482.4 1461.5,482.4 1466.0,482.4C1470.6,482.4 1475.2,482.2 1479.7,482.2C1484.2,482.2 1488.8,482.2 1493.3,482.3C1497.9,482.3 1502.5,482.4 1507.0,482.4C1511.5,482.4 1516.1,482.3 1520.7,482.3C1525.2,482.2 1529.8,482.2 1534.3,482.2C1538.8,482.2 1543.4,482.2 1548.0,482.2C1552.5,482.2 1557.0,482.3 1561.6,482.3C1566.1,482.3 1570.7,482.2 1575.2,482.2C1579.8,482.2 1584.4,482.3 1588.9,482.3C1593.5,482.3 1598.0,482.3 1602.5,482.3C1607.1,482.3 1611.7,482.2 1616.2,482.2C1620.8,482.2 1625.3,482.2 1629.8,482.2C1634.4,482.2 1639.0,482.4 1643.5,482.4C1648.0,482.4 1652.6,482.3 1657.2,482.3C1661.7,482.3 1666.3,482.3 1670.8,482.3C1675.4,482.3 1679.9,482.3 1684.5,482.3C1689.0,482.3 1693.5,482.4 1698.1,482.4C1702.6,482.4 1707.2,482.3 1711.8,482.3C1716.3,482.3 1720.9,482.4 1725.4,482.4C1730.0,482.4 1734.5,482.2 1739.1,482.2C1743.6,482.2 1748.2,482.2 1752.7,482.3C1757.2,482.3 1761.8,482.4 1766.3,482.4C1770.9,482.4 1775.5,482.3 1780.0,482.3C1784.5,482.3 1789.1,482.4 1793.7,482.4C1798.2,482.4 1802.8,482.3 1807.3,482.3C1811.9,482.3 1816.4,482.4 1821.0,482.4C1825.5,482.4 1830.0,482.4 1834.6,482.4C1839.1,482.3 1843.7,482.2 1848.2,482.2C1852.8,482.2 1857.4,482.2 1861.9,482.2C1866.5,482.2 1871.0,482.2 1875.6,482.2C1880.1,482.2 1884.7,482.2 1889.2,482.3C1893.8,482.3 1898.3,482.4 1902.8,482.4C1907.4,482.4 1912.0,482.4 1916.5,482.3" fill="none" stroke="#f0a020" stroke-width="1.4040000000000001" stroke-opacity="0.92" stroke-linejoin="round"/><path d="M1097.5,488.0C1102.0,486.5 1106.6,483.5 1111.2,483.5C1115.7,483.5 1120.2,483.7 1124.8,483.7C1129.3,483.7 1133.9,483.5 1138.5,483.5C1143.0,483.5 1147.5,483.5 1152.1,483.5C1156.6,483.5 1161.2,483.5 1165.8,483.5C1170.3,483.5 1174.9,483.5 1179.4,483.5C1184.0,483.5 1188.5,483.5 1193.0,483.6C1197.6,483.6 1202.2,483.6 1206.7,483.7C1211.2,483.7 1215.8,483.7 1220.3,483.7C1224.9,483.7 1229.5,483.6 1234.0,483.6C1238.5,483.6 1243.1,483.7 1247.7,483.7C1252.2,483.7 1256.8,483.6 1261.3,483.5C1265.8,483.5 1270.4,483.5 1275.0,483.5C1279.5,483.5 1284.0,483.7 1288.6,483.7C1293.1,483.7 1297.7,483.7 1302.2,483.7C1306.8,483.7 1311.4,483.6 1315.9,483.6C1320.5,483.5 1325.0,483.5 1329.5,483.5C1334.1,483.5 1338.7,483.6 1343.2,483.6C1347.8,483.6 1352.3,483.6 1356.8,483.6C1361.4,483.6 1366.0,483.6 1370.5,483.6C1375.0,483.6 1379.6,483.6 1384.2,483.6C1388.7,483.6 1393.2,483.6 1397.8,483.6C1402.3,483.7 1406.9,483.7 1411.5,483.7C1416.0,483.7 1420.5,483.6 1425.1,483.6C1429.6,483.6 1434.2,483.6 1438.8,483.5C1443.3,483.5 1447.9,483.5 1452.4,483.5C1457.0,483.5 1461.5,483.6 1466.0,483.6C1470.6,483.6 1475.2,483.5 1479.7,483.5C1484.2,483.5 1488.8,483.5 1493.3,483.5C1497.9,483.5 1502.5,483.5 1507.0,483.5C1511.5,483.5 1516.1,483.5 1520.7,483.5C1525.2,483.6 1529.8,483.7 1534.3,483.7C1538.8,483.7 1543.4,483.5 1548.0,483.5C1552.5,483.5 1557.0,483.7 1561.6,483.7C1566.1,483.7 1570.7,483.5 1575.2,483.5C1579.8,483.5 1584.4,483.6 1588.9,483.6C1593.5,483.6 1598.0,483.5 1602.5,483.5C1607.1,483.5 1611.7,483.6 1616.2,483.7C1620.8,483.7 1625.3,483.7 1629.8,483.7C1634.4,483.7 1639.0,483.6 1643.5,483.6C1648.0,483.6 1652.6,483.6 1657.2,483.6C1661.7,483.6 1666.3,483.6 1670.8,483.6C1675.4,483.6 1679.9,483.6 1684.5,483.6C1689.0,483.6 1693.5,483.6 1698.1,483.6C1702.6,483.6 1707.2,483.6 1711.8,483.6C1716.3,483.6 1720.9,483.7 1725.4,483.7C1730.0,483.7 1734.5,483.5 1739.1,483.5C1743.6,483.5 1748.2,483.7 1752.7,483.7C1757.2,483.7 1761.8,483.7 1766.3,483.7C1770.9,483.7 1775.5,483.6 1780.0,483.6C1784.5,483.6 1789.1,483.7 1793.7,483.7C1798.2,483.7 1802.8,483.7 1807.3,483.7C1811.9,483.7 1816.4,483.5 1821.0,483.5C1825.5,483.5 1830.0,483.5 1834.6,483.5C1839.1,483.5 1843.7,483.5 1848.2,483.5C1852.8,483.5 1857.4,483.5 1861.9,483.6C1866.5,483.6 1871.0,483.6 1875.6,483.6C1880.1,483.6 1884.7,483.7 1889.2,483.7C1893.8,483.7 1898.3,483.7 1902.8,483.7C1907.4,483.7 1912.0,483.5 1916.5,483.5" fill="none" stroke="#b89a78" stroke-width="1.17" stroke-opacity="0.92" stroke-linejoin="round"/><path d="M1097.5,488.0C1102.0,487.3 1106.6,486.3 1111.2,485.8C1115.7,485.2 1120.2,484.8 1124.8,484.8C1129.3,484.8 1133.9,484.9 1138.5,484.9C1143.0,484.9 1147.5,484.8 1152.1,484.8C1156.6,484.8 1161.2,484.8 1165.8,484.8C1170.3,484.8 1174.9,484.8 1179.4,484.8C1184.0,484.8 1188.5,484.7 1193.0,484.7C1197.6,484.7 1202.2,484.9 1206.7,484.9C1211.2,484.9 1215.8,484.8 1220.3,484.8C1224.9,484.8 1229.5,484.9 1234.0,484.9C1238.5,484.9 1243.1,484.8 1247.7,484.8C1252.2,484.8 1256.8,484.9 1261.3,484.9C1265.8,484.9 1270.4,484.8 1275.0,484.8C1279.5,484.7 1284.0,484.7 1288.6,484.7C1293.1,484.7 1297.7,484.8 1302.2,484.9C1306.8,484.9 1311.4,484.9 1315.9,484.9C1320.5,484.9 1325.0,484.8 1329.5,484.8C1334.1,484.8 1338.7,484.9 1343.2,484.9C1347.8,484.9 1352.3,484.8 1356.8,484.8C1361.4,484.7 1366.0,484.7 1370.5,484.7C1375.0,484.7 1379.6,484.7 1384.2,484.7C1388.7,484.7 1393.2,484.8 1397.8,484.8C1402.3,484.9 1406.9,484.9 1411.5,484.9C1416.0,484.9 1420.5,484.7 1425.1,484.7C1429.6,484.7 1434.2,484.7 1438.8,484.7C1443.3,484.7 1447.9,484.7 1452.4,484.7C1457.0,484.7 1461.5,484.9 1466.0,484.9C1470.6,484.9 1475.2,484.9 1479.7,484.9C1484.2,484.9 1488.8,484.9 1493.3,484.8C1497.9,484.8 1502.5,484.8 1507.0,484.8C1511.5,484.8 1516.1,484.8 1520.7,484.8C1525.2,484.9 1529.8,484.9 1534.3,484.9C1538.8,484.9 1543.4,484.7 1548.0,484.7C1552.5,484.7 1557.0,484.9 1561.6,484.9C1566.1,484.9 1570.7,484.9 1575.2,484.9C1579.8,484.9 1584.4,484.8 1588.9,484.8C1593.5,484.8 1598.0,484.8 1602.5,484.8C1607.1,484.8 1611.7,484.8 1616.2,484.7C1620.8,484.7 1625.3,484.7 1629.8,484.7C1634.4,484.7 1639.0,484.8 1643.5,484.8C1648.0,484.8 1652.6,484.8 1657.2,484.8C1661.7,484.8 1666.3,484.7 1670.8,484.7C1675.4,484.7 1679.9,484.8 1684.5,484.8C1689.0,484.8 1693.5,484.7 1698.1,484.7C1702.6,484.7 1707.2,484.7 1711.8,484.7C1716.3,484.7 1720.9,484.9 1725.4,484.9C1730.0,484.9 1734.5,484.7 1739.1,484.7C1743.6,484.7 1748.2,484.7 1752.7,484.7C1757.2,484.7 1761.8,484.7 1766.3,484.7C1770.9,484.7 1775.5,484.8 1780.0,484.8C1784.5,484.8 1789.1,484.7 1793.7,484.7C1798.2,484.7 1802.8,484.8 1807.3,484.8C1811.9,484.8 1816.4,484.7 1821.0,484.7C1825.5,484.7 1830.0,484.8 1834.6,484.8C1839.1,484.8 1843.7,484.7 1848.2,484.7C1852.8,484.7 1857.4,484.9 1861.9,484.9C1866.5,484.9 1871.0,484.9 1875.6,484.8C1880.1,484.8 1884.7,484.7 1889.2,484.7C1893.8,484.7 1898.3,484.7 1902.8,484.7C1907.4,484.7 1912.0,484.8 1916.5,484.8" fill="none" stroke="#4ab8a0" stroke-width="1.17" stroke-opacity="0.92" stroke-linejoin="round"/><path d="M1097.5,488.0C1102.0,487.6 1106.6,487.0 1111.2,486.7C1115.7,486.3 1120.2,485.9 1124.8,485.9C1129.3,485.9 1133.9,485.9 1138.5,485.9C1143.0,485.9 1147.5,485.9 1152.1,485.9C1156.6,485.9 1161.2,486.0 1165.8,486.0C1170.3,486.0 1174.9,485.9 1179.4,485.9C1184.0,485.9 1188.5,485.9 1193.0,485.9C1197.6,486.0 1202.2,486.1 1206.7,486.1C1211.2,486.1 1215.8,486.0 1220.3,486.0C1224.9,486.0 1229.5,486.0 1234.0,486.0C1238.5,486.0 1243.1,486.1 1247.7,486.1C1252.2,486.1 1256.8,485.9 1261.3,485.9C1265.8,485.9 1270.4,485.9 1275.0,485.9C1279.5,485.9 1284.0,486.1 1288.6,486.1C1293.1,486.1 1297.7,486.0 1302.2,485.9C1306.8,485.9 1311.4,485.9 1315.9,485.9C1320.5,485.9 1325.0,486.0 1329.5,486.0C1334.1,486.1 1338.7,486.1 1343.2,486.1C1347.8,486.1 1352.3,486.1 1356.8,486.1C1361.4,486.1 1366.0,485.9 1370.5,485.9C1375.0,485.9 1379.6,485.9 1384.2,485.9C1388.7,485.9 1393.2,485.9 1397.8,485.9C1402.3,485.9 1406.9,486.1 1411.5,486.1C1416.0,486.1 1420.5,485.9 1425.1,485.9C1429.6,485.9 1434.2,486.0 1438.8,486.0C1443.3,486.0 1447.9,486.0 1452.4,486.0C1457.0,486.0 1461.5,486.1 1466.0,486.1C1470.6,486.1 1475.2,486.1 1479.7,486.1C1484.2,486.1 1488.8,486.0 1493.3,486.0C1497.9,486.0 1502.5,486.0 1507.0,486.0C1511.5,486.0 1516.1,486.0 1520.7,486.0C1525.2,486.0 1529.8,486.0 1534.3,486.0C1538.8,486.0 1543.4,486.1 1548.0,486.1C1552.5,486.1 1557.0,486.0 1561.6,486.0C1566.1,486.0 1570.7,486.1 1575.2,486.1C1579.8,486.1 1584.4,485.9 1588.9,485.9C1593.5,485.9 1598.0,486.1 1602.5,486.1C1607.1,486.1 1611.7,486.1 1616.2,486.1C1620.8,486.0 1625.3,485.9 1629.8,485.9C1634.4,485.9 1639.0,485.9 1643.5,485.9C1648.0,485.9 1652.6,485.9 1657.2,485.9C1661.7,486.0 1666.3,486.0 1670.8,486.0C1675.4,486.0 1679.9,486.0 1684.5,486.0C1689.0,486.0 1693.5,486.0 1698.1,486.0C1702.6,486.0 1707.2,486.1 1711.8,486.1C1716.3,486.1 1720.9,486.0 1725.4,486.0C1730.0,486.0 1734.5,486.1 1739.1,486.1C1743.6,486.1 1748.2,486.1 1752.7,486.1C1757.2,486.0 1761.8,486.0 1766.3,485.9C1770.9,485.9 1775.5,485.9 1780.0,485.9C1784.5,485.9 1789.1,486.1 1793.7,486.1C1798.2,486.1 1802.8,486.1 1807.3,486.1C1811.9,486.1 1816.4,486.1 1821.0,486.1C1825.5,486.1 1830.0,486.1 1834.6,486.0C1839.1,486.0 1843.7,486.0 1848.2,485.9C1852.8,485.9 1857.4,485.9 1861.9,485.9C1866.5,485.9 1871.0,485.9 1875.6,485.9C1880.1,485.9 1884.7,486.0 1889.2,486.0C1893.8,486.0 1898.3,486.1 1902.8,486.1C1907.4,486.1 1912.0,486.0 1916.5,486.0" fill="none" stroke="#2fb89a" stroke-width="1.17" stroke-opacity="0.92" stroke-linejoin="round"/><path d="M1097.5,488.0C1102.0,487.7 1106.6,487.2 1111.2,487.2C1115.7,487.1 1120.2,487.1 1124.8,487.1C1129.3,487.1 1133.9,487.3 1138.5,487.3C1143.0,487.3 1147.5,487.2 1152.1,487.2C1156.6,487.1 1161.2,487.1 1165.8,487.1C1170.3,487.1 1174.9,487.3 1179.4,487.3C1184.0,487.3 1188.5,487.1 1193.0,487.1C1197.6,487.1 1202.2,487.2 1206.7,487.2C1211.2,487.2 1215.8,487.2 1220.3,487.2C1224.9,487.2 1229.5,487.1 1234.0,487.1C1238.5,487.1 1243.1,487.2 1247.7,487.2C1252.2,487.2 1256.8,487.1 1261.3,487.1C1265.8,487.1 1270.4,487.2 1275.0,487.2C1279.5,487.2 1284.0,487.3 1288.6,487.3C1293.1,487.3 1297.7,487.2 1302.2,487.2C1306.8,487.2 1311.4,487.1 1315.9,487.1C1320.5,487.1 1325.0,487.1 1329.5,487.1C1334.1,487.2 1338.7,487.2 1343.2,487.2C1347.8,487.2 1352.3,487.1 1356.8,487.1C1361.4,487.1 1366.0,487.2 1370.5,487.2C1375.0,487.2 1379.6,487.1 1384.2,487.1C1388.7,487.1 1393.2,487.2 1397.8,487.2C1402.3,487.2 1406.9,487.2 1411.5,487.2C1416.0,487.2 1420.5,487.2 1425.1,487.2C1429.6,487.2 1434.2,487.2 1438.8,487.2C1443.3,487.2 1447.9,487.3 1452.4,487.3C1457.0,487.3 1461.5,487.2 1466.0,487.2C1470.6,487.2 1475.2,487.3 1479.7,487.3C1484.2,487.3 1488.8,487.1 1493.3,487.1C1497.9,487.1 1502.5,487.3 1507.0,487.3C1511.5,487.3 1516.1,487.3 1520.7,487.3C1525.2,487.3 1529.8,487.2 1534.3,487.2C1538.8,487.2 1543.4,487.2 1548.0,487.2C1552.5,487.3 1557.0,487.3 1561.6,487.3C1566.1,487.3 1570.7,487.3 1575.2,487.3C1579.8,487.3 1584.4,487.2 1588.9,487.2C1593.5,487.2 1598.0,487.2 1602.5,487.2C1607.1,487.2 1611.7,487.3 1616.2,487.3C1620.8,487.3 1625.3,487.2 1629.8,487.2C1634.4,487.2 1639.0,487.1 1643.5,487.1C1648.0,487.1 1652.6,487.1 1657.2,487.1C1661.7,487.1 1666.3,487.1 1670.8,487.1C1675.4,487.1 1679.9,487.1 1684.5,487.1C1689.0,487.1 1693.5,487.2 1698.1,487.2C1702.6,487.3 1707.2,487.3 1711.8,487.3C1716.3,487.3 1720.9,487.2 1725.4,487.2C1730.0,487.1 1734.5,487.1 1739.1,487.1C1743.6,487.1 1748.2,487.1 1752.7,487.1C1757.2,487.1 1761.8,487.1 1766.3,487.1C1770.9,487.1 1775.5,487.3 1780.0,487.3C1784.5,487.3 1789.1,487.1 1793.7,487.1C1798.2,487.1 1802.8,487.1 1807.3,487.2C1811.9,487.2 1816.4,487.3 1821.0,487.3C1825.5,487.3 1830.0,487.2 1834.6,487.2C1839.1,487.2 1843.7,487.2 1848.2,487.2C1852.8,487.2 1857.4,487.1 1861.9,487.1C1866.5,487.1 1871.0,487.2 1875.6,487.2C1880.1,487.2 1884.7,487.1 1889.2,487.1C1893.8,487.1 1898.3,487.3 1902.8,487.3C1907.4,487.3 1912.0,487.2 1916.5,487.2" fill="none" stroke="#7a9098" stroke-width="1.2480000000000002" stroke-opacity="0.92" stroke-linejoin="round"/><path d="M1097.5,488.0C1102.0,482.2 1106.6,474.9 1111.2,470.7C1115.7,466.5 1120.2,462.9 1124.8,462.9C1129.3,462.9 1133.9,463.0 1138.5,463.1C1143.0,463.1 1147.5,463.1 1152.1,463.1C1156.6,463.1 1161.2,463.1 1165.8,463.2C1170.3,463.3 1174.9,466.5 1179.4,466.5C1184.0,466.5 1188.5,466.3 1193.0,466.3C1197.6,466.3 1202.2,466.4 1206.7,466.4C1211.2,466.4 1215.8,466.4 1220.3,466.4C1224.9,466.4 1229.5,466.5 1234.0,466.5C1238.5,466.5 1243.1,466.5 1247.7,466.5C1252.2,466.5 1256.8,462.6 1261.3,462.6C1265.8,462.6 1270.4,463.3 1275.0,463.3C1279.5,463.3 1284.0,462.6 1288.6,462.6C1293.1,462.6 1297.7,462.6 1302.2,463.2C1306.8,463.9 1311.4,466.5 1315.9,466.5C1320.5,466.5 1325.0,466.4 1329.5,466.4C1334.1,466.4 1338.7,466.5 1343.2,466.5C1347.8,466.5 1352.3,466.5 1356.8,466.5C1361.4,466.4 1366.0,466.3 1370.5,466.3C1375.0,466.3 1379.6,466.5 1384.2,466.5C1388.7,466.5 1393.2,463.1 1397.8,463.1C1402.3,463.1 1406.9,463.3 1411.5,463.3C1416.0,463.3 1420.5,463.0 1425.1,462.8C1429.6,462.7 1434.2,462.3 1438.8,462.3C1443.3,462.3 1447.9,466.3 1452.4,466.3C1457.0,466.3 1461.5,466.3 1466.0,466.3C1470.6,466.3 1475.2,466.3 1479.7,466.3C1484.2,466.3 1488.8,466.3 1493.3,466.3C1497.9,466.3 1502.5,466.4 1507.0,466.4C1511.5,466.4 1516.1,466.4 1520.7,466.3C1525.2,466.3 1529.8,463.1 1534.3,463.1C1538.8,463.1 1543.4,463.2 1548.0,463.2C1552.5,463.3 1557.0,463.3 1561.6,463.3C1566.1,463.3 1570.7,462.7 1575.2,462.7C1579.8,462.7 1584.4,466.4 1588.9,466.4C1593.5,466.4 1598.0,466.4 1602.5,466.4C1607.1,466.4 1611.7,466.3 1616.2,466.3C1620.8,466.3 1625.3,466.5 1629.8,466.5C1634.4,466.5 1639.0,466.4 1643.5,466.3C1648.0,466.3 1652.6,466.3 1657.2,466.3C1661.7,466.2 1666.3,462.4 1670.8,462.4C1675.4,462.4 1679.9,463.1 1684.5,463.1C1689.0,463.1 1693.5,462.8 1698.1,462.8C1702.6,462.7 1707.2,462.6 1711.8,462.6C1716.3,462.6 1720.9,466.3 1725.4,466.3C1730.0,466.3 1734.5,466.3 1739.1,466.3C1743.6,466.4 1748.2,466.5 1752.7,466.5C1757.2,466.5 1761.8,466.5 1766.3,466.5C1770.9,466.5 1775.5,466.5 1780.0,466.4C1784.5,466.4 1789.1,466.4 1793.7,466.3C1798.2,466.2 1802.8,462.8 1807.3,462.8C1811.9,462.8 1816.4,462.9 1821.0,462.9C1825.5,463.0 1830.0,463.1 1834.6,463.1C1839.1,463.1 1843.7,462.9 1848.2,462.9C1852.8,462.9 1857.4,466.3 1861.9,466.3C1866.5,466.3 1871.0,466.3 1875.6,466.3C1880.1,466.3 1884.7,466.3 1889.2,466.3C1893.8,466.3 1898.3,466.5 1902.8,466.5C1907.4,466.5 1912.0,466.4 1916.5,466.3" fill="none" stroke="#1f6fe0" stroke-width="1.2" stroke-opacity="1" stroke-linejoin="round"/><path d="M1097.5,488.0C1102.0,482.2 1106.6,475.0 1111.2,470.7C1115.7,466.3 1120.2,461.9 1124.8,461.9C1129.3,461.9 1133.9,462.4 1138.5,462.4C1143.0,462.4 1147.5,462.1 1152.1,462.0C1156.6,461.9 1161.2,461.7 1165.8,461.7C1170.3,461.7 1174.9,466.0 1179.4,466.2C1184.0,466.3 1188.5,466.3 1193.0,466.3C1197.6,466.3 1202.2,466.1 1206.7,466.1C1211.2,466.1 1215.8,466.2 1220.3,466.2C1224.9,466.2 1229.5,466.1 1234.0,466.1C1238.5,466.1 1243.1,466.1 1247.7,466.1C1252.2,466.1 1256.8,461.3 1261.3,461.3C1265.8,461.3 1270.4,462.0 1275.0,462.0C1279.5,462.0 1284.0,461.6 1288.6,461.5C1293.1,461.5 1297.7,461.5 1302.2,461.5C1306.8,461.5 1311.4,466.0 1315.9,466.1C1320.5,466.3 1325.0,466.2 1329.5,466.3C1334.1,466.3 1338.7,466.3 1343.2,466.3C1347.8,466.3 1352.3,466.2 1356.8,466.2C1361.4,466.2 1366.0,466.2 1370.5,466.2C1375.0,466.3 1379.6,466.3 1384.2,466.3C1388.7,466.3 1393.2,461.5 1397.8,461.5C1402.3,461.5 1406.9,462.2 1411.5,462.2C1416.0,462.2 1420.5,462.2 1425.1,462.2C1429.6,462.2 1434.2,462.2 1438.8,462.2C1443.3,462.2 1447.9,466.3 1452.4,466.3C1457.0,466.3 1461.5,466.1 1466.0,466.1C1470.6,466.1 1475.2,466.1 1479.7,466.1C1484.2,466.1 1488.8,466.1 1493.3,466.1C1497.9,466.1 1502.5,466.1 1507.0,466.2C1511.5,466.2 1516.1,466.3 1520.7,466.3C1525.2,466.3 1529.8,461.7 1534.3,461.7C1538.8,461.7 1543.4,462.5 1548.0,462.5C1552.5,462.5 1557.0,461.3 1561.6,461.3C1566.1,461.3 1570.7,461.3 1575.2,461.5C1579.8,461.7 1584.4,466.3 1588.9,466.3C1593.5,466.3 1598.0,466.1 1602.5,466.1C1607.1,466.1 1611.7,466.1 1616.2,466.1C1620.8,466.1 1625.3,466.2 1629.8,466.2C1634.4,466.2 1639.0,466.1 1643.5,466.1C1648.0,466.1 1652.6,466.2 1657.2,466.2C1661.7,466.2 1666.3,462.3 1670.8,462.3C1675.4,462.3 1679.9,462.7 1684.5,462.7C1689.0,462.7 1693.5,462.7 1698.1,462.7C1702.6,462.7 1707.2,462.3 1711.8,462.3C1716.3,462.3 1720.9,466.0 1725.4,466.1C1730.0,466.2 1734.5,466.2 1739.1,466.2C1743.6,466.3 1748.2,466.3 1752.7,466.3C1757.2,466.3 1761.8,466.2 1766.3,466.2C1770.9,466.2 1775.5,466.2 1780.0,466.2C1784.5,466.2 1789.1,466.3 1793.7,466.3C1798.2,466.3 1802.8,462.2 1807.3,462.2C1811.9,462.1 1816.4,462.1 1821.0,462.1C1825.5,462.1 1830.0,462.2 1834.6,462.2C1839.1,462.2 1843.7,462.0 1848.2,462.0C1852.8,462.0 1857.4,466.1 1861.9,466.1C1866.5,466.2 1871.0,466.1 1875.6,466.2C1880.1,466.2 1884.7,466.2 1889.2,466.2C1893.8,466.2 1898.3,466.2 1902.8,466.2C1907.4,466.2 1912.0,466.2 1916.5,466.3" fill="none" stroke="#8a5fe0" stroke-width="1.3" stroke-opacity="1" stroke-linejoin="round"/><path d="M1097.5,488.0C1102.0,482.6 1106.6,475.4 1111.2,471.7C1115.7,468.1 1120.2,466.4 1124.8,465.9C1129.3,465.5 1133.9,465.5 1138.5,465.5C1143.0,465.5 1147.5,465.5 1152.1,465.5C1156.6,465.5 1161.2,465.5 1165.8,465.6C1170.3,465.7 1174.9,467.9 1179.4,467.9C1184.0,467.9 1188.5,467.9 1193.0,467.9C1197.6,467.9 1202.2,467.7 1206.7,467.7C1211.2,467.7 1215.8,467.8 1220.3,467.8C1224.9,467.8 1229.5,467.9 1234.0,467.9C1238.5,467.9 1243.1,467.9 1247.7,467.8C1252.2,467.8 1256.8,465.8 1261.3,465.6C1265.8,465.3 1270.4,465.3 1275.0,465.3C1279.5,465.3 1284.0,465.6 1288.6,465.6C1293.1,465.6 1297.7,465.2 1302.2,465.2C1306.8,465.2 1311.4,467.7 1315.9,467.7C1320.5,467.8 1325.0,467.8 1329.5,467.8C1334.1,467.8 1338.7,467.7 1343.2,467.7C1347.8,467.7 1352.3,467.8 1356.8,467.8C1361.4,467.9 1366.0,467.9 1370.5,467.9C1375.0,467.9 1379.6,467.9 1384.2,467.9C1388.7,467.8 1393.2,465.6 1397.8,465.6C1402.3,465.6 1406.9,465.8 1411.5,465.8C1416.0,465.8 1420.5,465.5 1425.1,465.4C1429.6,465.3 1434.2,465.3 1438.8,465.3C1443.3,465.3 1447.9,467.9 1452.4,467.9C1457.0,467.9 1461.5,467.9 1466.0,467.9C1470.6,467.9 1475.2,467.9 1479.7,467.9C1484.2,467.9 1488.8,467.9 1493.3,467.9C1497.9,467.9 1502.5,467.9 1507.0,467.9C1511.5,467.8 1516.1,467.9 1520.7,467.7C1525.2,467.5 1529.8,466.2 1534.3,465.8C1538.8,465.4 1543.4,465.4 1548.0,465.4C1552.5,465.4 1557.0,465.7 1561.6,465.7C1566.1,465.7 1570.7,465.4 1575.2,465.4C1579.8,465.4 1584.4,467.9 1588.9,467.9C1593.5,467.9 1598.0,467.9 1602.5,467.9C1607.1,467.9 1611.7,467.9 1616.2,467.9C1620.8,467.9 1625.3,467.9 1629.8,467.9C1634.4,467.9 1639.0,467.8 1643.5,467.8C1648.0,467.8 1652.6,467.8 1657.2,467.7C1661.7,467.6 1666.3,466.4 1670.8,466.0C1675.4,465.7 1679.9,465.6 1684.5,465.6C1689.0,465.6 1693.5,465.7 1698.1,465.7C1702.6,465.8 1707.2,465.7 1711.8,465.9C1716.3,466.2 1720.9,467.8 1725.4,467.8C1730.0,467.8 1734.5,467.7 1739.1,467.7C1743.6,467.7 1748.2,467.7 1752.7,467.7C1757.2,467.7 1761.8,467.7 1766.3,467.7C1770.9,467.8 1775.5,467.8 1780.0,467.8C1784.5,467.8 1789.1,467.8 1793.7,467.7C1798.2,467.5 1802.8,465.9 1807.3,465.6C1811.9,465.4 1816.4,465.4 1821.0,465.4C1825.5,465.4 1830.0,465.6 1834.6,465.6C1839.1,465.6 1843.7,465.4 1848.2,465.4C1852.8,465.4 1857.4,467.9 1861.9,467.9C1866.5,467.9 1871.0,467.7 1875.6,467.7C1880.1,467.7 1884.7,467.9 1889.2,467.9C1893.8,467.9 1898.3,467.7 1902.8,467.7C1907.4,467.7 1912.0,467.7 1916.5,467.7" fill="none" stroke="#f2a07a" stroke-width="1.1" stroke-opacity="1" stroke-linejoin="round"/><path d="M1097.5,488.0C1102.0,482.8 1106.6,475.9 1111.2,472.5C1115.7,469.0 1120.2,467.2 1124.8,467.2C1129.3,467.2 1133.9,467.2 1138.5,467.2C1143.0,467.2 1147.5,467.2 1152.1,467.1C1156.6,467.1 1161.2,466.9 1165.8,466.9C1170.3,466.9 1174.9,468.2 1179.4,468.5C1184.0,468.7 1188.5,468.7 1193.0,468.7C1197.6,468.7 1202.2,468.5 1206.7,468.5C1211.2,468.5 1215.8,468.7 1220.3,468.7C1224.9,468.7 1229.5,468.5 1234.0,468.5C1238.5,468.5 1243.1,468.7 1247.7,468.7C1252.2,468.7 1256.8,467.1 1261.3,467.0C1265.8,466.8 1270.4,466.9 1275.0,466.8C1279.5,466.8 1284.0,466.8 1288.6,466.8C1293.1,466.8 1297.7,466.8 1302.2,467.0C1306.8,467.2 1311.4,468.6 1315.9,468.6C1320.5,468.6 1325.0,468.6 1329.5,468.6C1334.1,468.6 1338.7,468.7 1343.2,468.7C1347.8,468.7 1352.3,468.7 1356.8,468.7C1361.4,468.7 1366.0,468.5 1370.5,468.5C1375.0,468.5 1379.6,468.5 1384.2,468.5C1388.7,468.5 1393.2,467.3 1397.8,467.1C1402.3,466.9 1406.9,466.9 1411.5,466.9C1416.0,466.9 1420.5,467.0 1425.1,467.0C1429.6,467.0 1434.2,466.7 1438.8,466.7C1443.3,466.7 1447.9,468.6 1452.4,468.6C1457.0,468.6 1461.5,468.5 1466.0,468.5C1470.6,468.5 1475.2,468.7 1479.7,468.7C1484.2,468.7 1488.8,468.7 1493.3,468.6C1497.9,468.6 1502.5,468.5 1507.0,468.5C1511.5,468.5 1516.1,468.6 1520.7,468.6C1525.2,468.6 1529.8,467.4 1534.3,467.1C1538.8,466.9 1543.4,466.9 1548.0,466.9C1552.5,466.9 1557.0,467.3 1561.6,467.3C1566.1,467.3 1570.7,466.9 1575.2,466.9C1579.8,466.9 1584.4,468.3 1588.9,468.5C1593.5,468.7 1598.0,468.7 1602.5,468.7C1607.1,468.7 1611.7,468.6 1616.2,468.6C1620.8,468.6 1625.3,468.7 1629.8,468.7C1634.4,468.7 1639.0,468.5 1643.5,468.5C1648.0,468.5 1652.6,468.6 1657.2,468.6C1661.7,468.6 1666.3,467.3 1670.8,467.1C1675.4,466.8 1679.9,466.9 1684.5,466.8C1689.0,466.8 1693.5,466.8 1698.1,466.8C1702.6,466.8 1707.2,466.8 1711.8,467.0C1716.3,467.1 1720.9,468.4 1725.4,468.5C1730.0,468.6 1734.5,468.6 1739.1,468.6C1743.6,468.6 1748.2,468.5 1752.7,468.5C1757.2,468.5 1761.8,468.5 1766.3,468.5C1770.9,468.5 1775.5,468.5 1780.0,468.5C1784.5,468.6 1789.1,468.6 1793.7,468.6C1798.2,468.6 1802.8,467.1 1807.3,466.9C1811.9,466.7 1816.4,466.7 1821.0,466.7C1825.5,466.7 1830.0,466.9 1834.6,467.0C1839.1,467.0 1843.7,467.0 1848.2,467.2C1852.8,467.5 1857.4,468.7 1861.9,468.7C1866.5,468.7 1871.0,468.6 1875.6,468.5C1880.1,468.5 1884.7,468.5 1889.2,468.5C1893.8,468.5 1898.3,468.6 1902.8,468.6C1907.4,468.7 1912.0,468.7 1916.5,468.7" fill="none" stroke="#2fa592" stroke-width="1.0" stroke-opacity="0.8" stroke-linejoin="round"/><path d="M1097.5,488.0C1102.0,478.1 1106.6,458.3 1111.2,458.3C1115.7,458.3 1120.2,458.3 1124.8,458.4C1129.3,458.4 1133.9,458.5 1138.5,458.5C1143.0,458.5 1147.5,458.4 1152.1,458.4C1156.6,458.4 1161.2,458.3 1165.8,458.3C1170.3,458.3 1174.9,458.5 1179.4,458.5C1184.0,458.5 1188.5,458.3 1193.0,458.3C1197.6,458.3 1202.2,458.4 1206.7,458.4C1211.2,458.4 1215.8,458.3 1220.3,458.3C1224.9,458.3 1229.5,458.5 1234.0,458.5C1238.5,458.5 1243.1,458.3 1247.7,458.3C1252.2,458.3 1256.8,458.3 1261.3,458.3C1265.8,458.4 1270.4,458.5 1275.0,458.5C1279.5,458.5 1284.0,458.3 1288.6,458.3C1293.1,458.3 1297.7,458.4 1302.2,458.4C1306.8,458.4 1311.4,458.3 1315.9,458.3C1320.5,458.3 1325.0,458.3 1329.5,458.4C1334.1,458.4 1338.7,458.4 1343.2,458.4C1347.8,458.4 1352.3,458.5 1356.8,458.5C1361.4,458.5 1366.0,458.5 1370.5,458.5C1375.0,458.5 1379.6,458.3 1384.2,458.3C1388.7,458.3 1393.2,458.5 1397.8,458.5C1402.3,458.5 1406.9,458.4 1411.5,458.4C1416.0,458.4 1420.5,458.3 1425.1,458.3C1429.6,458.3 1434.2,458.3 1438.8,458.3C1443.3,458.3 1447.9,458.3 1452.4,458.3C1457.0,458.4 1461.5,458.3 1466.0,458.4C1470.6,458.4 1475.2,458.5 1479.7,458.5C1484.2,458.5 1488.8,458.5 1493.3,458.5C1497.9,458.4 1502.5,458.3 1507.0,458.3C1511.5,458.3 1516.1,458.4 1520.7,458.4C1525.2,458.4 1529.8,458.3 1534.3,458.3C1538.8,458.3 1543.4,458.3 1548.0,458.3C1552.5,458.3 1557.0,458.5 1561.6,458.5C1566.1,458.5 1570.7,458.3 1575.2,458.3C1579.8,458.3 1584.4,458.4 1588.9,458.5C1593.5,458.5 1598.0,458.5 1602.5,458.5C1607.1,458.5 1611.7,458.3 1616.2,458.3C1620.8,458.3 1625.3,458.3 1629.8,458.3C1634.4,458.4 1639.0,458.5 1643.5,458.5C1648.0,458.5 1652.6,458.3 1657.2,458.3C1661.7,458.3 1666.3,458.4 1670.8,458.4C1675.4,458.4 1679.9,458.3 1684.5,458.3C1689.0,458.3 1693.5,458.5 1698.1,458.5C1702.6,458.5 1707.2,458.5 1711.8,458.5C1716.3,458.5 1720.9,458.5 1725.4,458.5C1730.0,458.5 1734.5,458.4 1739.1,458.3C1743.6,458.3 1748.2,458.3 1752.7,458.3C1757.2,458.3 1761.8,458.5 1766.3,458.5C1770.9,458.5 1775.5,458.3 1780.0,458.3C1784.5,458.3 1789.1,458.3 1793.7,458.3C1798.2,458.3 1802.8,458.3 1807.3,458.3C1811.9,458.3 1816.4,458.5 1821.0,458.5C1825.5,458.5 1830.0,458.4 1834.6,458.4C1839.1,458.4 1843.7,458.3 1848.2,458.3C1852.8,458.3 1857.4,458.3 1861.9,458.3C1866.5,458.3 1871.0,458.4 1875.6,458.4C1880.1,458.4 1884.7,458.3 1889.2,458.3C1893.8,458.3 1898.3,458.3 1902.8,458.3C1907.4,458.3 1912.0,458.3 1916.5,458.4" fill="none" stroke="#e8801c" stroke-width="1.5" stroke-opacity="1" stroke-linejoin="round"/><path d="M1097.5,488.0C1102.0,477.4 1106.6,456.2 1111.2,456.2C1115.7,456.2 1120.2,457.4 1124.8,457.7C1129.3,457.9 1133.9,457.9 1138.5,457.9C1143.0,457.9 1147.5,456.9 1152.1,456.6C1156.6,456.3 1161.2,456.2 1165.8,456.2C1170.3,456.2 1174.9,458.4 1179.4,458.4C1184.0,458.4 1188.5,458.2 1193.0,457.8C1197.6,457.5 1202.2,456.2 1206.7,456.2C1211.2,456.2 1215.8,457.3 1220.3,457.7C1224.9,458.0 1229.5,458.1 1234.0,458.1C1238.5,458.2 1243.1,458.1 1247.7,458.2C1252.2,458.2 1256.8,458.5 1261.3,458.6C1265.8,458.8 1270.4,459.1 1275.0,459.1C1279.5,459.1 1284.0,458.1 1288.6,458.1C1293.1,458.1 1297.7,459.2 1302.2,459.2C1306.8,459.2 1311.4,457.8 1315.9,457.4C1320.5,456.9 1325.0,456.5 1329.5,456.5C1334.1,456.5 1338.7,459.0 1343.2,459.0C1347.8,459.0 1352.3,457.0 1356.8,456.5C1361.4,456.1 1366.0,456.1 1370.5,456.1C1375.0,456.0 1379.6,456.0 1384.2,456.0C1388.7,456.0 1393.2,457.1 1397.8,457.5C1402.3,458.0 1406.9,459.0 1411.5,459.0C1416.0,459.0 1420.5,456.8 1425.1,456.8C1429.6,456.8 1434.2,459.1 1438.8,459.1C1443.3,459.1 1447.9,459.1 1452.4,458.9C1457.0,458.6 1461.5,456.4 1466.0,456.4C1470.6,456.4 1475.2,457.2 1479.7,457.4C1484.2,457.6 1488.8,457.6 1493.3,457.7C1497.9,457.8 1502.5,457.9 1507.0,458.0C1511.5,458.0 1516.1,458.1 1520.7,458.1C1525.2,458.1 1529.8,455.7 1534.3,455.7C1538.8,455.7 1543.4,458.1 1548.0,458.1C1552.5,458.1 1557.0,456.1 1561.6,456.1C1566.1,456.1 1570.7,457.2 1575.2,457.4C1579.8,457.5 1584.4,457.5 1588.9,457.5C1593.5,457.5 1598.0,455.9 1602.5,455.9C1607.1,455.9 1611.7,457.9 1616.2,457.9C1620.8,457.9 1625.3,457.9 1629.8,457.7C1634.4,457.4 1639.0,456.4 1643.5,456.4C1648.0,456.4 1652.6,458.4 1657.2,458.4C1661.7,458.4 1666.3,456.0 1670.8,456.0C1675.4,456.0 1679.9,459.0 1684.5,459.0C1689.0,459.0 1693.5,455.8 1698.1,455.8C1702.6,455.8 1707.2,458.6 1711.8,458.6C1716.3,458.6 1720.9,458.0 1725.4,457.6C1730.0,457.1 1734.5,456.0 1739.1,456.0C1743.6,456.0 1748.2,456.0 1752.7,456.5C1757.2,457.0 1761.8,459.2 1766.3,459.2C1770.9,459.2 1775.5,458.3 1780.0,458.1C1784.5,457.8 1789.1,457.8 1793.7,457.8C1798.2,457.8 1802.8,458.2 1807.3,458.2C1811.9,458.2 1816.4,456.1 1821.0,456.1C1825.5,456.1 1830.0,457.1 1834.6,457.5C1839.1,458.0 1843.7,458.9 1848.2,458.9C1852.8,458.9 1857.4,456.6 1861.9,456.6C1866.5,456.6 1871.0,456.7 1875.6,457.2C1880.1,457.6 1884.7,459.3 1889.2,459.3C1893.8,459.3 1898.3,459.3 1902.8,459.0C1907.4,458.6 1912.0,457.4 1916.5,456.7" fill="none" stroke="#22b8d8" stroke-width="1.1" stroke-opacity="1" stroke-linejoin="round"/>
<path d="M1097.5,488.0C1102.0,469.2 1106.6,431.8 1111.2,431.8C1115.7,431.8 1120.2,431.8 1124.8,431.8C1129.3,431.8 1133.9,431.8 1138.5,431.8C1143.0,431.8 1147.5,431.8 1152.1,431.8C1156.6,431.8 1161.2,431.8 1165.8,431.8C1170.3,431.8 1174.9,431.8 1179.4,431.8C1184.0,431.8 1188.5,431.8 1193.0,431.8C1197.6,431.8 1202.2,431.8 1206.7,431.8C1211.2,431.8 1215.8,431.8 1220.3,431.8C1224.9,431.8 1229.5,431.8 1234.0,431.8C1238.5,431.8 1243.1,431.8 1247.7,431.8C1252.2,431.8 1256.8,431.8 1261.3,431.8C1265.8,431.8 1270.4,431.8 1275.0,431.8C1279.5,431.8 1284.0,431.8 1288.6,431.8C1293.1,431.8 1297.7,431.8 1302.2,431.8C1306.8,431.8 1311.4,431.8 1315.9,431.8C1320.5,431.8 1325.0,431.8 1329.5,431.8C1334.1,431.8 1338.7,431.8 1343.2,431.8C1347.8,431.8 1352.3,431.8 1356.8,431.8C1361.4,431.8 1366.0,431.8 1370.5,431.8C1375.0,431.8 1379.6,431.8 1384.2,431.8C1388.7,431.8 1393.2,431.8 1397.8,431.8C1402.3,431.8 1406.9,431.8 1411.5,431.8C1416.0,431.8 1420.5,431.8 1425.1,431.8C1429.6,431.8 1434.2,431.8 1438.8,431.8C1443.3,431.8 1447.9,431.8 1452.4,431.8C1457.0,431.8 1461.5,431.8 1466.0,431.8C1470.6,431.8 1475.2,431.8 1479.7,431.8C1484.2,431.8 1488.8,431.8 1493.3,431.8C1497.9,431.8 1502.5,431.8 1507.0,431.8C1511.5,431.8 1516.1,431.8 1520.7,431.8C1525.2,431.8 1529.8,431.8 1534.3,431.8C1538.8,431.8 1543.4,431.8 1548.0,431.8C1552.5,431.8 1557.0,431.8 1561.6,431.8C1566.1,431.8 1570.7,431.8 1575.2,431.8C1579.8,431.8 1584.4,431.8 1588.9,431.8C1593.5,431.8 1598.0,431.8 1602.5,431.8C1607.1,431.8 1611.7,431.8 1616.2,431.8C1620.8,431.8 1625.3,431.8 1629.8,431.8C1634.4,431.8 1639.0,431.8 1643.5,431.8C1648.0,431.8 1652.6,431.8 1657.2,431.8C1661.7,431.8 1666.3,431.8 1670.8,431.8C1675.4,431.8 1679.9,431.8 1684.5,431.8C1689.0,431.8 1693.5,431.8 1698.1,431.8C1702.6,431.8 1707.2,431.8 1711.8,431.8C1716.3,431.8 1720.9,431.8 1725.4,431.8C1730.0,431.8 1734.5,431.8 1739.1,431.8C1743.6,431.8 1748.2,431.8 1752.7,431.8C1757.2,431.8 1761.8,431.8 1766.3,431.8C1770.9,431.8 1775.5,431.8 1780.0,431.8C1784.5,431.8 1789.1,431.8 1793.7,431.8C1798.2,431.8 1802.8,431.8 1807.3,431.8C1811.9,431.8 1816.4,431.8 1821.0,431.8C1825.5,431.8 1830.0,431.8 1834.6,431.8C1839.1,431.8 1843.7,431.8 1848.2,431.8C1852.8,431.8 1857.4,431.8 1861.9,431.8C1866.5,431.8 1871.0,431.8 1875.6,431.8C1880.1,431.8 1884.7,431.8 1889.2,431.8C1893.8,431.8 1898.3,431.8 1902.8,431.8C1907.4,431.8 1912.0,431.8 1916.5,431.8L1916.5,488L1097.5,488Z" fill="url(#gB)" stroke="none"/><path d="M1097.5,488.0C1102.0,469.2 1106.6,431.8 1111.2,431.8C1115.7,431.8 1120.2,431.8 1124.8,431.8C1129.3,431.8 1133.9,431.8 1138.5,431.8C1143.0,431.8 1147.5,431.8 1152.1,431.8C1156.6,431.8 1161.2,431.8 1165.8,431.8C1170.3,431.8 1174.9,431.8 1179.4,431.8C1184.0,431.8 1188.5,431.8 1193.0,431.8C1197.6,431.8 1202.2,431.8 1206.7,431.8C1211.2,431.8 1215.8,431.8 1220.3,431.8C1224.9,431.8 1229.5,431.8 1234.0,431.8C1238.5,431.8 1243.1,431.8 1247.7,431.8C1252.2,431.8 1256.8,431.8 1261.3,431.8C1265.8,431.8 1270.4,431.8 1275.0,431.8C1279.5,431.8 1284.0,431.8 1288.6,431.8C1293.1,431.8 1297.7,431.8 1302.2,431.8C1306.8,431.8 1311.4,431.8 1315.9,431.8C1320.5,431.8 1325.0,431.8 1329.5,431.8C1334.1,431.8 1338.7,431.8 1343.2,431.8C1347.8,431.8 1352.3,431.8 1356.8,431.8C1361.4,431.8 1366.0,431.8 1370.5,431.8C1375.0,431.8 1379.6,431.8 1384.2,431.8C1388.7,431.8 1393.2,431.8 1397.8,431.8C1402.3,431.8 1406.9,431.8 1411.5,431.8C1416.0,431.8 1420.5,431.8 1425.1,431.8C1429.6,431.8 1434.2,431.8 1438.8,431.8C1443.3,431.8 1447.9,431.8 1452.4,431.8C1457.0,431.8 1461.5,431.8 1466.0,431.8C1470.6,431.8 1475.2,431.8 1479.7,431.8C1484.2,431.8 1488.8,431.8 1493.3,431.8C1497.9,431.8 1502.5,431.8 1507.0,431.8C1511.5,431.8 1516.1,431.8 1520.7,431.8C1525.2,431.8 1529.8,431.8 1534.3,431.8C1538.8,431.8 1543.4,431.8 1548.0,431.8C1552.5,431.8 1557.0,431.8 1561.6,431.8C1566.1,431.8 1570.7,431.8 1575.2,431.8C1579.8,431.8 1584.4,431.8 1588.9,431.8C1593.5,431.8 1598.0,431.8 1602.5,431.8C1607.1,431.8 1611.7,431.8 1616.2,431.8C1620.8,431.8 1625.3,431.8 1629.8,431.8C1634.4,431.8 1639.0,431.8 1643.5,431.8C1648.0,431.8 1652.6,431.8 1657.2,431.8C1661.7,431.8 1666.3,431.8 1670.8,431.8C1675.4,431.8 1679.9,431.8 1684.5,431.8C1689.0,431.8 1693.5,431.8 1698.1,431.8C1702.6,431.8 1707.2,431.8 1711.8,431.8C1716.3,431.8 1720.9,431.8 1725.4,431.8C1730.0,431.8 1734.5,431.8 1739.1,431.8C1743.6,431.8 1748.2,431.8 1752.7,431.8C1757.2,431.8 1761.8,431.8 1766.3,431.8C1770.9,431.8 1775.5,431.8 1780.0,431.8C1784.5,431.8 1789.1,431.8 1793.7,431.8C1798.2,431.8 1802.8,431.8 1807.3,431.8C1811.9,431.8 1816.4,431.8 1821.0,431.8C1825.5,431.8 1830.0,431.8 1834.6,431.8C1839.1,431.8 1843.7,431.8 1848.2,431.8C1852.8,431.8 1857.4,431.8 1861.9,431.8C1866.5,431.8 1871.0,431.8 1875.6,431.8C1880.1,431.8 1884.7,431.8 1889.2,431.8C1893.8,431.8 1898.3,431.8 1902.8,431.8C1907.4,431.8 1912.0,431.8 1916.5,431.8" fill="none" stroke="#1d6fdc" stroke-width="1.7" stroke-opacity="1" stroke-linejoin="round"/>
<path d="M1097.5,488.0C1102.0,465.2 1106.6,419.6 1111.2,419.6C1115.7,419.6 1120.2,419.6 1124.8,419.6C1129.3,419.6 1133.9,419.6 1138.5,419.6C1143.0,419.6 1147.5,419.6 1152.1,419.6C1156.6,419.6 1161.2,419.6 1165.8,419.6C1170.3,419.6 1174.9,419.6 1179.4,419.6C1184.0,419.6 1188.5,419.6 1193.0,419.6C1197.6,419.6 1202.2,419.6 1206.7,419.6C1211.2,419.6 1215.8,419.6 1220.3,419.6C1224.9,419.6 1229.5,419.6 1234.0,419.6C1238.5,419.6 1243.1,419.6 1247.7,419.6C1252.2,419.6 1256.8,419.6 1261.3,419.6C1265.8,419.6 1270.4,419.6 1275.0,419.6C1279.5,419.6 1284.0,419.6 1288.6,419.6C1293.1,419.6 1297.7,419.6 1302.2,419.6C1306.8,419.6 1311.4,419.6 1315.9,419.6C1320.5,419.6 1325.0,419.6 1329.5,419.6C1334.1,419.6 1338.7,419.6 1343.2,419.6C1347.8,419.6 1352.3,419.6 1356.8,419.6C1361.4,419.6 1366.0,419.6 1370.5,419.6C1375.0,419.6 1379.6,419.6 1384.2,419.6C1388.7,419.6 1393.2,419.6 1397.8,419.6C1402.3,419.6 1406.9,419.6 1411.5,419.6C1416.0,419.6 1420.5,419.6 1425.1,419.6C1429.6,419.6 1434.2,419.6 1438.8,419.6C1443.3,419.6 1447.9,419.6 1452.4,419.6C1457.0,419.6 1461.5,419.6 1466.0,419.6C1470.6,419.6 1475.2,419.6 1479.7,419.6C1484.2,419.6 1488.8,419.6 1493.3,419.6C1497.9,419.6 1502.5,419.6 1507.0,419.6C1511.5,419.6 1516.1,419.6 1520.7,419.6C1525.2,419.6 1529.8,419.6 1534.3,419.6C1538.8,419.6 1543.4,419.6 1548.0,419.6C1552.5,419.6 1557.0,419.6 1561.6,419.6C1566.1,419.6 1570.7,419.6 1575.2,419.6C1579.8,419.6 1584.4,419.6 1588.9,419.6C1593.5,419.6 1598.0,419.6 1602.5,419.6C1607.1,419.6 1611.7,419.6 1616.2,419.6C1620.8,419.6 1625.3,419.6 1629.8,419.6C1634.4,419.6 1639.0,419.6 1643.5,419.6C1648.0,419.6 1652.6,419.6 1657.2,419.6C1661.7,419.6 1666.3,419.6 1670.8,419.6C1675.4,419.6 1679.9,419.6 1684.5,419.6C1689.0,419.6 1693.5,419.6 1698.1,419.6C1702.6,419.6 1707.2,419.6 1711.8,419.6C1716.3,419.6 1720.9,419.6 1725.4,419.6C1730.0,419.6 1734.5,419.6 1739.1,419.6C1743.6,419.6 1748.2,419.6 1752.7,419.6C1757.2,419.6 1761.8,419.6 1766.3,419.6C1770.9,419.6 1775.5,419.6 1780.0,419.6C1784.5,419.6 1789.1,419.6 1793.7,419.6C1798.2,419.6 1802.8,419.6 1807.3,419.6C1811.9,419.6 1816.4,419.6 1821.0,419.6C1825.5,419.6 1830.0,419.6 1834.6,419.6C1839.1,419.6 1843.7,419.6 1848.2,419.6C1852.8,419.6 1857.4,419.6 1861.9,419.6C1866.5,419.6 1871.0,419.6 1875.6,419.6C1880.1,419.6 1884.7,419.6 1889.2,419.6C1893.8,419.6 1898.3,419.6 1902.8,419.6C1907.4,419.6 1912.0,419.6 1916.5,419.6L1916.5,488L1097.5,488Z" fill="url(#gG)" stroke="none"/><path d="M1097.5,488.0C1102.0,465.2 1106.6,419.6 1111.2,419.6C1115.7,419.6 1120.2,419.6 1124.8,419.6C1129.3,419.6 1133.9,419.6 1138.5,419.6C1143.0,419.6 1147.5,419.6 1152.1,419.6C1156.6,419.6 1161.2,419.6 1165.8,419.6C1170.3,419.6 1174.9,419.6 1179.4,419.6C1184.0,419.6 1188.5,419.6 1193.0,419.6C1197.6,419.6 1202.2,419.6 1206.7,419.6C1211.2,419.6 1215.8,419.6 1220.3,419.6C1224.9,419.6 1229.5,419.6 1234.0,419.6C1238.5,419.6 1243.1,419.6 1247.7,419.6C1252.2,419.6 1256.8,419.6 1261.3,419.6C1265.8,419.6 1270.4,419.6 1275.0,419.6C1279.5,419.6 1284.0,419.6 1288.6,419.6C1293.1,419.6 1297.7,419.6 1302.2,419.6C1306.8,419.6 1311.4,419.6 1315.9,419.6C1320.5,419.6 1325.0,419.6 1329.5,419.6C1334.1,419.6 1338.7,419.6 1343.2,419.6C1347.8,419.6 1352.3,419.6 1356.8,419.6C1361.4,419.6 1366.0,419.6 1370.5,419.6C1375.0,419.6 1379.6,419.6 1384.2,419.6C1388.7,419.6 1393.2,419.6 1397.8,419.6C1402.3,419.6 1406.9,419.6 1411.5,419.6C1416.0,419.6 1420.5,419.6 1425.1,419.6C1429.6,419.6 1434.2,419.6 1438.8,419.6C1443.3,419.6 1447.9,419.6 1452.4,419.6C1457.0,419.6 1461.5,419.6 1466.0,419.6C1470.6,419.6 1475.2,419.6 1479.7,419.6C1484.2,419.6 1488.8,419.6 1493.3,419.6C1497.9,419.6 1502.5,419.6 1507.0,419.6C1511.5,419.6 1516.1,419.6 1520.7,419.6C1525.2,419.6 1529.8,419.6 1534.3,419.6C1538.8,419.6 1543.4,419.6 1548.0,419.6C1552.5,419.6 1557.0,419.6 1561.6,419.6C1566.1,419.6 1570.7,419.6 1575.2,419.6C1579.8,419.6 1584.4,419.6 1588.9,419.6C1593.5,419.6 1598.0,419.6 1602.5,419.6C1607.1,419.6 1611.7,419.6 1616.2,419.6C1620.8,419.6 1625.3,419.6 1629.8,419.6C1634.4,419.6 1639.0,419.6 1643.5,419.6C1648.0,419.6 1652.6,419.6 1657.2,419.6C1661.7,419.6 1666.3,419.6 1670.8,419.6C1675.4,419.6 1679.9,419.6 1684.5,419.6C1689.0,419.6 1693.5,419.6 1698.1,419.6C1702.6,419.6 1707.2,419.6 1711.8,419.6C1716.3,419.6 1720.9,419.6 1725.4,419.6C1730.0,419.6 1734.5,419.6 1739.1,419.6C1743.6,419.6 1748.2,419.6 1752.7,419.6C1757.2,419.6 1761.8,419.6 1766.3,419.6C1770.9,419.6 1775.5,419.6 1780.0,419.6C1784.5,419.6 1789.1,419.6 1793.7,419.6C1798.2,419.6 1802.8,419.6 1807.3,419.6C1811.9,419.6 1816.4,419.6 1821.0,419.6C1825.5,419.6 1830.0,419.6 1834.6,419.6C1839.1,419.6 1843.7,419.6 1848.2,419.6C1852.8,419.6 1857.4,419.6 1861.9,419.6C1866.5,419.6 1871.0,419.6 1875.6,419.6C1880.1,419.6 1884.7,419.6 1889.2,419.6C1893.8,419.6 1898.3,419.6 1902.8,419.6C1907.4,419.6 1912.0,419.6 1916.5,419.6" fill="none" stroke="#8a8f98" stroke-width="1.5" stroke-opacity="1" stroke-linejoin="round"/>
<path d="M1097.5,488.0C1102.0,427.8 1106.6,307.5 1111.2,307.5C1115.7,307.5 1120.2,307.6 1124.8,307.6C1129.3,307.6 1133.9,307.6 1138.5,307.6C1143.0,307.6 1147.5,307.6 1152.1,307.6C1156.6,307.6 1161.2,307.6 1165.8,307.6C1170.3,307.6 1174.9,307.6 1179.4,307.6C1184.0,307.6 1188.5,307.4 1193.0,307.4C1197.6,307.4 1202.2,307.4 1206.7,307.5C1211.2,307.5 1215.8,307.6 1220.3,307.6C1224.9,307.6 1229.5,307.5 1234.0,307.5C1238.5,307.5 1243.1,307.6 1247.7,307.6C1252.2,307.6 1256.8,307.4 1261.3,307.4C1265.8,307.4 1270.4,307.5 1275.0,307.5C1279.5,307.5 1284.0,307.4 1288.6,307.4C1293.1,307.4 1297.7,307.5 1302.2,307.5C1306.8,307.5 1311.4,307.5 1315.9,307.5C1320.5,307.5 1325.0,307.4 1329.5,307.4C1334.1,307.4 1338.7,307.4 1343.2,307.4C1347.8,307.4 1352.3,307.4 1356.8,307.4C1361.4,307.5 1366.0,307.6 1370.5,307.6C1375.0,307.6 1379.6,307.6 1384.2,307.6C1388.7,307.5 1393.2,307.4 1397.8,307.4C1402.3,307.4 1406.9,307.6 1411.5,307.6C1416.0,307.6 1420.5,307.4 1425.1,307.4C1429.6,307.4 1434.2,307.5 1438.8,307.5C1443.3,307.5 1447.9,307.4 1452.4,307.4C1457.0,307.4 1461.5,307.4 1466.0,307.4C1470.6,307.4 1475.2,307.6 1479.7,307.6C1484.2,307.6 1488.8,307.4 1493.3,307.4C1497.9,307.4 1502.5,307.4 1507.0,307.4C1511.5,307.4 1516.1,307.6 1520.7,307.6C1525.2,307.6 1529.8,307.6 1534.3,307.6C1538.8,307.6 1543.4,307.4 1548.0,307.4C1552.5,307.4 1557.0,307.6 1561.6,307.6C1566.1,307.6 1570.7,307.5 1575.2,307.5C1579.8,307.5 1584.4,307.6 1588.9,307.6C1593.5,307.6 1598.0,307.4 1602.5,307.4C1607.1,307.4 1611.7,307.6 1616.2,307.6C1620.8,307.6 1625.3,307.6 1629.8,307.6C1634.4,307.6 1639.0,307.6 1643.5,307.6C1648.0,307.6 1652.6,307.6 1657.2,307.6C1661.7,307.6 1666.3,307.4 1670.8,307.4C1675.4,307.4 1679.9,307.5 1684.5,307.5C1689.0,307.5 1693.5,307.4 1698.1,307.4C1702.6,307.4 1707.2,307.4 1711.8,307.4C1716.3,307.4 1720.9,307.4 1725.4,307.4C1730.0,307.4 1734.5,307.4 1739.1,307.4C1743.6,307.5 1748.2,307.5 1752.7,307.5C1757.2,307.5 1761.8,307.4 1766.3,307.4C1770.9,307.4 1775.5,307.6 1780.0,307.6C1784.5,307.6 1789.1,307.5 1793.7,307.5C1798.2,307.4 1802.8,307.4 1807.3,307.4C1811.9,307.4 1816.4,307.6 1821.0,307.6C1825.5,307.6 1830.0,307.5 1834.6,307.5C1839.1,307.5 1843.7,307.4 1848.2,307.4C1852.8,307.4 1857.4,307.5 1861.9,307.5C1866.5,307.5 1871.0,307.6 1875.6,307.6C1880.1,307.6 1884.7,307.4 1889.2,307.4C1893.8,307.4 1898.3,307.6 1902.8,307.6C1907.4,307.6 1912.0,307.5 1916.5,307.4L1916.5,488L1097.5,488Z" fill="url(#gP)" stroke="none"/><path d="M1097.5,488.0C1102.0,427.8 1106.6,307.5 1111.2,307.5C1115.7,307.5 1120.2,307.6 1124.8,307.6C1129.3,307.6 1133.9,307.6 1138.5,307.6C1143.0,307.6 1147.5,307.6 1152.1,307.6C1156.6,307.6 1161.2,307.6 1165.8,307.6C1170.3,307.6 1174.9,307.6 1179.4,307.6C1184.0,307.6 1188.5,307.4 1193.0,307.4C1197.6,307.4 1202.2,307.4 1206.7,307.5C1211.2,307.5 1215.8,307.6 1220.3,307.6C1224.9,307.6 1229.5,307.5 1234.0,307.5C1238.5,307.5 1243.1,307.6 1247.7,307.6C1252.2,307.6 1256.8,307.4 1261.3,307.4C1265.8,307.4 1270.4,307.5 1275.0,307.5C1279.5,307.5 1284.0,307.4 1288.6,307.4C1293.1,307.4 1297.7,307.5 1302.2,307.5C1306.8,307.5 1311.4,307.5 1315.9,307.5C1320.5,307.5 1325.0,307.4 1329.5,307.4C1334.1,307.4 1338.7,307.4 1343.2,307.4C1347.8,307.4 1352.3,307.4 1356.8,307.4C1361.4,307.5 1366.0,307.6 1370.5,307.6C1375.0,307.6 1379.6,307.6 1384.2,307.6C1388.7,307.5 1393.2,307.4 1397.8,307.4C1402.3,307.4 1406.9,307.6 1411.5,307.6C1416.0,307.6 1420.5,307.4 1425.1,307.4C1429.6,307.4 1434.2,307.5 1438.8,307.5C1443.3,307.5 1447.9,307.4 1452.4,307.4C1457.0,307.4 1461.5,307.4 1466.0,307.4C1470.6,307.4 1475.2,307.6 1479.7,307.6C1484.2,307.6 1488.8,307.4 1493.3,307.4C1497.9,307.4 1502.5,307.4 1507.0,307.4C1511.5,307.4 1516.1,307.6 1520.7,307.6C1525.2,307.6 1529.8,307.6 1534.3,307.6C1538.8,307.6 1543.4,307.4 1548.0,307.4C1552.5,307.4 1557.0,307.6 1561.6,307.6C1566.1,307.6 1570.7,307.5 1575.2,307.5C1579.8,307.5 1584.4,307.6 1588.9,307.6C1593.5,307.6 1598.0,307.4 1602.5,307.4C1607.1,307.4 1611.7,307.6 1616.2,307.6C1620.8,307.6 1625.3,307.6 1629.8,307.6C1634.4,307.6 1639.0,307.6 1643.5,307.6C1648.0,307.6 1652.6,307.6 1657.2,307.6C1661.7,307.6 1666.3,307.4 1670.8,307.4C1675.4,307.4 1679.9,307.5 1684.5,307.5C1689.0,307.5 1693.5,307.4 1698.1,307.4C1702.6,307.4 1707.2,307.4 1711.8,307.4C1716.3,307.4 1720.9,307.4 1725.4,307.4C1730.0,307.4 1734.5,307.4 1739.1,307.4C1743.6,307.5 1748.2,307.5 1752.7,307.5C1757.2,307.5 1761.8,307.4 1766.3,307.4C1770.9,307.4 1775.5,307.6 1780.0,307.6C1784.5,307.6 1789.1,307.5 1793.7,307.5C1798.2,307.4 1802.8,307.4 1807.3,307.4C1811.9,307.4 1816.4,307.6 1821.0,307.6C1825.5,307.6 1830.0,307.5 1834.6,307.5C1839.1,307.5 1843.7,307.4 1848.2,307.4C1852.8,307.4 1857.4,307.5 1861.9,307.5C1866.5,307.5 1871.0,307.6 1875.6,307.6C1880.1,307.6 1884.7,307.4 1889.2,307.4C1893.8,307.4 1898.3,307.6 1902.8,307.6C1907.4,307.6 1912.0,307.5 1916.5,307.4" fill="none" stroke="#744bcf" stroke-width="1.8" stroke-opacity="1" stroke-linejoin="round"/>
<path d="M1097.5,488.0C1102.0,417.0 1106.6,275.0 1111.2,275.0C1115.7,275.0 1120.2,289.2 1124.8,310.0C1129.3,330.8 1133.9,400.0 1138.5,400.0C1143.0,400.0 1147.5,273.0 1152.1,273.0C1156.6,273.0 1161.2,273.0 1165.8,278.8C1170.3,284.5 1174.9,289.8 1179.4,310.0C1184.0,330.2 1188.5,400.0 1193.0,400.0C1197.6,400.0 1202.2,272.5 1206.7,272.5C1211.2,272.5 1215.8,345.0 1220.3,345.0C1224.9,345.0 1229.5,330.0 1234.0,330.0C1238.5,330.0 1243.1,343.0 1247.7,343.0C1252.2,343.0 1256.8,271.8 1261.3,271.8C1265.8,271.8 1270.4,376.2 1275.0,376.2C1279.5,376.2 1284.0,376.2 1288.6,374.5C1293.1,372.7 1297.7,326.7 1302.2,310.0C1306.8,293.3 1311.4,274.2 1315.9,274.2C1320.5,274.2 1325.0,380.0 1329.5,380.0C1334.1,380.0 1338.7,334.9 1343.2,317.5C1347.8,300.1 1352.3,275.8 1356.8,275.8C1361.4,275.8 1366.0,378.2 1370.5,378.2C1375.0,378.2 1379.6,375.7 1384.2,358.8C1388.7,341.8 1393.2,276.5 1397.8,276.5C1402.3,276.5 1406.9,337.0 1411.5,337.0C1416.0,337.0 1420.5,333.6 1425.1,323.8C1429.6,313.9 1434.2,278.0 1438.8,278.0C1443.3,278.0 1447.9,278.0 1452.4,283.8C1457.0,289.5 1461.5,422.0 1466.0,422.0C1470.6,422.0 1475.2,294.2 1479.7,294.2C1484.2,294.2 1488.8,298.8 1493.3,305.0C1497.9,311.2 1502.5,318.7 1507.0,331.2C1511.5,343.8 1516.1,380.5 1520.7,380.5C1525.2,380.5 1529.8,344.9 1534.3,330.0C1538.8,315.1 1543.4,291.2 1548.0,291.2C1552.5,291.2 1557.0,332.6 1561.6,355.0C1566.1,377.4 1570.7,425.5 1575.2,425.5C1579.8,425.5 1584.4,347.5 1588.9,322.5C1593.5,297.5 1598.0,275.5 1602.5,275.5C1607.1,275.5 1611.7,393.2 1616.2,393.2C1620.8,393.2 1625.3,375.2 1629.8,355.0C1634.4,334.7 1639.0,271.8 1643.5,271.8C1648.0,271.8 1652.6,298.6 1657.2,312.5C1661.7,326.4 1666.3,345.2 1670.8,355.0C1675.4,364.8 1679.9,371.2 1684.5,371.2C1689.0,371.2 1693.5,270.5 1698.1,270.5C1702.6,270.5 1707.2,298.2 1711.8,317.5C1716.3,336.8 1720.9,386.2 1725.4,386.2C1730.0,386.2 1734.5,279.0 1739.1,279.0C1743.6,279.0 1748.2,341.0 1752.7,357.5C1757.2,374.0 1761.8,378.0 1766.3,378.0C1770.9,378.0 1775.5,310.4 1780.0,292.5C1784.5,274.6 1789.1,270.5 1793.7,270.5C1798.2,270.5 1802.8,421.2 1807.3,421.2C1811.9,421.2 1816.4,291.2 1821.0,291.2C1825.5,291.2 1830.0,331.7 1834.6,347.5C1839.1,363.3 1843.7,386.2 1848.2,386.2C1852.8,386.2 1857.4,386.2 1861.9,371.2C1866.5,356.2 1871.0,270.5 1875.6,270.5C1880.1,270.5 1884.7,372.0 1889.2,386.2C1893.8,400.5 1898.3,400.5 1902.8,400.5C1907.4,400.5 1912.0,315.5 1916.5,273.0L1916.5,488L1097.5,488Z" fill="url(#gO)" stroke="none"/><path d="M1097.5,488.0C1102.0,417.0 1106.6,275.0 1111.2,275.0C1115.7,275.0 1120.2,289.2 1124.8,310.0C1129.3,330.8 1133.9,400.0 1138.5,400.0C1143.0,400.0 1147.5,273.0 1152.1,273.0C1156.6,273.0 1161.2,273.0 1165.8,278.8C1170.3,284.5 1174.9,289.8 1179.4,310.0C1184.0,330.2 1188.5,400.0 1193.0,400.0C1197.6,400.0 1202.2,272.5 1206.7,272.5C1211.2,272.5 1215.8,345.0 1220.3,345.0C1224.9,345.0 1229.5,330.0 1234.0,330.0C1238.5,330.0 1243.1,343.0 1247.7,343.0C1252.2,343.0 1256.8,271.8 1261.3,271.8C1265.8,271.8 1270.4,376.2 1275.0,376.2C1279.5,376.2 1284.0,376.2 1288.6,374.5C1293.1,372.7 1297.7,326.7 1302.2,310.0C1306.8,293.3 1311.4,274.2 1315.9,274.2C1320.5,274.2 1325.0,380.0 1329.5,380.0C1334.1,380.0 1338.7,334.9 1343.2,317.5C1347.8,300.1 1352.3,275.8 1356.8,275.8C1361.4,275.8 1366.0,378.2 1370.5,378.2C1375.0,378.2 1379.6,375.7 1384.2,358.8C1388.7,341.8 1393.2,276.5 1397.8,276.5C1402.3,276.5 1406.9,337.0 1411.5,337.0C1416.0,337.0 1420.5,333.6 1425.1,323.8C1429.6,313.9 1434.2,278.0 1438.8,278.0C1443.3,278.0 1447.9,278.0 1452.4,283.8C1457.0,289.5 1461.5,422.0 1466.0,422.0C1470.6,422.0 1475.2,294.2 1479.7,294.2C1484.2,294.2 1488.8,298.8 1493.3,305.0C1497.9,311.2 1502.5,318.7 1507.0,331.2C1511.5,343.8 1516.1,380.5 1520.7,380.5C1525.2,380.5 1529.8,344.9 1534.3,330.0C1538.8,315.1 1543.4,291.2 1548.0,291.2C1552.5,291.2 1557.0,332.6 1561.6,355.0C1566.1,377.4 1570.7,425.5 1575.2,425.5C1579.8,425.5 1584.4,347.5 1588.9,322.5C1593.5,297.5 1598.0,275.5 1602.5,275.5C1607.1,275.5 1611.7,393.2 1616.2,393.2C1620.8,393.2 1625.3,375.2 1629.8,355.0C1634.4,334.7 1639.0,271.8 1643.5,271.8C1648.0,271.8 1652.6,298.6 1657.2,312.5C1661.7,326.4 1666.3,345.2 1670.8,355.0C1675.4,364.8 1679.9,371.2 1684.5,371.2C1689.0,371.2 1693.5,270.5 1698.1,270.5C1702.6,270.5 1707.2,298.2 1711.8,317.5C1716.3,336.8 1720.9,386.2 1725.4,386.2C1730.0,386.2 1734.5,279.0 1739.1,279.0C1743.6,279.0 1748.2,341.0 1752.7,357.5C1757.2,374.0 1761.8,378.0 1766.3,378.0C1770.9,378.0 1775.5,310.4 1780.0,292.5C1784.5,274.6 1789.1,270.5 1793.7,270.5C1798.2,270.5 1802.8,421.2 1807.3,421.2C1811.9,421.2 1816.4,291.2 1821.0,291.2C1825.5,291.2 1830.0,331.7 1834.6,347.5C1839.1,363.3 1843.7,386.2 1848.2,386.2C1852.8,386.2 1857.4,386.2 1861.9,371.2C1866.5,356.2 1871.0,270.5 1875.6,270.5C1880.1,270.5 1884.7,372.0 1889.2,386.2C1893.8,400.5 1898.3,400.5 1902.8,400.5C1907.4,400.5 1912.0,315.5 1916.5,273.0" fill="none" stroke="#e69c10" stroke-width="1.4" stroke-opacity="1" stroke-linejoin="round"/>
</svg>
<div class="t " style="left:70px;top:22px;font-size:19.95px;line-height:30px;height:30px;color:#a0a2a7;transform-origin:0 20px;transform:scaleY(1.12);">Kubernetes Dashboard</div>
<svg class="r" style="left:300px;top:0;filter:drop-shadow(0 2px 1.5px rgba(0,0,0,.7))" width="620" height="75" viewBox="300 0 620 75"><rect x="316.05" y="4.95" width="584.95" height="57.5" fill="none" stroke="#fbb900" stroke-width="6.1"/></svg>
<svg class="r" style="left:0;top:0" width="1999" height="120" viewBox="0 0 1999 120"><rect x="328.60" y="17.80" width="270.50" height="32.60" rx="3" fill="#25262b" stroke="#50515a" stroke-width="1.2"/></svg>
<svg class="r" style="left:336.4px;top:25.5px" width="16" height="15" viewBox="0 0 16 15"><path d="M4.5,1H11.5M3,3.3H13" stroke="#777a81" stroke-width="1.0" fill="none"/><rect x="0.8" y="5.6" width="14.4" height="8.4" rx="1.6" fill="none" stroke="#777a81" stroke-width="1.1"/></svg>
<div class="t " style="left:359.9px;top:21px;font-size:13.35px;line-height:30px;height:30px;color:#c9cacd;transform-origin:0 18px;transform:scaleY(1.12);">Demo Logs</div>
<div class="r" style="left:521.3000000000001px;top:24.3px;width:57.30px;height:18.90px;background:#4a4b5a;border-radius:2.5px"></div>
<div class="t " style="left:527.4000000000001px;top:20px;font-size:12px;line-height:30px;height:30px;color:#e6e7ea;transform-origin:0 18px;transform:scaleY(1.12);">Schema</div>
<svg class="r" style="left:583.7px;top:27px" width="10" height="14" viewBox="0 0 10 14"><path d="M1.8,5L5,1.8L8.2,5M1.8,9L5,12.2L8.2,9" fill="none" stroke="#5c5f66" stroke-width="1.2" stroke-linecap="round" stroke-linejoin="round"/></svg>
<svg class="r" style="left:0;top:0" width="1999" height="120" viewBox="0 0 1999 120"><rect x="618.30" y="17.80" width="269.90" height="32.60" rx="3" fill="#25262b" stroke="#50515a" stroke-width="1.2"/></svg>
<svg class="r" style="left:626.1px;top:25.5px" width="16" height="15" viewBox="0 0 16 15"><path d="M4.5,1H11.5M3,3.3H13" stroke="#777a81" stroke-width="1.0" fill="none"/><rect x="0.8" y="5.6" width="14.4" height="8.4" rx="1.6" fill="none" stroke="#777a81" stroke-width="1.1"/></svg>
<div class="t " style="left:649.6px;top:21px;font-size:13.35px;line-height:30px;height:30px;color:#c9cacd;transform-origin:0 18px;transform:scaleY(1.12);">Demo Metrics</div>
<div class="r" style="left:810.4px;top:24.3px;width:57.30px;height:18.90px;background:#4a4b5a;border-radius:2.5px"></div>
<div class="t " style="left:816.5px;top:20px;font-size:12px;line-height:30px;height:30px;color:#e6e7ea;transform-origin:0 18px;transform:scaleY(1.12);">Schema</div>
<svg class="r" style="left:872.8px;top:27px" width="10" height="14" viewBox="0 0 10 14"><path d="M1.8,5L5,1.8L8.2,5M1.8,9L5,12.2L8.2,9" fill="none" stroke="#5c5f66" stroke-width="1.2" stroke-linecap="round" stroke-linejoin="round"/></svg>
<svg class="r" style="left:0;top:0" width="1999" height="120" viewBox="0 0 1999 120"><rect x="1525.10" y="14.60" width="388.00" height="38.60" rx="2.5" fill="#25262b" stroke="#4f5058" stroke-width="1.2"/></svg>
<svg class="r" style="left:1537px;top:27.2px" width="14.2" height="13.8" viewBox="0 0 14.2 13.8"><rect x="0" y="0" width="14.2" height="13.6" rx="2.2" fill="#808288"/><rect x="0" y="2.3" width="14.2" height="0.8" fill="#303137"/></svg>
<div class="t " style="left:1562.5px;top:20px;font-size:14.4px;line-height:30px;height:30px;color:#d5d6d9;transform-origin:0 19px;transform:scaleY(1.12);">Past 1h</div>
<svg class="r" style="left:0;top:0" width="1999" height="120" viewBox="0 0 1999 120"><rect x="1925.75" y="14.75" width="45.00" height="38.30" rx="3" fill="#0f1216" stroke="#8f9297" stroke-width="1.5"/></svg>
<svg class="r" style="left:1938.3px;top:21.6px" width="19" height="21" viewBox="0 0 19 21"><path d="M16.6,12.2A7.3,7.3 0 1 1 9.3,4.9H10.5" fill="none" stroke="#8f9297" stroke-width="1.3"/><path d="M9.6,1.2L13.9,4.9L9.6,8.4Z" fill="#8f9297"/></svg>
<svg class="r" style="left:0;top:0" width="1999" height="120" viewBox="0 0 1999 120"><rect x="70.70" y="72.10" width="221.10" height="32.50" rx="2.2" fill="#2c2d32" stroke="#585963" stroke-width="1.4"/></svg>
<div class="t " style="left:82.3px;top:76px;font-size:13.3px;line-height:30px;height:30px;color:#5c5f66;transform-origin:0 18px;transform:scaleY(1.12);">Pod</div>
<svg class="r" style="left:272.1px;top:83px" width="8" height="11" viewBox="0 0 8 11"><path d="M1.5,3.8L4,1.4L6.5,3.8M1.5,7.2L4,9.6L6.5,7.2" fill="none" stroke="#6b6e75" stroke-width="1.1" stroke-linecap="round" stroke-linejoin="round"/></svg>
<svg class="r" style="left:0;top:0" width="1999" height="120" viewBox="0 0 1999 120"><rect x="301.70" y="72.10" width="221.10" height="32.50" rx="2.2" fill="#2c2d32" stroke="#585963" stroke-width="1.4"/></svg>
<div class="t " style="left:313.3px;top:76px;font-size:13.3px;line-height:30px;height:30px;color:#5c5f66;transform-origin:0 18px;transform:scaleY(1.12);">Deployment</div>
<svg class="r" style="left:503.1px;top:83px" width="8" height="11" viewBox="0 0 8 11"><path d="M1.5,3.8L4,1.4L6.5,3.8M1.5,7.2L4,9.6L6.5,7.2" fill="none" stroke="#6b6e75" stroke-width="1.1" stroke-linecap="round" stroke-linejoin="round"/></svg>
<svg class="r" style="left:0;top:0" width="1999" height="120" viewBox="0 0 1999 120"><rect x="533.20" y="72.10" width="220.10" height="32.50" rx="2.2" fill="#2c2d32" stroke="#585963" stroke-width="1.4"/></svg>
<div class="t " style="left:544.8px;top:76px;font-size:13.3px;line-height:30px;height:30px;color:#5c5f66;transform-origin:0 18px;transform:scaleY(1.12);">Node</div>
<svg class="r" style="left:733.6px;top:83px" width="8" height="11" viewBox="0 0 8 11"><path d="M1.5,3.8L4,1.4L6.5,3.8M1.5,7.2L4,9.6L6.5,7.2" fill="none" stroke="#6b6e75" stroke-width="1.1" stroke-linecap="round" stroke-linejoin="round"/></svg>
<svg class="r" style="left:0;top:0" width="1999" height="120" viewBox="0 0 1999 120"><rect x="763.70" y="72.10" width="221.10" height="32.50" rx="2.2" fill="#2c2d32" stroke="#585963" stroke-width="1.4"/></svg>
<div class="t " style="left:775.3px;top:76px;font-size:13.3px;line-height:30px;height:30px;color:#5c5f66;transform-origin:0 18px;transform:scaleY(1.12);">Namespace</div>
<svg class="r" style="left:965.1px;top:83px" width="8" height="11" viewBox="0 0 8 11"><path d="M1.5,3.8L4,1.4L6.5,3.8M1.5,7.2L4,9.6L6.5,7.2" fill="none" stroke="#6b6e75" stroke-width="1.1" stroke-linecap="round" stroke-linejoin="round"/></svg>
<svg class="r" style="left:0;top:0" width="1999" height="120" viewBox="0 0 1999 120"><rect x="995.20" y="72.10" width="221.10" height="32.50" rx="2.2" fill="#2c2d32" stroke="#585963" stroke-width="1.4"/></svg>
<div class="t " style="left:1006.8px;top:76px;font-size:13.3px;line-height:30px;height:30px;color:#5c5f66;transform-origin:0 18px;transform:scaleY(1.12);">Cluster</div>
<svg class="r" style="left:1196.6px;top:83px" width="8" height="11" viewBox="0 0 8 11"><path d="M1.5,3.8L4,1.4L6.5,3.8M1.5,7.2L4,9.6L6.5,7.2" fill="none" stroke="#6b6e75" stroke-width="1.1" stroke-linecap="round" stroke-linejoin="round"/></svg>
<svg class="r" style="left:0;top:0" width="1999" height="120" viewBox="0 0 1999 120"><rect x="1226.90" y="72.10" width="744.20" height="32.50" rx="2.2" fill="#25262b" stroke="#585963" stroke-width="1.4"/></svg>
<div class="t " style="left:1238.6px;top:76px;font-size:13.25px;line-height:30px;height:30px;color:#54565d;transform-origin:0 18px;transform:scaleY(1.12);">Search query</div>
<div class="t md" style="left:87.3px;top:128px;font-size:14.4px;line-height:30px;height:30px;color:#e9eaec;transform-origin:0 19px;transform:scaleY(1.12);">Pods</div>
<div class="t md" style="left:157.3px;top:128px;font-size:14.4px;line-height:30px;height:30px;color:#e9eaec;transform-origin:0 19px;transform:scaleY(1.12);">Nodes</div>
<div class="t md" style="left:236.3px;top:128px;font-size:14.4px;line-height:30px;height:30px;color:#e9eaec;transform-origin:0 19px;transform:scaleY(1.12);">Namespaces</div>
<div class="t " style="left:105px;top:190px;font-size:15.6px;line-height:30px;height:30px;color:#c9cacd;transform-origin:0 19px;transform:scaleY(1.12);">CPU Usage</div>
<div class="t " style="left:1047px;top:190px;font-size:15.6px;line-height:30px;height:30px;color:#c9cacd;transform-origin:0 19px;transform:scaleY(1.12);">Memory Usage</div>
<div class="t " style="left:105px;top:594px;font-size:15.6px;line-height:30px;height:30px;color:#c9cacd;transform-origin:0 19px;transform:scaleY(1.12);">Pods</div>
<div class="t " style="left:105px;top:998px;font-size:15.6px;line-height:30px;height:30px;color:#c9cacd;transform-origin:0 19px;transform:scaleY(1.12);">Latest Kubernetes Warning Events</div>
<div class="t " style="left:124.44999999999999px;top:235px;font-size:12.25px;line-height:30px;height:30px;color:#5b5e64;transform-origin:0 18px;transform:scaleY(1.12);">60%</div>
<div class="t " style="left:124.44999999999999px;top:292px;font-size:12.25px;line-height:30px;height:30px;color:#5b5e64;transform-origin:0 18px;transform:scaleY(1.12);">45%</div>
<div class="t " style="left:124.44999999999999px;top:353px;font-size:12.25px;line-height:30px;height:30px;color:#5b5e64;transform-origin:0 18px;transform:scaleY(1.12);">30%</div>
<div class="t " style="left:124.44999999999999px;top:414px;font-size:12.25px;line-height:30px;height:30px;color:#5b5e64;transform-origin:0 18px;transform:scaleY(1.12);">15%</div>
<div class="t " style="left:131.8px;top:475px;font-size:12.25px;line-height:30px;height:30px;color:#5b5e64;transform-origin:0 18px;transform:scaleY(1.12);">0%</div>
<div class="t " style="left:1058.6999999999998px;top:235px;font-size:12.25px;line-height:30px;height:30px;color:#5b5e64;transform-origin:0 18px;transform:scaleY(1.12);">1 GB</div>
<div class="t " style="left:1066.05px;top:286px;font-size:12.25px;line-height:30px;height:30px;color:#5b5e64;transform-origin:0 18px;transform:scaleY(1.12);">858</div>
<div class="t " style="left:1073.3999999999999px;top:298px;font-size:12.25px;line-height:30px;height:30px;color:#5b5e64;transform-origin:0 18px;transform:scaleY(1.12);">MB</div>
<div class="t " style="left:1066.05px;top:347px;font-size:12.25px;line-height:30px;height:30px;color:#5b5e64;transform-origin:0 18px;transform:scaleY(1.12);">572</div>
<div class="t " style="left:1073.3999999999999px;top:359px;font-size:12.25px;line-height:30px;height:30px;color:#5b5e64;transform-origin:0 18px;transform:scaleY(1.12);">MB</div>
<div class="t " style="left:1066.05px;top:408px;font-size:12.25px;line-height:30px;height:30px;color:#5b5e64;transform-origin:0 18px;transform:scaleY(1.12);">286</div>
<div class="t " style="left:1073.3999999999999px;top:420px;font-size:12.25px;line-height:30px;height:30px;color:#5b5e64;transform-origin:0 18px;transform:scaleY(1.12);">MB</div>
<div class="t " style="left:1066.05px;top:475px;font-size:12.25px;line-height:30px;height:30px;color:#5b5e64;transform-origin:0 18px;transform:scaleY(1.12);">0 B</div>
<div class="t " style="left:105.2px;top:489px;font-size:12.25px;line-height:30px;height:30px;color:#5b5e64;transform-origin:0 18px;transform:scaleY(1.12);">Oct 30 3:34:00 PM</div>
<div class="t " style="left:350.95px;top:489px;font-size:12.25px;line-height:30px;height:30px;color:#5b5e64;transform-origin:0 18px;transform:scaleY(1.12);">3:51:00 PM</div>
<div class="t " style="left:542.25px;top:489px;font-size:12.25px;line-height:30px;height:30px;color:#5b5e64;transform-origin:0 18px;transform:scaleY(1.12);">4:05:00 PM</div>
<div class="t " style="left:733.55px;top:489px;font-size:12.25px;line-height:30px;height:30px;color:#5b5e64;transform-origin:0 18px;transform:scaleY(1.12);">4:19:00 PM</div>
<div class="t " style="left:919.5px;top:489px;font-size:12.25px;line-height:30px;height:30px;color:#5b5e64;transform-origin:0 18px;transform:scaleY(1.12);">4:34:00 PM</div>
<div class="t " style="left:1046.95px;top:489px;font-size:12.25px;line-height:30px;height:30px;color:#5b5e64;transform-origin:0 18px;transform:scaleY(1.12);">Oct 30 3:34:00 PM</div>
<div class="t " style="left:1292.7px;top:489px;font-size:12.25px;line-height:30px;height:30px;color:#5b5e64;transform-origin:0 18px;transform:scaleY(1.12);">3:51:00 PM</div>
<div class="t " style="left:1484.0px;top:489px;font-size:12.25px;line-height:30px;height:30px;color:#5b5e64;transform-origin:0 18px;transform:scaleY(1.12);">4:05:00 PM</div>
<div class="t " style="left:1675.3px;top:489px;font-size:12.25px;line-height:30px;height:30px;color:#5b5e64;transform-origin:0 18px;transform:scaleY(1.12);">4:19:00 PM</div>
<div class="t " style="left:1861.25px;top:489px;font-size:12.25px;line-height:30px;height:30px;color:#5b5e64;transform-origin:0 18px;transform:scaleY(1.12);">4:34:00 PM</div>
<div class="r" style="left:111.3px;top:529.8px;width:13.40px;height:1.30px;background:#20c08f"></div>
<div class="t " style="left:129px;top:516px;font-size:12.25px;line-height:30px;height:30px;color:#20c08f;transform-origin:0 18px;transform:scaleY(1.12);">my-hyperdx-hdx-o..85674595bb-wvrt6</div>
<div class="r" style="left:387.3px;top:529.8px;width:13.40px;height:1.30px;background:#7f58dc"></div>
<div class="t " style="left:404.8px;top:516px;font-size:12.25px;line-height:30px;height:30px;color:#7f58dc;transform-origin:0 18px;transform:scaleY(1.12);">gke-metrics-agent-8w97v</div>
<div class="r" style="left:583px;top:529.8px;width:13.40px;height:1.30px;background:#d9a765"></div>
<div class="t " style="left:601px;top:516px;font-size:12.25px;line-height:30px;height:30px;color:#d9a765;transform-origin:0 18px;transform:scaleY(1.12);">collector-dpml2</div>
<div class="r" style="left:719.3px;top:529.8px;width:13.40px;height:1.30px;background:#2f7be8"></div>
<div class="t " style="left:737.7px;top:516px;font-size:12.25px;line-height:30px;height:30px;color:#2f7be8;transform-origin:0 18px;transform:scaleY(1.12);">pdcsi-node-hlfwp</div>
<div class="t " style="left:863.5px;top:516px;font-size:12.25px;line-height:30px;height:30px;color:#8a8d93;transform-origin:0 18px;transform:scaleY(1.12);text-decoration:underline;text-underline-offset:2px">+56 more</div>
<div class="r" style="left:1052.8px;top:529.8px;width:13.40px;height:1.30px;background:#20c08f"></div>
<div class="t " style="left:1070.5px;top:516px;font-size:12.25px;line-height:30px;height:30px;color:#20c08f;transform-origin:0 18px;transform:scaleY(1.12);">my-hyperdx-hdx-o..85674595bb-wvrt6</div>
<div class="r" style="left:1328.8px;top:529.8px;width:13.40px;height:1.30px;background:#7f58dc"></div>
<div class="t " style="left:1346.3px;top:516px;font-size:12.25px;line-height:30px;height:30px;color:#7f58dc;transform-origin:0 18px;transform:scaleY(1.12);">gke-metrics-agent-8w97v</div>
<div class="r" style="left:1524.5px;top:529.8px;width:13.40px;height:1.30px;background:#d9a765"></div>
<div class="t " style="left:1542.5px;top:516px;font-size:12.25px;line-height:30px;height:30px;color:#d9a765;transform-origin:0 18px;transform:scaleY(1.12);">collector-dpml2</div>
<div class="r" style="left:1660.8px;top:529.8px;width:13.40px;height:1.30px;background:#2f7be8"></div>
<div class="t " style="left:1679.2px;top:516px;font-size:12.25px;line-height:30px;height:30px;color:#2f7be8;transform-origin:0 18px;transform:scaleY(1.12);">pdcsi-node-hlfwp</div>
<div class="t " style="left:1805.0px;top:516px;font-size:12.25px;line-height:30px;height:30px;color:#8a8d93;transform-origin:0 18px;transform:scaleY(1.12);text-decoration:underline;text-underline-offset:2px">+56 more</div>
<div class="r" style="left:1604px;top:588px;width:332.00px;height:36.30px;background:#141517;border-radius:4px"></div>
<div class="r" style="left:1608.3px;top:593px;width:69.70px;height:27.00px;background:#2c2e33;border-radius:3px"></div>
<div class="t " style="left:1614.6px;top:593px;font-size:13.3px;line-height:30px;height:30px;color:#ffffff;transform-origin:0 18px;transform:scaleY(1.12);-webkit-text-stroke:0.5px #fff">Running</div>
<div class="t md" style="left:1684px;top:593px;font-size:13.3px;line-height:30px;height:30px;color:#b4b5b9;transform-origin:0 18px;transform:scaleY(1.12);">Succeeded</div>
<div class="t md" style="left:1769.4px;top:593px;font-size:13.3px;line-height:30px;height:30px;color:#b4b5b9;transform-origin:0 18px;transform:scaleY(1.12);">Pending</div>
<div class="t md" style="left:1838.8px;top:593px;font-size:13.3px;line-height:30px;height:30px;color:#b4b5b9;transform-origin:0 18px;transform:scaleY(1.12);">Failed</div>
<div class="t md" style="left:1900px;top:593px;font-size:13.3px;line-height:30px;height:30px;color:#b4b5b9;transform-origin:0 18px;transform:scaleY(1.12);">All</div>
<div class="r" style="left:1763.7px;top:593.5px;width:1.00px;height:26.10px;background:#2c2e33"></div>
<div class="r" style="left:1832.3px;top:593.5px;width:1.00px;height:26.10px;background:#2c2e33"></div>
<div class="r" style="left:1894px;top:593.5px;width:1.00px;height:26.10px;background:#2c2e33"></div>
<div class="t " style="left:105px;top:641px;font-size:14.4px;line-height:30px;height:30px;color:#a6a7ab;transform-origin:0 19px;transform:scaleY(1.12);">Name</div>
<div class="t " style="left:734.2px;top:641px;font-size:14.4px;line-height:30px;height:30px;color:#a6a7ab;transform-origin:0 19px;transform:scaleY(1.12);">Namespace</div>
<div class="t " style="left:921.4px;top:641px;font-size:14.4px;line-height:30px;height:30px;color:#a6a7ab;transform-origin:0 19px;transform:scaleY(1.12);">Node</div>
<div class="t " style="left:1392.5px;top:641px;font-size:14.4px;line-height:30px;height:30px;color:#a6a7ab;transform-origin:0 19px;transform:scaleY(1.12);">Status</div>
<div class="t " style="left:1537.5px;top:641px;font-size:14.4px;line-height:30px;height:30px;color:#a6a7ab;transform-origin:0 19px;transform:scaleY(1.12);">CPU/Limit</div>
<div class="t " style="left:1649.5px;top:641px;font-size:14.4px;line-height:30px;height:30px;color:#a6a7ab;transform-origin:0 19px;transform:scaleY(1.12);">Mem/Limit</div>
<div class="t " style="left:1762px;top:641px;font-size:14.4px;line-height:30px;height:30px;color:#a6a7ab;transform-origin:0 19px;transform:scaleY(1.12);">Age</div>
<div class="t " style="left:1851px;top:641px;font-size:14.4px;line-height:30px;height:30px;color:#a6a7ab;transform-origin:0 19px;transform:scaleY(1.12);">Restarts</div>
<svg class="r" style="left:1924.5px;top:653.5px" width="9" height="6" viewBox="0 0 9 6"><path d="M0.3,0.5H8.7L4.5,5.3Z" fill="#7a9ab5"/></svg>
<div class="t " style="left:105.3px;top:682px;font-size:14.48px;line-height:30px;height:30px;color:#c1c2c5;transform-origin:0 19px;transform:scaleY(1.12);">csi-secrets-store-gke-78n4j</div>
<div class="t " style="left:734.5px;top:682px;font-size:14.48px;line-height:30px;height:30px;color:#c1c2c5;transform-origin:0 19px;transform:scaleY(1.12);">kube-system</div>
<div class="t " style="left:921.6999999999999px;top:682px;font-size:14.48px;line-height:30px;height:30px;color:#c1c2c5;transform-origin:0 19px;transform:scaleY(1.12);">gke-pme-k8s-standard-main-pool-1dba29d7-yy8o</div>
<div class="r" style="left:1393px;top:685.1999999999999px;width:78.00px;height:22.40px;background:#1a3d37;border-radius:12px"></div>
<div class="t md" style="left:1405px;top:683px;font-size:12.5px;line-height:30px;height:30px;color:#6fe8bd;transform-origin:0 18px;transform:scaleY(1.12);">Running</div>
<div class="t " style="left:1539.0px;top:682px;font-size:14.4px;line-height:30px;height:30px;color:#7d8086;transform-origin:0 19px;transform:scaleY(1.12);">-</div>
<div class="t " style="left:1650.0px;top:683px;font-size:16.6px;line-height:30px;height:30px;color:#cfd0d3;transform-origin:0 19px;transform:scaleY(1.12);">9%</div>
<div class="t " style="left:1762.5px;top:683px;font-size:16.6px;line-height:30px;height:30px;color:#cfd0d3;transform-origin:0 19px;transform:scaleY(1.12);">7d</div>
<div class="t " style="left:1851.5px;top:683px;font-size:16.6px;line-height:30px;height:30px;color:#cfd0d3;transform-origin:0 19px;transform:scaleY(1.12);">0</div>
<div class="t " style="left:105.3px;top:724px;font-size:14.48px;line-height:30px;height:30px;color:#c1c2c5;transform-origin:0 19px;transform:scaleY(1.12);">gmp-operator-7677766fbd-9vm4d</div>
<div class="t " style="left:734.5px;top:724px;font-size:14.48px;line-height:30px;height:30px;color:#c1c2c5;transform-origin:0 19px;transform:scaleY(1.12);">gmp-system</div>
<div class="t " style="left:921.6999999999999px;top:724px;font-size:14.48px;line-height:30px;height:30px;color:#c1c2c5;transform-origin:0 19px;transform:scaleY(1.12);">gke-pme-k8s-standard-main-pool-7b595511-qvph</div>
<div class="r" style="left:1393px;top:727.7499999999999px;width:78.00px;height:22.40px;background:#1a3d37;border-radius:12px"></div>
<div class="t md" style="left:1405px;top:725px;font-size:12.5px;line-height:30px;height:30px;color:#6fe8bd;transform-origin:0 18px;transform:scaleY(1.12);">Running</div>
<div class="t " style="left:1539.0px;top:724px;font-size:14.4px;line-height:30px;height:30px;color:#7d8086;transform-origin:0 19px;transform:scaleY(1.12);">-</div>
<div class="t " style="left:1650.0px;top:726px;font-size:16.6px;line-height:30px;height:30px;color:#cfd0d3;transform-origin:0 19px;transform:scaleY(1.12);">1%</div>
<div class="t " style="left:1762.5px;top:726px;font-size:16.6px;line-height:30px;height:30px;color:#cfd0d3;transform-origin:0 19px;transform:scaleY(1.12);">2d</div>
<div class="t " style="left:1851.5px;top:726px;font-size:16.6px;line-height:30px;height:30px;color:#cfd0d3;transform-origin:0 19px;transform:scaleY(1.12);">0</div>
<div class="t " style="left:105.3px;top:767px;font-size:14.48px;line-height:30px;height:30px;color:#c1c2c5;transform-origin:0 19px;transform:scaleY(1.12);">k8s-otel-daemonset-opentelemetry-collector-agent-r8dlf</div>
<div class="t " style="left:734.5px;top:767px;font-size:14.48px;line-height:30px;height:30px;color:#c1c2c5;transform-origin:0 19px;transform:scaleY(1.12);">otel-demo</div>
<div class="t " style="left:921.6999999999999px;top:767px;font-size:14.48px;line-height:30px;height:30px;color:#c1c2c5;transform-origin:0 19px;transform:scaleY(1.12);">gke-pme-k8s-standard-main-pool-1dba29d7-ybhp</div>
<div class="r" style="left:1393px;top:770.3px;width:78.00px;height:22.40px;background:#1a3d37;border-radius:12px"></div>
<div class="t md" style="left:1405px;top:768px;font-size:12.5px;line-height:30px;height:30px;color:#6fe8bd;transform-origin:0 18px;transform:scaleY(1.12);">Running</div>
<div class="t " style="left:1539.0px;top:767px;font-size:14.4px;line-height:30px;height:30px;color:#7d8086;transform-origin:0 19px;transform:scaleY(1.12);">-</div>
<div class="t " style="left:1651.0px;top:767px;font-size:14.4px;line-height:30px;height:30px;color:#7d8086;transform-origin:0 19px;transform:scaleY(1.12);">-</div>
<div class="t " style="left:1762.5px;top:768px;font-size:16.6px;line-height:30px;height:30px;color:#cfd0d3;transform-origin:0 19px;transform:scaleY(1.12);">2d</div>
<div class="t " style="left:1851.5px;top:768px;font-size:16.6px;line-height:30px;height:30px;color:#cfd0d3;transform-origin:0 19px;transform:scaleY(1.12);">0</div>
<div class="t " style="left:105.3px;top:810px;font-size:14.48px;line-height:30px;height:30px;color:#c1c2c5;transform-origin:0 19px;transform:scaleY(1.12);">k8s-otel-daemonset-opentelemetry-collector-agent-tkp47</div>
<div class="t " style="left:734.5px;top:810px;font-size:14.48px;line-height:30px;height:30px;color:#c1c2c5;transform-origin:0 19px;transform:scaleY(1.12);">otel-demo</div>
<div class="t " style="left:921.6999999999999px;top:810px;font-size:14.48px;line-height:30px;height:30px;color:#c1c2c5;transform-origin:0 19px;transform:scaleY(1.12);">gke-pme-k8s-standard-main-pool-7b595511-avdv</div>
<div class="r" style="left:1393px;top:812.8499999999999px;width:78.00px;height:22.40px;background:#1a3d37;border-radius:12px"></div>
<div class="t md" style="left:1405px;top:811px;font-size:12.5px;line-height:30px;height:30px;color:#6fe8bd;transform-origin:0 18px;transform:scaleY(1.12);">Running</div>
<div class="t " style="left:1539.0px;top:810px;font-size:14.4px;line-height:30px;height:30px;color:#7d8086;transform-origin:0 19px;transform:scaleY(1.12);">-</div>
<div class="t " style="left:1651.0px;top:810px;font-size:14.4px;line-height:30px;height:30px;color:#7d8086;transform-origin:0 19px;transform:scaleY(1.12);">-</div>
<div class="t " style="left:1762.5px;top:811px;font-size:16.6px;line-height:30px;height:30px;color:#cfd0d3;transform-origin:0 19px;transform:scaleY(1.12);">2d</div>
<div class="t " style="left:1851.5px;top:811px;font-size:16.6px;line-height:30px;height:30px;color:#cfd0d3;transform-origin:0 19px;transform:scaleY(1.12);">0</div>
<div class="t " style="left:105.3px;top:852px;font-size:14.48px;line-height:30px;height:30px;color:#c1c2c5;transform-origin:0 19px;transform:scaleY(1.12);">cert-manager-cainjector-856b5d86cc-t5ksv</div>
<div class="t " style="left:734.5px;top:852px;font-size:14.48px;line-height:30px;height:30px;color:#c1c2c5;transform-origin:0 19px;transform:scaleY(1.12);">cert-manager</div>
<div class="t " style="left:921.6999999999999px;top:852px;font-size:14.48px;line-height:30px;height:30px;color:#c1c2c5;transform-origin:0 19px;transform:scaleY(1.12);">gke-pme-k8s-standard-main-pool-1dba29d7-yy8o</div>
<div class="r" style="left:1393px;top:855.3999999999999px;width:78.00px;height:22.40px;background:#1a3d37;border-radius:12px"></div>
<div class="t md" style="left:1405px;top:853px;font-size:12.5px;line-height:30px;height:30px;color:#6fe8bd;transform-origin:0 18px;transform:scaleY(1.12);">Running</div>
<div class="t " style="left:1539.0px;top:852px;font-size:14.4px;line-height:30px;height:30px;color:#7d8086;transform-origin:0 19px;transform:scaleY(1.12);">-</div>
<div class="t " style="left:1651.0px;top:852px;font-size:14.4px;line-height:30px;height:30px;color:#7d8086;transform-origin:0 19px;transform:scaleY(1.12);">-</div>
<div class="t " style="left:1762.5px;top:853px;font-size:16.6px;line-height:30px;height:30px;color:#cfd0d3;transform-origin:0 19px;transform:scaleY(1.12);">7d</div>
<div class="t " style="left:1851.5px;top:853px;font-size:16.6px;line-height:30px;height:30px;color:#cfd0d3;transform-origin:0 19px;transform:scaleY(1.12);">0</div>
<div class="t " style="left:105.3px;top:895px;font-size:14.48px;line-height:30px;height:30px;color:#c1c2c5;transform-origin:0 19px;transform:scaleY(1.12);">product-catalog-746cd48fd6-nffgb</div>
<div class="t " style="left:734.5px;top:895px;font-size:14.48px;line-height:30px;height:30px;color:#c1c2c5;transform-origin:0 19px;transform:scaleY(1.12);">otel-demo</div>
<div class="t " style="left:921.6999999999999px;top:895px;font-size:14.48px;line-height:30px;height:30px;color:#c1c2c5;transform-origin:0 19px;transform:scaleY(1.12);">gke-pme-k8s-standard-main-pool-7b595511-kr1x</div>
<div class="r" style="left:1393px;top:897.9499999999999px;width:78.00px;height:22.40px;background:#1a3d37;border-radius:12px"></div>
<div class="t md" style="left:1405px;top:896px;font-size:12.5px;line-height:30px;height:30px;color:#6fe8bd;transform-origin:0 18px;transform:scaleY(1.12);">Running</div>
<div class="t " style="left:1538.0px;top:896px;font-size:16.6px;line-height:30px;height:30px;color:#cfd0d3;transform-origin:0 19px;transform:scaleY(1.12);">51%</div>
<div class="t " style="left:1650.0px;top:896px;font-size:16.6px;line-height:30px;height:30px;color:#cfd0d3;transform-origin:0 19px;transform:scaleY(1.12);">8%</div>
<div class="t " style="left:1762.5px;top:896px;font-size:16.6px;line-height:30px;height:30px;color:#cfd0d3;transform-origin:0 19px;transform:scaleY(1.12);">2d</div>
<div class="t " style="left:1851.5px;top:896px;font-size:16.6px;line-height:30px;height:30px;color:#cfd0d3;transform-origin:0 19px;transform:scaleY(1.12);">0</div>
<div class="t " style="left:105.3px;top:937px;font-size:14.48px;line-height:30px;height:30px;color:#c1c2c5;transform-origin:0 19px;transform:scaleY(1.12);">pdcsi-node-hlfwp</div>
<div class="t " style="left:734.5px;top:937px;font-size:14.48px;line-height:30px;height:30px;color:#c1c2c5;transform-origin:0 19px;transform:scaleY(1.12);">kube-system</div>
<div class="t " style="left:921.6999999999999px;top:937px;font-size:14.48px;line-height:30px;height:30px;color:#c1c2c5;transform-origin:0 19px;transform:scaleY(1.12);">gke-pme-k8s-standard-main-pool-1dba29d7-yy8o</div>
<div class="r" style="left:1393px;top:940.4999999999999px;width:78.00px;height:22.40px;background:#1a3d37;border-radius:12px"></div>
<div class="t md" style="left:1405px;top:938px;font-size:12.5px;line-height:30px;height:30px;color:#6fe8bd;transform-origin:0 18px;transform:scaleY(1.12);">Running</div>
<div class="t " style="left:1539.0px;top:937px;font-size:14.4px;line-height:30px;height:30px;color:#7d8086;transform-origin:0 19px;transform:scaleY(1.12);">-</div>
<div class="t " style="left:1650.0px;top:939px;font-size:16.6px;line-height:30px;height:30px;color:#cfd0d3;transform-origin:0 19px;transform:scaleY(1.12);">4%</div>
<div class="t " style="left:1762.5px;top:939px;font-size:16.6px;line-height:30px;height:30px;color:#cfd0d3;transform-origin:0 19px;transform:scaleY(1.12);">7d</div>
<div class="t " style="left:1851.5px;top:939px;font-size:16.6px;line-height:30px;height:30px;color:#cfd0d3;transform-origin:0 19px;transform:scaleY(1.12);">0</div>
<div class="r" style="left:105px;top:1048px;width:1814.00px;height:28.30px;background:#18191d"></div>
<div class="t md" style="left:145px;top:1049px;font-size:13.2px;line-height:30px;height:30px;color:#e3e4e6;transform-origin:0 18px;transform:scaleY(1.12);">Timestamp (Local)</div>
<div class="t md" style="left:333.8px;top:1049px;font-size:13.2px;line-height:30px;height:30px;color:#e3e4e6;transform-origin:0 18px;transform:scaleY(1.12);">Severity</div>
<div class="t md" style="left:461.8px;top:1049px;font-size:13.2px;line-height:30px;height:30px;color:#e3e4e6;transform-origin:0 18px;transform:scaleY(1.12);">Kind</div>
<div class="t md" style="left:639.2px;top:1049px;font-size:13.2px;line-height:30px;height:30px;color:#e3e4e6;transform-origin:0 18px;transform:scaleY(1.12);">Name</div>
<div class="t md" style="left:817.2px;top:1049px;font-size:13.2px;line-height:30px;height:30px;color:#e3e4e6;transform-origin:0 18px;transform:scaleY(1.12);">Message</div>
<svg class="r" style="left:319.3px;top:1058.5px" width="6" height="10" viewBox="0 0 6 10"><rect x="0.3" y="0.4" width="1.6" height="1.6" fill="#666970"/><rect x="0.3" y="4" width="1.6" height="1.6" fill="#666970"/><rect x="0.3" y="7.6" width="1.6" height="1.6" fill="#666970"/><rect x="3.6" y="0.4" width="1.6" height="1.6" fill="#666970"/><rect x="3.6" y="4" width="1.6" height="1.6" fill="#666970"/><rect x="3.6" y="7.6" width="1.6" height="1.6" fill="#666970"/></svg>
<svg class="r" style="left:447.3px;top:1058.5px" width="6" height="10" viewBox="0 0 6 10"><rect x="0.3" y="0.4" width="1.6" height="1.6" fill="#666970"/><rect x="0.3" y="4" width="1.6" height="1.6" fill="#666970"/><rect x="0.3" y="7.6" width="1.6" height="1.6" fill="#666970"/><rect x="3.6" y="0.4" width="1.6" height="1.6" fill="#666970"/><rect x="3.6" y="4" width="1.6" height="1.6" fill="#666970"/><rect x="3.6" y="7.6" width="1.6" height="1.6" fill="#666970"/></svg>
<svg class="r" style="left:625px;top:1058.5px" width="6" height="10" viewBox="0 0 6 10"><rect x="0.3" y="0.4" width="1.6" height="1.6" fill="#666970"/><rect x="0.3" y="4" width="1.6" height="1.6" fill="#666970"/><rect x="0.3" y="7.6" width="1.6" height="1.6" fill="#666970"/><rect x="3.6" y="0.4" width="1.6" height="1.6" fill="#666970"/><rect x="3.6" y="4" width="1.6" height="1.6" fill="#666970"/><rect x="3.6" y="7.6" width="1.6" height="1.6" fill="#666970"/></svg>
<svg class="r" style="left:802.7px;top:1058.5px" width="6" height="10" viewBox="0 0 6 10"><rect x="0.3" y="0.4" width="1.6" height="1.6" fill="#666970"/><rect x="0.3" y="4" width="1.6" height="1.6" fill="#666970"/><rect x="0.3" y="7.6" width="1.6" height="1.6" fill="#666970"/><rect x="3.6" y="0.4" width="1.6" height="1.6" fill="#666970"/><rect x="3.6" y="4" width="1.6" height="1.6" fill="#666970"/><rect x="3.6" y="7.6" width="1.6" height="1.6" fill="#666970"/></svg>
<svg class="r" style="left:116.5px;top:1081.45px" width="9" height="13" viewBox="0 0 9 13"><path d="M1.8,1.5L7,6.5L1.8,11.5" fill="none" stroke="#b8b9bd" stroke-width="1.4" stroke-linecap="round" stroke-linejoin="round"/></svg>
<div class="r" style="left:133.7px;top:1081.95px;width:1.00px;height:11.50px;background:#2f3136"></div>
<div class="t " style="left:145.5px;top:1076px;font-size:13.3px;line-height:30px;height:30px;color:#c9cacd;transform-origin:0 18px;transform:scaleY(1.12);">Oct 30 4:33:51.000 PM</div>
<div class="t " style="left:334.6px;top:1076px;font-size:13.3px;line-height:30px;height:30px;color:#f0be35;transform-origin:0 18px;transform:scaleY(1.12);font-weight:bold;-webkit-text-stroke:0">Warning</div>
<div class="t " style="left:462.5px;top:1076px;font-size:13.3px;line-height:30px;height:30px;color:#c1c2c5;transform-origin:0 18px;transform:scaleY(1.12);">Node</div>
<div class="t " style="left:640.5px;top:1076px;font-size:13.3px;line-height:30px;height:30px;color:#c1c2c5;transform-origin:0 18px;transform:scaleY(1.12);">gke-pme-k8s-standard…</div>
<svg class="r" style="left:116.5px;top:1105.65px" width="9" height="13" viewBox="0 0 9 13"><path d="M1.8,1.5L7,6.5L1.8,11.5" fill="none" stroke="#b8b9bd" stroke-width="1.4" stroke-linecap="round" stroke-linejoin="round"/></svg>
<div class="r" style="left:133.7px;top:1106.15px;width:1.00px;height:11.50px;background:#2f3136"></div>
<div class="t " style="left:145.5px;top:1100px;font-size:13.3px;line-height:30px;height:30px;color:#c9cacd;transform-origin:0 18px;transform:scaleY(1.12);">Oct 30 4:33:34.000 PM</div>
<div class="t " style="left:334.6px;top:1100px;font-size:13.3px;line-height:30px;height:30px;color:#f0be35;transform-origin:0 18px;transform:scaleY(1.12);font-weight:bold;-webkit-text-stroke:0">Warning</div>
<div class="t " style="left:462.5px;top:1100px;font-size:13.3px;line-height:30px;height:30px;color:#c1c2c5;transform-origin:0 18px;transform:scaleY(1.12);">Node</div>
<div class="t " style="left:640.5px;top:1100px;font-size:13.3px;line-height:30px;height:30px;color:#c1c2c5;transform-origin:0 18px;transform:scaleY(1.12);">gke-pme-k8s-standard…</div>
<svg class="r" style="left:1830px;top:1045px" width="90" height="40" viewBox="1830 1045 90 40" fill="none" stroke="#c0c1c5" stroke-linecap="round" stroke-linejoin="round"><path d="M1843,1061.1L1839.6,1064.2L1843,1067.3M1850.4,1061.1L1853.9,1064.2L1850.4,1067.3" stroke-width="1.35"/><path d="M1848.6,1057.6L1845.2,1070.5" stroke-width="1.2"/><path d="M1866.6,1059.4H1879.6" stroke-width="1.0"/><path d="M1866.6,1064.3H1877A2.4,2.4 0 0 1 1877,1069.1H1875.5" stroke-width="1.5"/><path d="M1866.6,1069.1H1871.6" stroke-width="1.3"/><path d="M1875.7,1067.2L1873.4,1069.1L1875.7,1071Z" fill="#c0c1c5" stroke-width="0.6"/><path d="M1900,1058.4V1067.6M1895.6,1063.6L1900,1068L1904.4,1063.6" stroke-width="1.4"/><path d="M1893.9,1068.4V1069.7A1.4,1.4 0 0 0 1895.3,1071.1H1904.7A1.4,1.4 0 0 0 1906.1,1069.7V1068.4" stroke-width="1.4"/></svg>
<div class="r" style="left:1919.2px;top:1048px;width:16.20px;height:79.00px;background:#2d2d2e"></div>
<svg class="r" style="left:1920px;top:1046px" width="16" height="34" viewBox="1920 1046 16 34"><rect x="1923.6" y="1049.1" width="9" height="26.7" rx="4.5" fill="#7b7b7b"/></svg>
<svg class="r" style="left:15px;top:18px" width="25" height="28" viewBox="0 0 25 28"><path d="M12.3,1.2L23.3,7.4V20L12.3,26.3L1.3,20V7.4Z" fill="#50f57c"/><path d="M15.1,4.6L7.0,14.9H11.5L9.3,22.4L17.1,12.2H12.8Z" fill="#0f1216"/></svg>
<svg class="r" style="left:0;top:60px" width="57" height="230" viewBox="0 60 57 230" fill="none" stroke="#808389" stroke-width="1.2"><rect x="19.2" y="81.4" width="15.8" height="13.9" rx="2.2"/><path d="M23.5,81.4V95.3"/><rect x="18.2" y="143.8" width="14.4" height="14.4" rx="1.8"/><path d="M21.7,143.8V158.2" stroke-width="1.5"/><path d="M24.4,146.6H30.2M24.4,149.6H30.2M24.4,152.5H30.2M24.4,155.5H30.2" stroke-width="1.1"/><path d="M18.3,180V194.8H33" stroke-width="1.5"/><path d="M20.6,191.4L24.9,185.3L27.1,188.3L31.9,183.2" stroke-width="1.2"/><rect x="19.9" y="219.3" width="11.7" height="8.6" rx="0.8"/><path d="M17.9,229.9H33" stroke-width="1.5"/><rect x="18.3" y="254.6" width="5.6" height="13.9" rx="0.6"/><rect x="27" y="254.6" width="5.5" height="4.8" rx="0.6"/><rect x="27" y="263.4" width="5.5" height="5.1" rx="0.6"/></svg>
<svg class="r" style="left:10px;top:1036px" width="40" height="40" viewBox="10 1036 40 40"><circle cx="28.95" cy="1055.1" r="15.5" fill="#52535e"/></svg>
<div class="t" style="left:13.5px;width:31px;top:1046.2px;font-size:16.5px;line-height:20px;color:#ececee;text-align:center;font-weight:bold;-webkit-text-stroke:0;font-family:'Liberation Sans',sans-serif">?</div>
<div class="r" style="left:16px;top:1082.4px;width:28.20px;height:28.20px;background:#1a3330;border-radius:50%"></div>
<div class="t" style="left:16px;width:28.2px;top:1089.4px;font-size:11.6px;line-height:16px;color:#63f0c6;text-align:center;font-weight:bold;font-family:'Liberation Sans',sans-serif">U</div>
<svg class="r" style="left:0;top:1118px" width="8" height="8" viewBox="0 0 8 8"><path d="M0,0V8H8A7,7 0 0 1 0.8,0Z" fill="#000"/></svg>
<svg class="r" style="left:1992px;top:1120px" width="7" height="7" viewBox="0 0 7 7"><path d="M7,0V7H0A6.5,6.5 0 0 0 7,0Z" fill="#000"/></svg>
<svg class="r" style="left:0;top:0;pointer-events:none" width="1999" height="1127" viewBox="0 0 1999 1127"><rect x="88" y="225.00" width="923.50" height="1.70" fill="#2c2e33"/><rect x="1030" y="225.00" width="923.20" height="1.70" fill="#2c2e33"/><rect x="88" y="635.00" width="1865.20" height="1.70" fill="#2c2e33"/><rect x="88" y="1033.35" width="1865.20" height="1.70" fill="#2c2e33"/><rect x="70" y="159.30" width="1901.70" height="2.30" fill="#2c2e33"/><rect x="70" y="159.30" width="70.40" height="2.30" fill="#1fb592"/><rect x="88" y="674.15" width="1865.20" height="1.70" fill="#2c2e33"/><rect x="88" y="716.62" width="1865.20" height="1.70" fill="#2c2e33"/><rect x="88" y="759.09" width="1865.20" height="1.70" fill="#2c2e33"/><rect x="88" y="801.56" width="1865.20" height="1.70" fill="#2c2e33"/><rect x="88" y="844.03" width="1865.20" height="1.70" fill="#2c2e33"/><rect x="88" y="886.50" width="1865.20" height="1.70" fill="#2c2e33"/><rect x="88" y="928.97" width="1865.20" height="1.70" fill="#2c2e33"/></svg>
<div class="r" style="left:0px;top:1125.5px;width:1999.00px;height:1.50px;background:#4d6c75"></div>
</div></body></html>
